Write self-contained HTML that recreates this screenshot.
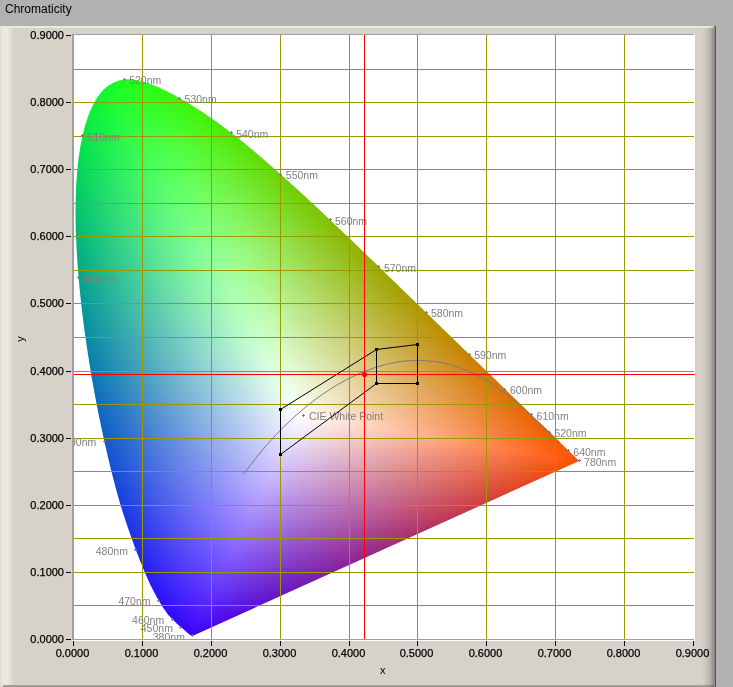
<!DOCTYPE html>
<html><head><meta charset="utf-8">
<style>
html,body{margin:0;padding:0;width:733px;height:687px;overflow:hidden;background:#b1b1b1;font-family:"Liberation Sans",sans-serif;}
#title{position:absolute;left:5px;top:2px;font-size:12px;line-height:14px;color:#000;}
#panel{position:absolute;left:0;top:26px;width:716px;height:661px;background:#d6d2ca;}
#ptop{position:absolute;left:0;top:26px;width:714px;height:2px;background:linear-gradient(90deg,#ebe8dd 0,#ebe8dd 706px,#dedacf 712px,#b9b6ae 714px);}
#pleft{position:absolute;left:0;top:28px;width:14px;height:659px;background:linear-gradient(90deg,#dcd8cc 0px,#ebe7de 2px,#ede9e3 7px,#e4e0d6 10px,#d6d2ca 14px);}
#pright{position:absolute;left:702px;top:26px;width:14px;height:661px;background:linear-gradient(90deg,#d6d2ca 0px,#cdc9bf 3px,#b8b4ac 8px,#9a968f 11px,#8a8780 13px,#55544f 13px,#55544f 14px);}
#pbot{position:absolute;left:3px;top:685px;width:711px;height:2px;background:linear-gradient(90deg,#a19d96 0,#a19d96 700px,#8d8a84 708px,#6a6964 711px);}
#plot{position:absolute;left:72px;top:34px;width:623px;height:607px;background:#fff;}
#plotl{position:absolute;left:72px;top:34px;width:2px;height:606px;background:#a0a0a0;}
#plott{position:absolute;left:72px;top:34px;width:622px;height:1px;background:#a0a0a0;}
#plotb{position:absolute;left:72px;top:639px;width:622px;height:1px;background:#a0a0a0;}
#clip{position:absolute;left:0;top:0;width:733px;height:687px;clip-path:polygon(192.9px 635.7px,192.9px 635.7px,192.9px 635.7px,192.9px 635.7px,192.9px 635.7px,192.9px 635.7px,192.8px 635.7px,192.8px 635.7px,192.8px 635.7px,192.8px 635.7px,192.7px 635.7px,192.7px 635.7px,192.7px 635.7px,192.6px 635.7px,192.6px 635.7px,192.6px 635.7px,192.5px 635.7px,192.5px 635.7px,192.5px 635.8px,192.4px 635.8px,192.4px 635.8px,192.4px 635.8px,192.3px 635.8px,192.3px 635.8px,192.2px 635.8px,192.2px 635.8px,192.1px 635.8px,192.1px 635.8px,192.0px 635.8px,191.9px 635.8px,191.9px 635.8px,191.8px 635.8px,191.8px 635.8px,191.7px 635.8px,191.6px 635.8px,191.5px 635.8px,191.5px 635.7px,191.4px 635.7px,191.3px 635.7px,191.2px 635.6px,191.1px 635.6px,190.9px 635.5px,190.8px 635.4px,190.6px 635.3px,190.5px 635.2px,190.3px 635.1px,190.1px 635.0px,190.0px 634.9px,189.8px 634.7px,189.6px 634.5px,189.3px 634.4px,189.1px 634.2px,188.8px 634.0px,188.6px 633.8px,188.3px 633.5px,188.0px 633.3px,187.7px 633.0px,187.3px 632.7px,187.0px 632.4px,186.6px 632.1px,186.3px 631.7px,185.9px 631.4px,185.4px 631.0px,185.0px 630.6px,184.5px 630.2px,184.0px 629.7px,183.4px 629.3px,182.9px 628.8px,182.2px 628.3px,181.6px 627.7px,180.9px 627.1px,180.2px 626.5px,179.5px 625.9px,178.7px 625.2px,177.9px 624.5px,177.0px 623.7px,176.1px 622.9px,175.2px 622.1px,174.2px 621.1px,173.2px 620.1px,172.2px 619.1px,171.1px 617.9px,170.0px 616.7px,168.8px 615.4px,167.6px 613.9px,166.3px 612.2px,165.0px 610.3px,163.5px 608.2px,161.9px 605.8px,160.3px 603.1px,158.5px 600.2px,156.7px 597.0px,154.8px 593.5px,152.8px 589.6px,150.7px 585.4px,148.5px 580.7px,146.2px 575.6px,143.8px 570.0px,141.3px 563.8px,138.7px 557.2px,135.9px 549.9px,133.0px 542.1px,130.0px 533.7px,126.8px 524.6px,123.6px 514.8px,120.3px 504.3px,117.1px 493.1px,113.9px 481.1px,110.7px 468.5px,107.5px 455.1px,104.3px 441.0px,101.1px 426.3px,97.9px 410.9px,94.9px 395.0px,91.9px 378.7px,89.2px 362.0px,86.6px 345.2px,84.2px 328.3px,82.1px 311.4px,80.2px 294.4px,78.6px 277.7px,77.3px 261.1px,76.4px 245.0px,75.7px 229.3px,75.5px 214.2px,75.7px 199.5px,76.2px 185.4px,77.1px 171.8px,78.5px 158.9px,80.3px 146.8px,82.6px 135.5px,85.2px 125.2px,88.3px 115.8px,91.8px 107.4px,95.6px 100.1px,99.8px 94.0px,104.2px 89.1px,108.9px 85.2px,113.9px 82.4px,119.0px 80.5px,124.2px 79.4px,129.5px 79.2px,135.0px 79.8px,140.5px 80.9px,146.0px 82.5px,151.6px 84.5px,157.3px 86.8px,162.9px 89.4px,168.6px 92.2px,174.1px 95.1px,179.6px 98.2px,185.0px 101.3px,190.3px 104.4px,195.5px 107.7px,200.7px 111.0px,205.9px 114.4px,211.0px 118.0px,216.1px 121.5px,221.1px 125.2px,226.2px 128.9px,231.2px 132.8px,236.2px 136.7px,241.2px 140.6px,246.2px 144.7px,251.1px 148.7px,256.1px 152.9px,261.0px 157.1px,266.0px 161.4px,270.9px 165.7px,275.8px 170.0px,280.8px 174.4px,285.7px 178.8px,290.6px 183.3px,295.6px 187.8px,300.5px 192.3px,305.4px 196.8px,310.3px 201.4px,315.3px 206.0px,320.2px 210.6px,325.1px 215.3px,330.0px 219.9px,334.9px 224.6px,339.9px 229.3px,344.8px 233.9px,349.7px 238.6px,354.6px 243.3px,359.5px 248.0px,364.3px 252.7px,369.2px 257.4px,374.1px 262.1px,378.9px 266.7px,383.7px 271.4px,388.5px 276.0px,393.3px 280.7px,398.1px 285.3px,402.8px 289.9px,407.5px 294.5px,412.2px 299.0px,416.9px 303.5px,421.5px 308.0px,426.0px 312.4px,430.6px 316.8px,435.1px 321.2px,439.5px 325.5px,443.9px 329.8px,448.3px 334.0px,452.6px 338.2px,456.8px 342.3px,461.0px 346.4px,465.2px 350.4px,469.2px 354.3px,473.2px 358.2px,477.1px 362.0px,481.0px 365.7px,484.7px 369.4px,488.4px 372.9px,491.9px 376.3px,495.3px 379.6px,498.6px 382.8px,501.8px 386.0px,505.0px 389.0px,508.0px 392.0px,511.1px 394.9px,514.0px 397.8px,516.8px 400.5px,519.6px 403.2px,522.2px 405.7px,524.7px 408.1px,527.1px 410.5px,529.4px 412.7px,531.6px 414.8px,533.8px 416.9px,535.8px 418.9px,537.8px 420.8px,539.7px 422.7px,541.5px 424.4px,543.2px 426.1px,544.9px 427.7px,546.4px 429.2px,547.9px 430.7px,549.4px 432.1px,550.7px 433.4px,552.0px 434.7px,553.3px 435.9px,554.5px 437.0px,555.6px 438.1px,556.7px 439.2px,557.8px 440.2px,558.8px 441.2px,559.7px 442.1px,560.7px 443.0px,561.6px 443.9px,562.5px 444.7px,563.3px 445.6px,564.1px 446.4px,564.9px 447.1px,565.6px 447.8px,566.4px 448.5px,567.0px 449.2px,567.7px 449.8px,568.3px 450.5px,568.9px 451.1px,569.5px 451.6px,570.1px 452.1px,570.6px 452.7px,571.1px 453.1px,571.6px 453.6px,572.0px 454.0px,572.4px 454.4px,572.8px 454.8px,573.1px 455.1px,573.5px 455.4px,573.8px 455.8px,574.1px 456.1px,574.4px 456.4px,574.7px 456.6px,575.0px 456.9px,575.2px 457.1px,575.4px 457.4px,575.7px 457.6px,575.9px 457.8px,576.1px 458.0px,576.2px 458.1px,576.4px 458.3px,576.5px 458.4px,576.6px 458.5px,576.8px 458.7px,576.9px 458.8px,577.0px 458.9px,577.1px 459.0px,577.3px 459.1px,577.4px 459.2px,577.5px 459.3px,577.6px 459.4px,577.7px 459.5px,577.8px 459.6px,577.9px 459.7px,578.0px 459.8px,578.1px 459.9px,578.1px 460.0px,578.2px 460.1px,578.3px 460.2px,578.4px 460.3px,578.5px 460.4px,578.6px 460.4px,578.7px 460.5px,578.7px 460.6px,578.8px 460.6px,578.8px 460.7px,578.9px 460.7px,578.9px 460.7px,578.9px 460.8px,579.0px 460.8px,579.0px 460.8px,579.0px 460.9px,579.1px 460.9px,579.1px 460.9px,579.1px 460.9px,579.1px 460.9px,579.1px 460.9px,579.1px 460.9px);}
#blur{position:absolute;left:0;top:0;width:733px;height:687px;filter:blur(0.8px);}
#blur i{position:absolute;display:block;height:3px;}
.yl,.xl{-webkit-text-stroke:0.25px #000;}
.yl,.xl,#title{will-change:transform;}
.yl{position:absolute;left:0;width:64px;text-align:right;font-size:11px;line-height:14px;color:#000;}
.xl{position:absolute;top:646px;width:61px;text-align:center;font-size:11px;line-height:14px;color:#000;}
svg{position:absolute;left:0;top:0;}
</style></head><body>
<div id="title">Chromaticity</div>
<div id="panel"></div>
<div id="pleft"></div>
<div id="pright"></div>
<div id="pbot"></div>
<div id="ptop"></div>
<div id="plot"></div>
<div id="clip"><div id="blur">
<i style="left:105px;top:76px;width:48px;background:linear-gradient(90deg,#0dfc20 0px,#12fe1e 8px,#17ff1c 16px,#1bff18 24px,#1fff14 32px,#22fd0f 40px,#24fc0a 48px)"></i>
<i style="left:99px;top:79px;width:63px;background:linear-gradient(90deg,#09fb24 0px,#0ffd22 8px,#15fe20 16px,#19ff1d 24px,#1eff1a 32px,#21ff16 40px,#24fd11 48px,#26fb0c 56px,#28f906 64px)"></i>
<i style="left:96px;top:82px;width:73px;background:linear-gradient(90deg,#08f926 0px,#0efb25 8px,#14fd23 16px,#19ff21 24px,#1dff1e 32px,#21ff1a 40px,#24fe16 48px,#27fd11 56px,#29fb0b 64px,#2bf805 72px,#2df500 80px)"></i>
<i style="left:93px;top:85px;width:82px;background:linear-gradient(90deg,#06f729 0px,#0cfa28 8px,#12fc26 16px,#18fe24 24px,#1dff22 32px,#21ff1f 40px,#25ff1b 48px,#28fd16 56px,#2afc11 64px,#2cf90b 72px,#2ef705 80px,#2ff400 88px)"></i>
<i style="left:90px;top:88px;width:91px;background:linear-gradient(90deg,#04f62b 0px,#0bf92a 8px,#11fb29 16px,#17fd28 24px,#1cfe25 32px,#21ff23 40px,#25ff1f 48px,#28fe1b 56px,#2bfd16 64px,#2dfb10 72px,#2ff80a 80px,#30f604 88px,#32f300 96px)"></i>
<i style="left:88px;top:91px;width:98px;background:linear-gradient(90deg,#03f42d 0px,#0af72d 8px,#10fa2c 16px,#16fc2a 24px,#1cfe29 32px,#21ff26 40px,#25ff23 48px,#29ff1f 56px,#2cfd1a 64px,#2efc15 72px,#30f90f 80px,#32f709 88px,#33f402 96px,#34f100 104px)"></i>
<i style="left:86px;top:94px;width:106px;background:linear-gradient(90deg,#02f32f 0px,#09f62f 8px,#10f92e 16px,#16fb2d 24px,#1cfd2b 32px,#21fe29 40px,#25ff26 48px,#29ff23 56px,#2cfe1e 64px,#2ffc19 72px,#31fa14 80px,#33f80e 88px,#34f507 96px,#36f201 104px,#37ef00 112px)"></i>
<i style="left:84px;top:97px;width:113px;background:linear-gradient(90deg,#01f131 0px,#08f531 8px,#0ff831 16px,#15fa30 24px,#1bfc2e 32px,#21fe2c 40px,#25ff2a 48px,#2aff26 56px,#2dff22 64px,#30fd1d 72px,#32fb18 80px,#34f912 88px,#36f60c 96px,#37f306 104px,#38f000 112px,#39ed00 120px)"></i>
<i style="left:83px;top:100px;width:119px;background:linear-gradient(90deg,#00f033 0px,#08f333 8px,#0ef733 16px,#15f932 24px,#1bfc31 32px,#21fd2f 40px,#26ff2d 48px,#2aff2a 56px,#2eff26 64px,#31fe21 72px,#34fc1c 80px,#36fa16 88px,#37f710 96px,#39f40a 104px,#3af103 112px,#3bee00 120px)"></i>
<i style="left:81px;top:103px;width:126px;background:linear-gradient(90deg,#00ee35 0px,#06f235 8px,#0df535 16px,#14f834 24px,#1bfb33 32px,#20fd32 40px,#26fe30 48px,#2bff2d 56px,#2fff2a 64px,#32fe25 72px,#35fd20 80px,#37fb1b 88px,#39f815 96px,#3af60e 104px,#3bf308 112px,#3cef01 120px,#3dec00 128px)"></i>
<i style="left:80px;top:106px;width:131px;background:linear-gradient(90deg,#00ed37 0px,#06f137 8px,#0df437 16px,#14f737 24px,#1bfa36 32px,#21fc34 40px,#26fe33 48px,#2bff30 56px,#2fff2d 64px,#33ff29 72px,#36fd24 80px,#38fb1f 88px,#3af919 96px,#3cf612 104px,#3df40c 112px,#3ef005 120px,#3fed00 128px,#3fe900 136px)"></i>
<i style="left:79px;top:109px;width:137px;background:linear-gradient(90deg,#00eb39 0px,#06ef39 8px,#0df339 16px,#14f639 24px,#1bf938 32px,#21fb37 40px,#26fd35 48px,#2cff33 56px,#30ff30 64px,#34ff2c 72px,#37fe28 80px,#39fc22 88px,#3bfa1d 96px,#3df716 104px,#3ef410 112px,#40f109 120px,#40ee02 128px,#41ea00 136px,#42e600 144px)"></i>
<i style="left:78px;top:112px;width:142px;background:linear-gradient(90deg,#00ea3b 0px,#05ee3b 8px,#0df23b 16px,#14f53b 24px,#1af83a 32px,#21fb39 40px,#27fd38 48px,#2cfe36 56px,#31ff33 64px,#35ff2f 72px,#38fe2b 80px,#3bfd26 88px,#3dfb20 96px,#3ff81a 104px,#40f514 112px,#41f20e 120px,#42ef07 128px,#43eb00 136px,#43e700 144px)"></i>
<i style="left:77px;top:115px;width:147px;background:linear-gradient(90deg,#00e93c 0px,#05ed3d 8px,#0cf03d 16px,#13f43d 24px,#1af73d 32px,#21fa3c 40px,#27fc3a 48px,#2cfe39 56px,#31ff36 64px,#36ff33 72px,#39ff2f 80px,#3cfd2a 88px,#3efb24 96px,#40f91e 104px,#42f618 112px,#43f312 120px,#44f00b 128px,#45ec04 136px,#45e800 144px,#45e400 152px)"></i>
<i style="left:76px;top:118px;width:152px;background:linear-gradient(90deg,#00e73e 0px,#04eb3f 8px,#0cef3f 16px,#13f33f 24px,#1af63f 32px,#21f93e 40px,#27fb3d 48px,#2dfd3b 56px,#32ff39 64px,#36ff36 72px,#3aff32 80px,#3dfe2d 88px,#40fc28 96px,#41fa22 104px,#43f71c 112px,#44f416 120px,#45f10f 128px,#46ed08 136px,#47ea01 144px,#47e600 152px)"></i>
<i style="left:75px;top:121px;width:158px;background:linear-gradient(90deg,#00e640 0px,#04ea40 8px,#0bee41 16px,#13f241 24px,#1af541 32px,#21f840 40px,#27fb3f 48px,#2dfd3e 56px,#32fe3c 64px,#37ff39 72px,#3bff35 80px,#3efe31 88px,#41fc2c 96px,#43fa26 104px,#45f820 112px,#46f51a 120px,#47f213 128px,#48ee0c 136px,#49eb05 144px,#49e700 152px,#49e300 160px)"></i>
<i style="left:74px;top:124px;width:163px;background:linear-gradient(90deg,#00e441 0px,#03e842 8px,#0bec43 16px,#12f043 24px,#1af443 32px,#20f742 40px,#27fa42 48px,#2dfc40 56px,#33fe3f 64px,#38ff3c 72px,#3cff39 80px,#3ffe34 88px,#42fd30 96px,#44fb2a 104px,#46f924 112px,#48f61e 120px,#49f317 128px,#4aef10 136px,#4aec09 144px,#4be802 152px,#4be400 160px,#4bdf00 168px)"></i>
<i style="left:73px;top:127px;width:167px;background:linear-gradient(90deg,#00e343 0px,#02e744 8px,#0aeb44 16px,#12ef45 24px,#19f345 32px,#20f645 40px,#27f944 48px,#2dfb43 56px,#33fd41 64px,#38ff3f 72px,#3dff3c 80px,#40ff38 88px,#43fe33 96px,#46fc2e 104px,#47f928 112px,#49f722 120px,#4af41b 128px,#4bf014 136px,#4ced0d 144px,#4de906 152px,#4de500 160px,#4de100 168px)"></i>
<i style="left:72px;top:130px;width:172px;background:linear-gradient(90deg,#00e145 0px,#02e545 8px,#0aea46 16px,#11ee46 24px,#19f147 32px,#20f547 40px,#27f846 48px,#2dfb45 56px,#33fd44 64px,#39fe42 72px,#3dff3f 80px,#41ff3b 88px,#44fe37 96px,#47fc32 104px,#49fa2c 112px,#4bf826 120px,#4cf51f 128px,#4df119 136px,#4eee12 144px,#4eea0a 152px,#4fe603 160px,#4fe200 168px,#4fdd00 176px)"></i>
<i style="left:72px;top:133px;width:176px;background:linear-gradient(90deg,#00e046 0px,#02e447 8px,#0ae948 16px,#12ed48 24px,#19f149 32px,#21f449 40px,#28f748 48px,#2efa47 56px,#34fc46 64px,#3afe44 72px,#3fff42 80px,#43ff3e 88px,#46fe3a 96px,#48fd35 104px,#4bfb2f 112px,#4cf829 120px,#4ef523 128px,#4ff21c 136px,#50ee15 144px,#50eb0e 152px,#50e706 160px,#51e200 168px,#51de00 176px)"></i>
<i style="left:71px;top:136px;width:181px;background:linear-gradient(90deg,#00de48 0px,#01e349 8px,#09e74a 16px,#11eb4a 24px,#19ef4b 32px,#20f34b 40px,#27f64a 48px,#2ef94a 56px,#34fc49 64px,#3afe47 72px,#3fff45 80px,#43ff41 88px,#47ff3d 96px,#4afd38 104px,#4cfb33 112px,#4ef92d 120px,#4ff627 128px,#50f320 136px,#51ef19 144px,#52ec12 152px,#52e80a 160px,#52e403 168px,#52df00 176px,#52db00 184px)"></i>
<i style="left:71px;top:139px;width:185px;background:linear-gradient(90deg,#00dd49 0px,#02e24a 8px,#0ae64b 16px,#12ea4c 24px,#19ee4c 32px,#21f24d 40px,#28f64c 48px,#2ff94c 56px,#35fb4b 64px,#3bfd49 72px,#40ff47 80px,#45ff44 88px,#48ff40 96px,#4bfd3b 104px,#4efc36 112px,#4ff930 120px,#51f62a 128px,#52f323 136px,#53f01c 144px,#54ec15 152px,#54e80e 160px,#54e406 168px,#54e000 176px,#54db00 184px,#54d700 192px)"></i>
<i style="left:70px;top:142px;width:189px;background:linear-gradient(90deg,#00dc4b 0px,#01e04c 8px,#09e54d 16px,#11e94e 24px,#19ed4e 32px,#20f14e 40px,#28f54e 48px,#2ff84e 56px,#35fa4d 64px,#3bfd4c 72px,#41fe4a 80px,#45ff47 88px,#49ff44 96px,#4cfe3f 104px,#4ffc3a 112px,#51fa34 120px,#52f72e 128px,#54f427 136px,#55f121 144px,#55ed19 152px,#56ea12 160px,#56e50a 168px,#56e103 176px,#56dd00 184px,#56d800 192px)"></i>
<i style="left:70px;top:145px;width:193px;background:linear-gradient(90deg,#00da4d 0px,#01df4e 8px,#09e44f 16px,#11e84f 24px,#19ec50 32px,#21f050 40px,#28f450 48px,#2ff750 56px,#36fa4f 64px,#3cfc4e 72px,#42fe4c 80px,#47ff4a 88px,#4bff46 96px,#4efe42 104px,#50fd3d 112px,#52fa37 120px,#54f831 128px,#55f52b 136px,#56f224 144px,#57ee1d 152px,#58ea15 160px,#58e60e 168px,#58e206 176px,#58dd00 184px,#58d900 192px,#57d400 200px)"></i>
<i style="left:69px;top:148px;width:197px;background:linear-gradient(90deg,#00d94e 0px,#00dd4f 8px,#09e250 16px,#11e751 24px,#19eb52 32px,#20ef52 40px,#28f352 48px,#2ff652 56px,#36f952 64px,#3cfc51 72px,#42fd4f 80px,#47ff4d 88px,#4bff4a 96px,#4fff45 104px,#52fd41 112px,#54fb3b 120px,#56f935 128px,#57f62f 136px,#58f328 144px,#59ef21 152px,#5aeb1a 160px,#5ae712 168px,#5ae30a 176px,#5adf02 184px,#5ada00 192px,#59d500 200px)"></i>
<i style="left:69px;top:151px;width:201px;background:linear-gradient(90deg,#00d750 0px,#01dc51 8px,#09e152 16px,#11e553 24px,#19ea53 32px,#21ee54 40px,#28f254 48px,#30f554 56px,#36f854 64px,#3dfb53 72px,#43fd51 80px,#48ff4f 88px,#4dff4c 96px,#50ff48 104px,#53fd44 112px,#55fc3e 120px,#57f938 128px,#59f632 136px,#5af32b 144px,#5bf024 152px,#5bec1d 160px,#5ce815 168px,#5ce40e 176px,#5cdf06 184px,#5cdb00 192px,#5bd600 200px,#5bd100 208px)"></i>
<i style="left:68px;top:154px;width:205px;background:linear-gradient(90deg,#00d651 0px,#00db52 8px,#08df53 16px,#10e454 24px,#18e855 32px,#20ec56 40px,#28f056 48px,#2ff456 56px,#36f756 64px,#3dfa55 72px,#43fd54 80px,#49fe52 88px,#4dff4f 96px,#51ff4c 104px,#54fe47 112px,#57fc42 120px,#59fa3c 128px,#5af736 136px,#5cf42f 144px,#5cf128 152px,#5ded21 160px,#5de91a 168px,#5ee512 176px,#5ee00a 184px,#5ddc02 192px,#5dd700 200px,#5dd200 208px)"></i>
<i style="left:68px;top:157px;width:209px;background:linear-gradient(90deg,#00d552 0px,#00d954 8px,#08de55 16px,#11e356 24px,#19e757 32px,#21ec58 40px,#28f058 48px,#30f358 56px,#37f758 64px,#3efa57 72px,#44fc56 80px,#4afe55 88px,#4fff52 96px,#53ff4f 104px,#56fe4a 112px,#58fd45 120px,#5afa3f 128px,#5cf839 136px,#5df533 144px,#5ef12c 152px,#5fee25 160px,#5fea1d 168px,#5fe615 176px,#5fe10d 184px,#5fdd05 192px,#5fd800 200px,#5fd300 208px,#5ece00 216px)"></i>
<i style="left:68px;top:160px;width:212px;background:linear-gradient(90deg,#00d354 0px,#00d855 8px,#09dd57 16px,#11e258 24px,#19e659 32px,#21eb59 40px,#29ef5a 48px,#30f25a 56px,#38f65a 64px,#3ef95a 72px,#45fc59 80px,#4bfe57 88px,#50ff55 96px,#54ff51 104px,#57fe4d 112px,#5afd48 120px,#5cfb42 128px,#5ef83c 136px,#5ff536 144px,#60f22f 152px,#61ee28 160px,#61ea20 168px,#61e619 176px,#61e211 184px,#61dd09 192px,#61d901 200px,#60d400 208px,#60cf00 216px)"></i>
<i style="left:67px;top:163px;width:217px;background:linear-gradient(90deg,#00d255 0px,#00d657 8px,#08db58 16px,#10e059 24px,#18e55a 32px,#20e95b 40px,#28ed5c 48px,#30f15c 56px,#37f55c 64px,#3ef85c 72px,#45fb5b 80px,#4bfd5a 88px,#50fe57 96px,#55ff54 104px,#58ff51 112px,#5bfd4c 120px,#5dfb46 128px,#5ff940 136px,#61f63a 144px,#62f333 152px,#62ef2c 160px,#63ec25 168px,#63e71d 176px,#63e315 184px,#63df0d 192px,#63da05 200px,#62d500 208px,#62d000 216px,#61cb00 224px)"></i>
<i style="left:67px;top:166px;width:220px;background:linear-gradient(90deg,#00d057 0px,#00d558 8px,#08da5a 16px,#10df5b 24px,#19e45c 32px,#21e85d 40px,#29ec5d 48px,#30f05e 56px,#38f45e 64px,#3ff75e 72px,#46fa5d 80px,#4cfd5c 88px,#51fe5a 96px,#56ff57 104px,#5aff53 112px,#5dfe4f 120px,#5ffc49 128px,#61f943 136px,#62f73d 144px,#63f336 152px,#64f02f 160px,#65ec28 168px,#65e820 176px,#65e419 184px,#65df11 192px,#65db08 200px,#64d600 208px,#64d100 216px,#63cc00 224px)"></i>
<i style="left:67px;top:169px;width:223px;background:linear-gradient(90deg,#00cf58 0px,#00d45a 8px,#08d95b 16px,#11de5c 24px,#19e35e 32px,#21e75f 40px,#29eb5f 48px,#31ef60 56px,#38f360 64px,#3ff760 72px,#46fa5f 80px,#4dfc5e 88px,#52fe5c 96px,#57ff5a 104px,#5bff56 112px,#5efe52 120px,#61fc4c 128px,#63fa47 136px,#64f740 144px,#65f43a 152px,#66f133 160px,#67ed2b 168px,#67e924 176px,#67e41c 184px,#67e014 192px,#67db0c 200px,#66d603 208px,#66d200 216px,#65cd00 224px)"></i>
<i style="left:67px;top:172px;width:227px;background:linear-gradient(90deg,#00ce5a 0px,#00d35b 8px,#08d85d 16px,#11dd5e 24px,#19e25f 32px,#21e660 40px,#29ea61 48px,#31ef62 56px,#39f262 64px,#40f662 72px,#47f961 80px,#4dfc60 88px,#53fe5f 96px,#58ff5c 104px,#5cff59 112px,#60fe55 120px,#62fd50 128px,#64fa4a 136px,#66f844 144px,#67f53d 152px,#68f136 160px,#68ed2f 168px,#69e927 176px,#69e51f 184px,#69e117 192px,#68dc0f 200px,#68d707 208px,#68d200 216px,#67cd00 224px,#66c800 232px)"></i>
<i style="left:67px;top:175px;width:230px;background:linear-gradient(90deg,#00cd5b 0px,#00d25d 8px,#09d75e 16px,#11dc60 24px,#19e061 32px,#22e562 40px,#2ae963 48px,#32ee63 56px,#39f264 64px,#41f564 72px,#48f963 80px,#4efb63 88px,#54fd61 96px,#59ff5f 104px,#5eff5c 112px,#61fe58 120px,#64fd53 128px,#66fb4d 136px,#67f847 144px,#69f540 152px,#6af239 160px,#6aee32 168px,#6bea2b 176px,#6be623 184px,#6be11b 192px,#6add13 200px,#6ad80a 208px,#69d302 216px,#69ce00 224px,#68c900 232px)"></i>
<i style="left:66px;top:178px;width:234px;background:linear-gradient(90deg,#00cb5d 0px,#00d05e 8px,#08d560 16px,#10da61 24px,#19df62 32px,#21e363 40px,#29e864 48px,#31ec65 56px,#39f066 64px,#40f466 72px,#47f766 80px,#4efa65 88px,#54fd64 96px,#5afe62 104px,#5eff5f 112px,#62ff5b 120px,#65fd56 128px,#67fb51 136px,#69f94b 144px,#6af644 152px,#6bf33d 160px,#6cef36 168px,#6ceb2f 176px,#6ce727 184px,#6ce21f 192px,#6cde17 200px,#6cd90f 208px,#6bd406 216px,#6bcf00 224px,#6aca00 232px,#6ac500 240px)"></i>
<i style="left:66px;top:181px;width:238px;background:linear-gradient(90deg,#00c95e 0px,#00cf60 8px,#08d461 16px,#10d963 24px,#19de64 32px,#21e265 40px,#29e766 48px,#31eb67 56px,#39ef67 64px,#41f368 72px,#48f768 80px,#4ffa67 88px,#55fc66 96px,#5bfe64 104px,#60ff62 112px,#64ff5e 120px,#67fe59 128px,#69fc54 136px,#6bf94e 144px,#6cf747 152px,#6df341 160px,#6ef03a 168px,#6eec32 176px,#6ee82a 184px,#6ee323 192px,#6edf1a 200px,#6eda12 208px,#6dd50a 216px,#6dd001 224px,#6ccb00 232px,#6cc600 240px)"></i>
<i style="left:66px;top:184px;width:241px;background:linear-gradient(90deg,#00c85f 0px,#00cd61 8px,#08d263 16px,#11d764 24px,#19dc65 32px,#21e167 40px,#2ae668 48px,#32ea69 56px,#3aef69 64px,#41f26a 72px,#49f66a 80px,#50f969 88px,#56fc68 96px,#5cfe67 104px,#61ff64 112px,#65ff61 120px,#68fe5c 128px,#6afc57 136px,#6cfa51 144px,#6ef74b 152px,#6ff444 160px,#70f03d 168px,#70ec36 176px,#70e82e 184px,#70e426 192px,#70df1e 200px,#70da16 208px,#6fd60d 216px,#6fd105 224px,#6ecc00 232px,#6dc700 240px,#6dc100 248px)"></i>
<i style="left:66px;top:187px;width:244px;background:linear-gradient(90deg,#00c761 0px,#00cc63 8px,#08d164 16px,#11d666 24px,#19db67 32px,#22e068 40px,#2ae569 48px,#32e96a 56px,#3aee6b 64px,#42f26b 72px,#49f56c 80px,#50f96b 88px,#57fb6b 96px,#5dfd69 104px,#62ff67 112px,#66ff64 120px,#6afe5f 128px,#6cfd5a 136px,#6efa54 144px,#6ff84e 152px,#71f447 160px,#71f140 168px,#72ed39 176px,#72e931 184px,#72e429 192px,#72e021 200px,#72db19 208px,#71d611 216px,#71d108 224px,#70cc00 232px,#6fc700 240px,#6fc200 248px)"></i>
<i style="left:66px;top:190px;width:247px;background:linear-gradient(90deg,#00c562 0px,#00cb64 8px,#08d066 16px,#11d567 24px,#19da69 32px,#22df6a 40px,#2ae46b 48px,#32e86c 56px,#3aed6d 64px,#42f16d 72px,#4af46e 80px,#51f86d 88px,#58fb6d 96px,#5efd6b 104px,#63ff69 112px,#68ff66 120px,#6bff62 128px,#6efd5d 136px,#70fb57 144px,#71f851 152px,#72f54b 160px,#73f144 168px,#74ee3c 176px,#74ea35 184px,#74e52d 192px,#74e125 200px,#73dc1c 208px,#73d714 216px,#72d20c 224px,#72cd03 232px,#71c800 240px,#71c300 248px)"></i>
<i style="left:66px;top:193px;width:251px;background:linear-gradient(90deg,#00c464 0px,#00c965 8px,#08cf67 16px,#11d469 24px,#1ad96a 32px,#22de6b 40px,#2be36d 48px,#33e76e 56px,#3bec6f 64px,#43f06f 72px,#4af46f 80px,#51f76f 88px,#58fa6f 96px,#5efd6e 104px,#64fe6c 112px,#69ff69 120px,#6cff65 128px,#6ffd60 136px,#71fb5b 144px,#73f954 152px,#74f54e 160px,#75f247 168px,#75ee40 176px,#76ea38 184px,#76e630 192px,#76e128 200px,#75dd20 208px,#75d817 216px,#74d30f 224px,#74ce06 232px,#73c900 240px,#72c300 248px,#72be00 256px)"></i>
<i style="left:66px;top:196px;width:254px;background:linear-gradient(90deg,#00c365 0px,#00c867 8px,#08cd69 16px,#11d36a 24px,#1ad86c 32px,#22dd6d 40px,#2be16e 48px,#33e66f 56px,#3beb70 64px,#43ef71 72px,#4bf371 80px,#52f671 88px,#59fa71 96px,#5ffc70 104px,#65fe6e 112px,#6aff6c 120px,#6eff68 128px,#71fe63 136px,#73fc5e 144px,#75f958 152px,#76f651 160px,#77f34a 168px,#77ef43 176px,#78eb3b 184px,#78e633 192px,#77e22b 200px,#77dd23 208px,#77d81b 216px,#76d312 224px,#76ce0a 232px,#75c901 240px,#74c400 248px,#74bf00 256px)"></i>
<i style="left:66px;top:199px;width:257px;background:linear-gradient(90deg,#00c166 0px,#00c768 8px,#08cc6a 16px,#11d16c 24px,#1ad66d 32px,#22db6f 40px,#2be070 48px,#33e571 56px,#3bea72 64px,#43ee73 72px,#4bf273 80px,#53f673 88px,#5af973 96px,#60fc72 104px,#66fe71 112px,#6bff6e 120px,#6fff6b 128px,#72fe66 136px,#74fc61 144px,#76f95b 152px,#78f754 160px,#78f34d 168px,#79f046 176px,#79eb3f 184px,#79e737 192px,#79e32f 200px,#79de27 208px,#79d91e 216px,#78d416 224px,#78cf0d 232px,#77ca05 240px,#76c500 248px,#76c000 256px,#75bb00 264px)"></i>
<i style="left:66px;top:202px;width:260px;background:linear-gradient(90deg,#00c068 0px,#00c56a 8px,#08cb6b 16px,#11d06d 24px,#1ad56f 32px,#23da70 40px,#2bdf71 48px,#34e473 56px,#3ce974 64px,#44ed75 72px,#4cf175 80px,#53f575 88px,#5af875 96px,#61fb74 104px,#67fd73 112px,#6cff71 120px,#70ff6e 128px,#74fe69 136px,#76fc64 144px,#78fa5e 152px,#79f758 160px,#7af451 168px,#7bf04a 176px,#7bec42 184px,#7be83a 192px,#7be332 200px,#7bdf2a 208px,#7bda22 216px,#7ad519 224px,#79d011 232px,#79cb08 240px,#78c600 248px,#77c000 256px,#77bb00 264px)"></i>
<i style="left:66px;top:205px;width:264px;background:linear-gradient(90deg,#00bf69 0px,#00c46b 8px,#08c96d 16px,#11cf6f 24px,#1ad470 32px,#23d972 40px,#2bde73 48px,#34e374 56px,#3ce875 64px,#44ec76 72px,#4cf077 80px,#54f477 88px,#5bf877 96px,#62fb77 104px,#68fd75 112px,#6dff73 120px,#72ff70 128px,#75fe6c 136px,#78fd67 144px,#7afa61 152px,#7bf85b 160px,#7cf454 168px,#7df14d 176px,#7ded45 184px,#7de83e 192px,#7de436 200px,#7ddf2d 208px,#7cda25 216px,#7cd51d 224px,#7bd014 232px,#7bcb0b 240px,#7ac603 248px,#79c100 256px,#79bc00 264px)"></i>
<i style="left:66px;top:208px;width:267px;background:linear-gradient(90deg,#00bd6b 0px,#00c36c 8px,#08c86e 16px,#11cd70 24px,#1ad372 32px,#23d873 40px,#2cdd75 48px,#34e276 56px,#3ce677 64px,#45eb78 72px,#4cef79 80px,#54f379 88px,#5bf779 96px,#62fa79 104px,#69fd78 112px,#6efe76 120px,#73ff73 128px,#77ff6f 136px,#79fd6a 144px,#7bfb64 152px,#7df85e 160px,#7ef557 168px,#7ff150 176px,#7fed49 184px,#7fe941 192px,#7fe539 200px,#7fe031 208px,#7edb28 216px,#7ed620 224px,#7dd117 232px,#7dcc0f 240px,#7cc706 248px,#7bc200 256px,#7abd00 264px,#7ab700 272px)"></i>
<i style="left:66px;top:211px;width:270px;background:linear-gradient(90deg,#00bc6c 0px,#00c16e 8px,#09c770 16px,#11cc71 24px,#1ad173 32px,#23d775 40px,#2cdc76 48px,#34e177 56px,#3de579 64px,#45ea7a 72px,#4dee7a 80px,#55f27b 88px,#5cf67b 96px,#63f97b 104px,#6afc7a 112px,#6ffe78 120px,#74ff76 128px,#78ff72 136px,#7bfd6d 144px,#7dfb67 152px,#7ef961 160px,#80f55b 168px,#80f254 176px,#81ee4c 184px,#81ea44 192px,#81e53c 200px,#81e134 208px,#80dc2c 216px,#80d723 224px,#7fd21b 232px,#7ecd12 240px,#7ec80a 248px,#7dc301 256px,#7cbd00 264px,#7cb800 272px)"></i>
<i style="left:66px;top:214px;width:273px;background:linear-gradient(90deg,#00ba6d 0px,#00c06f 8px,#09c571 16px,#11cb73 24px,#1ad074 32px,#23d576 40px,#2cda78 48px,#34df79 56px,#3de47a 64px,#45e97b 72px,#4ded7c 80px,#55f27d 88px,#5df57d 96px,#64f97d 104px,#6afc7c 112px,#70fe7b 120px,#75ff78 128px,#79ff75 136px,#7cfe70 144px,#7ffc6b 152px,#80f964 160px,#81f65e 168px,#82f357 176px,#83ef4f 184px,#83ea48 192px,#83e640 200px,#82e138 208px,#82dc2f 216px,#82d827 224px,#81d31e 232px,#80cd16 240px,#80c80d 248px,#7fc304 256px,#7ebe00 264px,#7eb900 272px,#7db400 280px)"></i>
<i style="left:66px;top:217px;width:276px;background:linear-gradient(90deg,#00b96f 0px,#00bf70 8px,#09c472 16px,#11c974 24px,#1acf76 32px,#23d478 40px,#2cd979 48px,#35de7b 56px,#3de37c 64px,#45e87d 72px,#4eec7e 80px,#55f17f 88px,#5df57f 96px,#64f87f 104px,#6bfb7e 112px,#71fd7d 120px,#76ff7b 128px,#7bff78 136px,#7efe73 144px,#80fc6e 152px,#82fa68 160px,#83f761 168px,#84f35a 176px,#84ef53 184px,#85eb4b 192px,#85e743 200px,#84e23b 208px,#84dd33 216px,#83d82a 224px,#83d322 232px,#82ce19 240px,#82c911 248px,#81c408 256px,#80bf00 264px,#7fb900 272px,#7fb400 280px)"></i>
<i style="left:66px;top:220px;width:279px;background:linear-gradient(90deg,#00b870 0px,#00bd72 8px,#09c374 16px,#12c876 24px,#1ace77 32px,#23d379 40px,#2cd87b 48px,#35dd7c 56px,#3de27d 64px,#46e77f 72px,#4eeb80 80px,#56f080 88px,#5ef481 96px,#65f781 104px,#6cfa81 112px,#72fd7f 120px,#78ff7d 128px,#7cff7a 136px,#7ffe76 144px,#82fd71 152px,#83fa6b 160px,#85f764 168px,#86f45d 176px,#86f056 184px,#86ec4e 192px,#86e747 200px,#86e33e 208px,#86de36 216px,#85d92e 224px,#85d425 232px,#84cf1d 240px,#83ca14 248px,#83c50b 256px,#82bf03 264px,#81ba00 272px,#81b500 280px)"></i>
<i style="left:66px;top:223px;width:283px;background:linear-gradient(90deg,#00b671 0px,#00bc73 8px,#09c175 16px,#12c777 24px,#1acc79 32px,#23d17a 40px,#2cd77c 48px,#35dc7e 56px,#3de17f 64px,#46e680 72px,#4eea81 80px,#56ef82 88px,#5ef383 96px,#65f783 104px,#6cfa83 112px,#73fd82 120px,#79fe80 128px,#7dff7d 136px,#81ff79 144px,#83fd74 152px,#85fb6e 160px,#87f868 168px,#88f461 176px,#88f159 184px,#88ec52 192px,#88e84a 200px,#88e342 208px,#88df39 216px,#87da31 224px,#87d529 232px,#86d020 240px,#85ca17 248px,#85c50f 256px,#84c006 264px,#83bb00 272px,#82b600 280px,#82b000 288px)"></i>
<i style="left:66px;top:226px;width:286px;background:linear-gradient(90deg,#00b572 0px,#00ba74 8px,#08c076 16px,#12c578 24px,#1bcb7a 32px,#23d07c 40px,#2cd57e 48px,#35db7f 56px,#3ee081 64px,#46e582 72px,#4ee983 80px,#57ee84 88px,#5ef285 96px,#66f685 104px,#6df985 112px,#74fc84 120px,#7afe82 128px,#7fff80 136px,#82ff7c 144px,#85fd77 152px,#87fb71 160px,#88f86b 168px,#89f564 176px,#8af15d 184px,#8aed55 192px,#8ae94d 200px,#8ae445 208px,#8adf3d 216px,#89da34 224px,#89d52c 232px,#88d023 240px,#87cb1b 248px,#87c612 256px,#86c109 264px,#85bc01 272px,#84b600 280px,#83b100 288px)"></i>
<i style="left:66px;top:229px;width:289px;background:linear-gradient(90deg,#00b374 0px,#00b976 8px,#08be78 16px,#12c47a 24px,#1bc97c 32px,#23cf7d 40px,#2cd47f 48px,#35d981 56px,#3ede82 64px,#46e383 72px,#4fe885 80px,#57ed86 88px,#5ff186 96px,#66f587 104px,#6ef887 112px,#74fb86 120px,#7bfe85 128px,#80ff82 136px,#84ff7f 144px,#86fe7a 152px,#89fb74 160px,#8af96e 168px,#8bf567 176px,#8cf260 184px,#8cee59 192px,#8ce951 200px,#8ce549 208px,#8be040 216px,#8bdb38 224px,#8ad62f 232px,#8ad127 240px,#89cc1e 248px,#88c715 256px,#88c10d 264px,#87bc04 272px,#86b700 280px,#85b200 288px,#85ad00 296px)"></i>
<i style="left:66px;top:232px;width:292px;background:linear-gradient(90deg,#00b275 0px,#00b777 8px,#08bd79 16px,#11c37b 24px,#1bc87d 32px,#23ce7f 40px,#2cd380 48px,#35d882 56px,#3edd84 64px,#46e285 72px,#4fe786 80px,#57ec87 88px,#5ff088 96px,#67f489 104px,#6ef889 112px,#75fb88 120px,#7bfd87 128px,#81ff85 136px,#85ff82 144px,#88fe7d 152px,#8afc78 160px,#8cf971 168px,#8df66b 176px,#8ef263 184px,#8eee5c 192px,#8eea54 200px,#8ee54c 208px,#8de144 216px,#8ddc3b 224px,#8cd733 232px,#8cd22a 240px,#8bcd22 248px,#8ac719 256px,#8ac210 264px,#89bd07 272px,#88b800 280px,#87b200 288px,#86ad00 296px)"></i>
<i style="left:66px;top:235px;width:295px;background:linear-gradient(90deg,#00b076 0px,#00b678 8px,#08bc7a 16px,#11c17c 24px,#1bc77e 32px,#24cc80 40px,#2cd282 48px,#35d784 56px,#3edc85 64px,#47e187 72px,#4fe688 80px,#57eb89 88px,#60ef8a 96px,#67f38a 104px,#6ff78b 112px,#76fa8a 120px,#7cfd89 128px,#82ff88 136px,#86ff84 144px,#8afe80 152px,#8cfc7b 160px,#8dfa75 168px,#8ff76e 176px,#8ff367 184px,#90ef5f 192px,#90eb57 200px,#90e64f 208px,#8fe147 216px,#8fdc3f 224px,#8ed736 232px,#8ed22e 240px,#8dcd25 248px,#8cc81c 256px,#8bc314 264px,#8bbe0b 272px,#8ab802 280px,#89b300 288px,#88ae00 296px)"></i>
<i style="left:66px;top:238px;width:298px;background:linear-gradient(90deg,#00af78 0px,#00b57a 8px,#08ba7c 16px,#11c07e 24px,#1ac580 32px,#24cb81 40px,#2cd083 48px,#35d685 56px,#3edb87 64px,#47e088 72px,#4fe589 80px,#58ea8b 88px,#60ee8c 96px,#68f28c 104px,#6ff68d 112px,#77fa8c 120px,#7dfc8c 128px,#83fe8a 136px,#88ff87 144px,#8bfe83 152px,#8dfd7e 160px,#8ffa78 168px,#90f771 176px,#91f46a 184px,#92f063 192px,#92eb5b 200px,#91e753 208px,#91e24b 216px,#91dd42 224px,#90d83a 232px,#8fd331 240px,#8fce28 248px,#8ec920 256px,#8dc417 264px,#8dbe0e 272px,#8cb906 280px,#8bb400 288px,#8aaf00 296px,#89a900 304px)"></i>
<i style="left:66px;top:241px;width:301px;background:linear-gradient(90deg,#00ad79 0px,#00b37b 8px,#08b97d 16px,#11be7f 24px,#1ac481 32px,#24c983 40px,#2ccf85 48px,#35d486 56px,#3ed988 64px,#47df8a 72px,#50e48b 80px,#58e88c 88px,#60ed8d 96px,#68f18e 104px,#70f58f 112px,#77f98e 120px,#7efc8e 128px,#84fe8c 136px,#89ff8a 144px,#8cff86 152px,#8ffd81 160px,#91fb7b 168px,#92f874 176px,#93f46d 184px,#93f066 192px,#93ec5e 200px,#93e756 208px,#93e34e 216px,#93de46 224px,#92d93d 232px,#91d434 240px,#91cf2c 248px,#90c923 256px,#8fc41a 264px,#8ebf12 272px,#8eba09 280px,#8db500 288px,#8caf00 296px,#8baa00 304px)"></i>
<i style="left:66px;top:244px;width:305px;background:linear-gradient(90deg,#00ac7a 0px,#00b27c 8px,#08b77e 16px,#11bd80 24px,#1ac382 32px,#23c884 40px,#2dce86 48px,#35d388 56px,#3ed88a 64px,#47dd8b 72px,#50e28d 80px,#58e78e 88px,#61ec8f 96px,#69f090 104px,#70f590 112px,#78f890 120px,#7ffb90 128px,#85fe8f 136px,#8aff8d 144px,#8eff89 152px,#91fd84 160px,#92fb7e 168px,#94f878 176px,#95f571 184px,#95f169 192px,#95ed62 200px,#95e85a 208px,#95e351 216px,#94df49 224px,#94da40 232px,#93d438 240px,#93cf2f 248px,#92ca27 256px,#91c51e 264px,#90c015 272px,#90ba0c 280px,#8fb504 288px,#8eb000 296px,#8dab00 304px,#8ca500 312px)"></i>
<i style="left:66px;top:247px;width:308px;background:linear-gradient(90deg,#00aa7b 0px,#00b07d 8px,#08b67f 16px,#11bb82 24px,#1ac184 32px,#23c785 40px,#2dcc87 48px,#35d289 56px,#3ed78b 64px,#47dc8d 72px,#50e18e 80px,#58e68f 88px,#61eb91 96px,#69ef92 104px,#71f492 112px,#78f792 120px,#7ffb92 128px,#86fd91 136px,#8bff8f 144px,#8fff8c 152px,#92fe87 160px,#94fc81 168px,#96f97b 176px,#97f574 184px,#97f26d 192px,#97ed65 200px,#97e95d 208px,#97e455 216px,#96df4c 224px,#96da44 232px,#95d53b 240px,#94d033 248px,#94cb2a 256px,#93c621 264px,#92c019 272px,#91bb10 280px,#91b607 288px,#90b100 296px,#8fab00 304px,#8ea600 312px)"></i>
<i style="left:66px;top:250px;width:311px;background:linear-gradient(90deg,#00a97c 0px,#00af7f 8px,#08b481 16px,#11ba83 24px,#1ac085 32px,#23c587 40px,#2dcb89 48px,#35d08b 56px,#3ed68c 64px,#47db8e 72px,#50e090 80px,#59e591 88px,#61ea92 96px,#69ee93 104px,#71f394 112px,#79f794 120px,#80fa94 128px,#86fd93 136px,#8cff92 144px,#91ff8f 152px,#94fe8a 160px,#96fc84 168px,#97f97e 176px,#98f677 184px,#99f270 192px,#99ee68 200px,#99ea60 208px,#99e558 216px,#98e050 224px,#98db47 232px,#97d63f 240px,#96d136 248px,#96cc2d 256px,#95c625 264px,#94c11c 272px,#93bc13 280px,#93b70a 288px,#92b102 296px,#91ac00 304px,#90a700 312px)"></i>
<i style="left:67px;top:253px;width:313px;background:linear-gradient(90deg,#00a87e 0px,#00ae80 8px,#09b482 16px,#12b984 24px,#1bbf86 32px,#25c588 40px,#2eca8a 48px,#37d08c 56px,#40d58e 64px,#48da90 72px,#51df91 80px,#5ae493 88px,#62e994 96px,#6bee95 104px,#73f296 112px,#7af696 120px,#81fa96 128px,#88fd95 136px,#8efe94 144px,#92ff91 152px,#96fe8c 160px,#98fc87 168px,#99f981 176px,#9af67a 184px,#9bf272 192px,#9bee6b 200px,#9bea63 208px,#9ae55a 216px,#9ae052 224px,#99db4a 232px,#99d641 240px,#98d138 248px,#97cc30 256px,#97c627 264px,#96c11e 272px,#95bc15 280px,#94b70d 288px,#94b104 296px,#93ac00 304px,#92a700 312px,#91a200 320px)"></i>
<i style="left:67px;top:256px;width:316px;background:linear-gradient(90deg,#00a77f 0px,#00ac81 8px,#09b283 16px,#12b886 24px,#1bbd88 32px,#24c38a 40px,#2ec98c 48px,#37ce8e 56px,#40d48f 64px,#48d991 72px,#51de93 80px,#5ae394 88px,#63e896 96px,#6bed97 104px,#73f198 112px,#7bf598 120px,#82f998 128px,#89fc98 136px,#8ffe96 144px,#94ff94 152px,#97fe8f 160px,#99fd8a 168px,#9bfa84 176px,#9cf77d 184px,#9df376 192px,#9def6e 200px,#9dea66 208px,#9ce65e 216px,#9ce155 224px,#9bdc4d 232px,#9bd744 240px,#9ad13c 248px,#99cc33 256px,#99c72a 264px,#98c222 272px,#97bd19 280px,#96b710 288px,#95b207 296px,#95ad00 304px,#94a800 312px,#93a200 320px)"></i>
<i style="left:67px;top:259px;width:319px;background:linear-gradient(90deg,#00a580 0px,#00ab83 8px,#09b185 16px,#12b687 24px,#1bbc89 32px,#24c28b 40px,#2ec78d 48px,#37cd8f 56px,#40d291 64px,#49d893 72px,#51dd94 80px,#5ae296 88px,#63e797 96px,#6bec98 104px,#73f099 112px,#7bf59a 120px,#83f89a 128px,#8afb9a 136px,#90fe99 144px,#95ff96 152px,#98ff92 160px,#9bfd8d 168px,#9dfa87 176px,#9ef780 184px,#9ef479 192px,#9fef72 200px,#9feb6a 208px,#9ee661 216px,#9ee159 224px,#9ddc50 232px,#9dd748 240px,#9cd23f 248px,#9bcd36 256px,#9ac82e 264px,#9ac325 272px,#99bd1c 280px,#98b814 288px,#97b30b 296px,#96ad02 304px,#96a800 312px,#95a300 320px)"></i>
<i style="left:67px;top:262px;width:322px;background:linear-gradient(90deg,#00a482 0px,#00a984 8px,#09af86 16px,#12b588 24px,#1bbb8a 32px,#24c08c 40px,#2dc68e 48px,#37cb90 56px,#40d192 64px,#49d694 72px,#51dc96 80px,#5ae197 88px,#63e699 96px,#6beb9a 104px,#74ef9b 112px,#7cf49c 120px,#83f89c 128px,#8afb9c 136px,#91fd9b 144px,#96ff99 152px,#9aff95 160px,#9dfd90 168px,#9efb8a 176px,#9ff884 184px,#a0f47c 192px,#a0f075 200px,#a0ec6d 208px,#a0e765 216px,#a0e25c 224px,#9fdd54 232px,#9ed84b 240px,#9ed343 248px,#9dce3a 256px,#9cc831 264px,#9cc328 272px,#9bbe20 280px,#9ab917 288px,#99b30e 296px,#98ae05 304px,#98a900 312px,#97a400 320px,#969e00 328px)"></i>
<i style="left:67px;top:265px;width:325px;background:linear-gradient(90deg,#00a283 0px,#00a885 8px,#09ae87 16px,#12b389 24px,#1bb98b 32px,#24bf8e 40px,#2dc490 48px,#37ca92 56px,#40cf94 64px,#49d595 72px,#52da97 80px,#5ae099 88px,#63e59a 96px,#6cea9c 104px,#74ee9d 112px,#7cf39e 120px,#84f79e 128px,#8bfa9e 136px,#91fd9d 144px,#97ff9b 152px,#9bff98 160px,#9efe93 168px,#a0fb8d 176px,#a1f887 184px,#a2f580 192px,#a2f178 200px,#a2ec70 208px,#a2e868 216px,#a2e360 224px,#a1de57 232px,#a0d94f 240px,#a0d446 248px,#9fce3d 256px,#9ec935 264px,#9dc42c 272px,#9dbf23 280px,#9cb91a 288px,#9bb412 296px,#9aaf09 304px,#99aa00 312px,#99a400 320px,#989f00 328px)"></i>
<i style="left:68px;top:268px;width:327px;background:linear-gradient(90deg,#00a184 0px,#00a786 8px,#0aad89 16px,#13b38b 24px,#1cb88d 32px,#25be8f 40px,#2ec491 48px,#38c993 56px,#41cf95 64px,#4ad497 72px,#53da99 80px,#5cdf9a 88px,#64e49c 96px,#6de99d 104px,#75ee9f 112px,#7df29f 120px,#85f6a0 128px,#8cfaa0 136px,#93fd9f 144px,#99ff9e 152px,#9dff9a 160px,#a0fe96 168px,#a2fb90 176px,#a3f889 184px,#a4f582 192px,#a4f17b 200px,#a4ec73 208px,#a4e86a 216px,#a3e362 224px,#a3de5a 232px,#a2d951 240px,#a1d448 248px,#a1ce40 256px,#a0c937 264px,#9fc42e 272px,#9ebf25 280px,#9eb91d 288px,#9db414 296px,#9caf0b 304px,#9baa02 312px,#9aa400 320px,#9a9f00 328px)"></i>
<i style="left:68px;top:271px;width:331px;background:linear-gradient(90deg,#00a085 0px,#00a588 8px,#09ab8a 16px,#13b18c 24px,#1cb78e 32px,#25bc90 40px,#2ec292 48px,#38c894 56px,#41cd96 64px,#4ad398 72px,#53d89a 80px,#5cde9c 88px,#64e39d 96px,#6de89f 104px,#75eda0 112px,#7ef1a1 120px,#85f5a2 128px,#8df9a2 136px,#94fca1 144px,#9afea0 152px,#9eff9d 160px,#a1fe99 168px,#a4fc93 176px,#a5f98d 184px,#a6f686 192px,#a6f27e 200px,#a6ed76 208px,#a6e86e 216px,#a5e465 224px,#a5de5d 232px,#a4d954 240px,#a3d44c 248px,#a3cf43 256px,#a2ca3a 264px,#a1c532 272px,#a0bf29 280px,#a0ba20 288px,#9fb517 296px,#9eb00f 304px,#9daa06 312px,#9ca500 320px,#9ba000 328px,#9b9a00 336px)"></i>
<i style="left:68px;top:274px;width:334px;background:linear-gradient(90deg,#009e87 0px,#00a489 8px,#09aa8b 16px,#13b08d 24px,#1cb58f 32px,#25bb92 40px,#2ec194 48px,#37c696 56px,#41cc98 64px,#4ad19a 72px,#53d79c 80px,#5cdc9d 88px,#64e29f 96px,#6de7a0 104px,#76eca2 112px,#7ef0a3 120px,#86f5a4 128px,#8df8a4 136px,#94fca4 144px,#9bfea2 152px,#a0ffa0 160px,#a3fe9c 168px,#a5fc96 176px,#a7fa90 184px,#a7f689 192px,#a8f281 200px,#a8ee79 208px,#a8e971 216px,#a7e469 224px,#a7df60 232px,#a6da58 240px,#a5d54f 248px,#a5d046 256px,#a4cb3e 264px,#a3c535 272px,#a2c02c 280px,#a1bb23 288px,#a1b61b 296px,#a0b012 304px,#9fab09 312px,#9ea600 320px,#9da000 328px,#9c9b00 336px)"></i>
<i style="left:68px;top:277px;width:337px;background:linear-gradient(90deg,#009c88 0px,#00a28a 8px,#09a88c 16px,#12ae8e 24px,#1cb491 32px,#25ba93 40px,#2ebf95 48px,#37c597 56px,#41cb99 64px,#4ad09b 72px,#53d69d 80px,#5cdb9f 88px,#65e0a0 96px,#6de5a2 104px,#76eaa3 112px,#7eefa5 120px,#86f4a5 128px,#8ef8a6 136px,#95fba6 144px,#9cfea5 152px,#a1ffa3 160px,#a4ff9f 168px,#a7fd99 176px,#a8fa93 184px,#a9f78c 192px,#aaf385 200px,#aaee7d 208px,#a9ea75 216px,#a9e56c 224px,#a8e064 232px,#a8db5b 240px,#a7d653 248px,#a6d04a 256px,#a6cb41 264px,#a5c638 272px,#a4c130 280px,#a3bb27 288px,#a2b61e 296px,#a2b115 304px,#a1ac0d 312px,#a0a604 320px,#9fa100 328px,#9e9c00 336px,#9e9600 344px)"></i>
<i style="left:69px;top:280px;width:339px;background:linear-gradient(90deg,#009c89 0px,#01a18b 8px,#0aa78e 16px,#13ad90 24px,#1db392 32px,#26b994 40px,#2fbe96 48px,#38c499 56px,#42ca9b 64px,#4bcf9d 72px,#54d59f 80px,#5ddaa0 88px,#66e0a2 96px,#6ee5a4 104px,#77eaa5 112px,#7fefa6 120px,#88f3a7 128px,#8ff7a8 136px,#97fba8 144px,#9dfda7 152px,#a2ffa5 160px,#a6ffa1 168px,#a9fd9c 176px,#aafa95 184px,#abf78f 192px,#acf387 200px,#acef7f 208px,#abea77 216px,#abe56f 224px,#aae066 232px,#aadb5e 240px,#a9d655 248px,#a8d04c 256px,#a7cb43 264px,#a7c63b 272px,#a6c132 280px,#a5bc29 288px,#a4b620 296px,#a3b118 304px,#a3ac0f 312px,#a2a606 320px,#a1a100 328px,#a09c00 336px,#9f9600 344px)"></i>
<i style="left:69px;top:283px;width:342px;background:linear-gradient(90deg,#009a8a 0px,#00a08d 8px,#0aa68f 16px,#13ac91 24px,#1db193 32px,#26b796 40px,#2fbd98 48px,#38c39a 56px,#42c89c 64px,#4bce9e 72px,#54d3a0 80px,#5dd9a2 88px,#66dea4 96px,#6fe4a5 104px,#77e9a7 112px,#80eea8 120px,#88f2a9 128px,#90f6aa 136px,#97faaa 144px,#9efda9 152px,#a4ffa7 160px,#a8ffa4 168px,#aafd9f 176px,#acfb99 184px,#adf792 192px,#adf48a 200px,#adef83 208px,#adeb7a 216px,#ade672 224px,#ace16a 232px,#acdc61 240px,#abd658 248px,#aad150 256px,#a9cc47 264px,#a9c73e 272px,#a8c135 280px,#a7bc2d 288px,#a6b724 296px,#a5b21b 304px,#a4ac12 312px,#a4a709 320px,#a3a201 328px,#a29c00 336px,#a19700 344px)"></i>
<i style="left:69px;top:286px;width:345px;background:linear-gradient(90deg,#00988b 0px,#009e8e 8px,#0aa490 16px,#13aa92 24px,#1cb094 32px,#26b697 40px,#2fbb99 48px,#38c19b 56px,#42c79d 64px,#4bcd9f 72px,#54d2a1 80px,#5dd8a3 88px,#66dda5 96px,#6fe2a7 104px,#77e7a8 112px,#80ecaa 120px,#88f1ab 128px,#90f5ab 136px,#98f9ac 144px,#9ffcab 152px,#a5ffaa 160px,#a9ffa7 168px,#acfea2 176px,#aefb9c 184px,#aff895 192px,#aff48e 200px,#aff086 208px,#afeb7e 216px,#afe675 224px,#aee16d 232px,#addc64 240px,#add75c 248px,#acd253 256px,#abcd4a 264px,#aac741 272px,#aac239 280px,#a9bd30 288px,#a8b827 296px,#a7b21e 304px,#a6ad16 312px,#a6a80d 320px,#a5a204 328px,#a49d00 336px,#a39800 344px,#a29300 352px)"></i>
<i style="left:69px;top:289px;width:348px;background:linear-gradient(90deg,#00978d 0px,#009d8f 8px,#09a391 16px,#13a893 24px,#1cae96 32px,#26b498 40px,#2fba9a 48px,#38c09c 56px,#41c59e 64px,#4bcba0 72px,#54d1a2 80px,#5dd6a4 88px,#66dca6 96px,#6fe1a8 104px,#78e6aa 112px,#80ebab 120px,#89f0ac 128px,#91f4ad 136px,#98f8ae 144px,#9ffcad 152px,#a6feac 160px,#aaffaa 168px,#adfea5 176px,#affc9f 184px,#b1f998 192px,#b1f591 200px,#b1f189 208px,#b1ec81 216px,#b1e779 224px,#b0e270 232px,#afdd68 240px,#afd85f 248px,#aed356 256px,#adcd4e 264px,#acc845 272px,#abc33c 280px,#abbe33 288px,#aab82b 296px,#a9b322 304px,#a8ae19 312px,#a7a810 320px,#a7a307 328px,#a69e00 336px,#a59900 344px,#a49300 352px)"></i>
<i style="left:70px;top:292px;width:350px;background:linear-gradient(90deg,#00968e 0px,#019c90 8px,#0aa293 16px,#14a895 24px,#1dae97 32px,#27b399 40px,#30b99c 48px,#39bf9e 56px,#42c5a0 64px,#4ccaa2 72px,#55d0a4 80px,#5ed6a6 88px,#67dba8 96px,#70e0aa 104px,#79e6ab 112px,#81ebad 120px,#8af0ae 128px,#92f4af 136px,#9af8b0 144px,#a1fcaf 152px,#a7feae 160px,#acffac 168px,#affea7 176px,#b1fca1 184px,#b2f99b 192px,#b3f594 200px,#b3f18c 208px,#b3ec84 216px,#b2e77b 224px,#b2e273 232px,#b1dd6a 240px,#b0d861 248px,#b0d359 256px,#afcd50 264px,#aec847 272px,#adc33e 280px,#acbe36 288px,#acb82d 296px,#abb324 304px,#aaae1b 312px,#a9a813 320px,#a8a30a 328px,#a79e01 336px,#a79900 344px,#a69300 352px)"></i>
<i style="left:70px;top:295px;width:353px;background:linear-gradient(90deg,#00948f 0px,#019a91 8px,#0aa094 16px,#14a696 24px,#1dac98 32px,#26b29b 40px,#30b89d 48px,#39bd9f 56px,#42c3a1 64px,#4cc9a3 72px,#55cea5 80px,#5ed4a7 88px,#67daa9 96px,#70dfab 104px,#79e4ad 112px,#82e9ae 120px,#8aeeb0 128px,#92f3b1 136px,#9af7b1 144px,#a2fbb1 152px,#a8feb1 160px,#adffae 168px,#b1feaa 176px,#b3fca5 184px,#b4f99e 192px,#b5f697 200px,#b5f18f 208px,#b5ed87 216px,#b4e87f 224px,#b4e376 232px,#b3de6d 240px,#b2d865 248px,#b2d35c 256px,#b1ce53 264px,#b0c94b 272px,#afc442 280px,#aebe39 288px,#aeb930 296px,#adb427 304px,#acae1f 312px,#aba916 320px,#aaa40d 328px,#a99f04 336px,#a99900 344px,#a89400 352px,#a78f00 360px)"></i>
<i style="left:70px;top:298px;width:356px;background:linear-gradient(90deg,#009390 0px,#019993 8px,#0a9f95 16px,#13a497 24px,#1daa99 32px,#26b09c 40px,#30b69e 48px,#39bca0 56px,#42c2a2 64px,#4bc7a4 72px,#55cda7 80px,#5ed3a9 88px,#67d8ab 96px,#70deac 104px,#79e3ae 112px,#82e8b0 120px,#8aedb1 128px,#93f2b2 136px,#9bf6b3 144px,#a2fab3 152px,#a9fdb3 160px,#aeffb1 168px,#b2ffad 176px,#b5fda8 184px,#b6faa1 192px,#b7f69a 200px,#b7f293 208px,#b7ed8a 216px,#b6e982 224px,#b6e37a 232px,#b5de71 240px,#b4d968 248px,#b3d45f 256px,#b3cf57 264px,#b2c94e 272px,#b1c445 280px,#b0bf3c 288px,#afba34 296px,#afb42b 304px,#aeaf22 312px,#adaa19 320px,#aca410 328px,#ab9f08 336px,#aa9a00 344px,#aa9500 352px,#a98f00 360px)"></i>
<i style="left:71px;top:301px;width:358px;background:linear-gradient(90deg,#009292 0px,#029894 8px,#0b9e96 16px,#14a499 24px,#1eaa9b 32px,#27af9d 40px,#31b59f 48px,#3abba2 56px,#43c1a4 64px,#4cc7a6 72px,#56cca8 80px,#5fd2aa 88px,#68d8ac 96px,#71ddae 104px,#7ae2b0 112px,#83e8b2 120px,#8bedb3 128px,#94f1b4 136px,#9cf6b5 144px,#a4fab5 152px,#aafdb5 160px,#b0ffb3 168px,#b4ffb0 176px,#b6fdaa 184px,#b8faa4 192px,#b8f69d 200px,#b9f295 208px,#b8ed8d 216px,#b8e984 224px,#b7e47c 232px,#b7de73 240px,#b6d96b 248px,#b5d462 256px,#b4cf59 264px,#b4ca50 272px,#b3c448 280px,#b2bf3f 288px,#b1ba36 296px,#b0b42d 304px,#b0af24 312px,#afaa1c 320px,#aea513 328px,#ad9f0a 336px,#ac9a01 344px,#ab9500 352px,#ab8f00 360px)"></i>
<i style="left:71px;top:304px;width:362px;background:linear-gradient(90deg,#009093 0px,#019695 8px,#0b9c97 16px,#14a29a 24px,#1ea89c 32px,#27ae9e 40px,#30b4a1 48px,#3ab9a3 56px,#43bfa5 64px,#4cc5a7 72px,#56cba9 80px,#5fd0ab 88px,#68d6ad 96px,#71dcaf 104px,#7ae1b1 112px,#83e6b3 120px,#8cebb5 128px,#94f0b6 136px,#9cf5b7 144px,#a4f9b7 152px,#abfcb7 160px,#b1ffb6 168px,#b6ffb3 176px,#b8fdad 184px,#bafba7 192px,#baf7a0 200px,#baf398 208px,#baee90 216px,#bae988 224px,#b9e47f 232px,#b9df77 240px,#b8da6e 248px,#b7d565 256px,#b6cf5c 264px,#b5ca54 272px,#b5c54b 280px,#b4c042 288px,#b3ba39 296px,#b2b531 304px,#b1b028 312px,#b1aa1f 320px,#b0a516 328px,#afa00d 336px,#ae9b05 344px,#ad9500 352px,#ac9000 360px,#ac8b00 368px)"></i>
<i style="left:71px;top:307px;width:365px;background:linear-gradient(90deg,#008f94 0px,#019596 8px,#0b9b99 16px,#14a09b 24px,#1da69d 32px,#27ac9f 40px,#30b2a2 48px,#3ab8a4 56px,#43bea6 64px,#4cc4a8 72px,#56c9ab 80px,#5fcfad 88px,#68d5af 96px,#71dab1 104px,#7ae0b3 112px,#83e5b4 120px,#8ceab6 128px,#94efb7 136px,#9df4b9 144px,#a5f8b9 152px,#acfcb9 160px,#b2feb8 168px,#b7ffb5 176px,#bafeb1 184px,#bbfbaa 192px,#bcf8a3 200px,#bcf39c 208px,#bcef94 216px,#bcea8b 224px,#bbe583 232px,#bae07a 240px,#badb71 248px,#b9d569 256px,#b8d060 264px,#b7cb57 272px,#b7c64e 280px,#b6c046 288px,#b5bb3d 296px,#b4b634 304px,#b3b02b 312px,#b2ab22 320px,#b2a61a 328px,#b1a111 336px,#b09b08 344px,#af9600 352px,#ae9100 360px,#ad8b00 368px)"></i>
<i style="left:72px;top:310px;width:367px;background:linear-gradient(90deg,#008e95 0px,#029498 8px,#0c9a9a 16px,#15a09c 24px,#1ea59f 32px,#28aba1 40px,#31b1a3 48px,#3bb7a5 56px,#44bda8 64px,#4dc3aa 72px,#57c9ac 80px,#60ceae 88px,#69d4b0 96px,#72dab2 104px,#7bdfb4 112px,#84e4b6 120px,#8deab8 128px,#96efb9 136px,#9ef3ba 144px,#a6f8bb 152px,#adfbbb 160px,#b4feba 168px,#b9ffb8 176px,#bcfeb3 184px,#bdfbad 192px,#bef8a6 200px,#bef49e 208px,#beef96 216px,#beea8e 224px,#bde585 232px,#bce07c 240px,#bbdb74 248px,#bbd56b 256px,#bad062 264px,#b9cb59 272px,#b8c651 280px,#b8c048 288px,#b7bb3f 296px,#b6b636 304px,#b5b02d 312px,#b4ab25 320px,#b3a61c 328px,#b3a113 336px,#b29b0a 344px,#b19601 352px,#b09100 360px,#af8b00 368px)"></i>
<i style="left:72px;top:313px;width:370px;background:linear-gradient(90deg,#008c96 0px,#029299 8px,#0b989b 16px,#159e9d 24px,#1ea4a0 32px,#28aaa2 40px,#31b0a4 48px,#3ab6a7 56px,#44bba9 64px,#4dc1ab 72px,#56c7ad 80px,#60cdaf 88px,#69d2b2 96px,#72d8b4 104px,#7bdeb6 112px,#84e3b7 120px,#8de8b9 128px,#96eebb 136px,#9ef2bc 144px,#a6f7bd 152px,#aefbbd 160px,#b5febd 168px,#baffba 176px,#bdfeb6 184px,#bffcb0 192px,#c0f8a9 200px,#c0f4a1 208px,#c0f099 216px,#bfeb91 224px,#bfe688 232px,#bee180 240px,#bddb77 248px,#bdd66e 256px,#bcd166 264px,#bbcc5d 272px,#bac654 280px,#b9c14b 288px,#b9bc42 296px,#b8b63a 304px,#b7b131 312px,#b6ac28 320px,#b5a71f 328px,#b4a116 336px,#b49c0e 344px,#b39705 352px,#b29100 360px,#b18c00 368px,#b08700 376px)"></i>
<i style="left:72px;top:316px;width:373px;background:linear-gradient(90deg,#008a97 0px,#02909a 8px,#0b969c 16px,#159c9f 24px,#1ea2a1 32px,#27a8a3 40px,#31aea5 48px,#3ab4a8 56px,#44baaa 64px,#4dc0ac 72px,#56c5af 80px,#60cbb1 88px,#69d1b3 96px,#72d7b5 104px,#7bdcb7 112px,#84e2b9 120px,#8de7bb 128px,#96ecbc 136px,#9ef1be 144px,#a7f6bf 152px,#aefabf 160px,#b5fdbf 168px,#bbffbd 176px,#bffeb9 184px,#c1fcb3 192px,#c2f9ac 200px,#c2f5a5 208px,#c2f09d 216px,#c1eb94 224px,#c1e68c 232px,#c0e183 240px,#bfdc7a 248px,#bed772 256px,#bed269 264px,#bdcc60 272px,#bcc757 280px,#bbc24f 288px,#babc46 296px,#bab73d 304px,#b9b234 312px,#b8ad2b 320px,#b7a723 328px,#b6a21a 336px,#b59d11 344px,#b59708 352px,#b49200 360px,#b38d00 368px,#b28700 376px)"></i>
<i style="left:73px;top:319px;width:375px;background:linear-gradient(90deg,#008a99 0px,#02909b 8px,#0c959e 16px,#159ba0 24px,#1fa1a2 32px,#28a7a5 40px,#32ada7 48px,#3bb3a9 56px,#45b9ab 64px,#4ebfae 72px,#57c5b0 80px,#61cab2 88px,#6ad0b4 96px,#73d6b6 104px,#7cdcb8 112px,#85e1ba 120px,#8ee6bc 128px,#97ecbe 136px,#a0f1bf 144px,#a8f5c0 152px,#b0fac1 160px,#b7fdc1 168px,#bdffbf 176px,#c0ffbb 184px,#c2fcb6 192px,#c3f9af 200px,#c4f5a7 208px,#c4f09f 216px,#c3eb97 224px,#c2e68e 232px,#c2e186 240px,#c1dc7d 248px,#c0d774 256px,#bfd26b 264px,#bfcc63 272px,#bec75a 280px,#bdc251 288px,#bcbc48 296px,#bbb73f 304px,#bbb237 312px,#baad2e 320px,#b9a725 328px,#b8a21c 336px,#b79d13 344px,#b6970b 352px,#b69202 360px,#b58d00 368px,#b48700 376px)"></i>
<i style="left:73px;top:322px;width:378px;background:linear-gradient(90deg,#00889a 0px,#028e9c 8px,#0c949f 16px,#159aa1 24px,#1fa0a3 32px,#28a6a6 40px,#32aca8 48px,#3bb1aa 56px,#44b7ad 64px,#4ebdaf 72px,#57c3b1 80px,#60c9b3 88px,#6acfb6 96px,#73d4b8 104px,#7cdaba 112px,#85e0bc 120px,#8ee5be 128px,#97eabf 136px,#a0f0c1 144px,#a8f4c2 152px,#b0f9c3 160px,#b8fcc3 168px,#beffc2 176px,#c2ffbe 184px,#c4fdb9 192px,#c5fab2 200px,#c6f6ab 208px,#c5f1a3 216px,#c5ec9a 224px,#c4e792 232px,#c4e289 240px,#c3dd80 248px,#c2d877 256px,#c1d26f 264px,#c1cd66 272px,#c0c85d 280px,#bfc254 288px,#bebd4c 296px,#bdb843 304px,#bcb33a 312px,#bcad31 320px,#bba828 328px,#baa320 336px,#b99d17 344px,#b8980e 352px,#b79305 360px,#b78d00 368px,#b68800 376px,#b58300 384px)"></i>
<i style="left:73px;top:325px;width:381px;background:linear-gradient(90deg,#00869b 0px,#028c9d 8px,#0b92a0 16px,#1598a2 24px,#1e9ea4 32px,#28a4a7 40px,#31aaa9 48px,#3bb0ab 56px,#44b6ae 64px,#4ebcb0 72px,#57c2b2 80px,#60c7b5 88px,#6acdb7 96px,#73d3b9 104px,#7cd9bb 112px,#85debd 120px,#8ee4bf 128px,#97e9c1 136px,#a0eec2 144px,#a9f3c4 152px,#b1f8c5 160px,#b8fcc5 168px,#bffec4 176px,#c3ffc1 184px,#c6fdbc 192px,#c7fab5 200px,#c7f6ae 208px,#c7f2a6 216px,#c7ed9e 224px,#c6e895 232px,#c6e38c 240px,#c5dd84 248px,#c4d87b 256px,#c3d372 264px,#c2ce69 272px,#c2c861 280px,#c1c358 288px,#c0be4f 296px,#bfb946 304px,#beb33d 312px,#bdae35 320px,#bda92c 328px,#bca323 336px,#bb9e1a 344px,#ba9911 352px,#b99309 360px,#b88e00 368px,#b88900 376px,#b78400 384px)"></i>
<i style="left:74px;top:328px;width:383px;background:linear-gradient(90deg,#00859c 0px,#038b9f 8px,#0c91a1 16px,#1697a3 24px,#1f9da6 32px,#29a3a8 40px,#32a9ab 48px,#3cafad 56px,#45b5af 64px,#4fbbb2 72px,#58c1b4 80px,#61c7b6 88px,#6bccb8 96px,#74d2ba 104px,#7dd8bd 112px,#86ddbf 120px,#8fe3c1 128px,#98e8c2 136px,#a1eec4 144px,#aaf3c5 152px,#b2f7c7 160px,#bafbc7 168px,#c0fec6 176px,#c5ffc4 184px,#c8fdbe 192px,#c9fab8 200px,#c9f6b0 208px,#c9f2a8 216px,#c9eda0 224px,#c8e897 232px,#c7e38f 240px,#c7dd86 248px,#c6d87d 256px,#c5d374 264px,#c4ce6c 272px,#c3c863 280px,#c3c35a 288px,#c2be51 296px,#c1b948 304px,#c0b340 312px,#bfae37 320px,#bea92e 328px,#bea325 336px,#bd9e1c 344px,#bc9914 352px,#bb930b 360px,#ba8e02 368px,#b98900 376px,#b98400 384px)"></i>
<i style="left:74px;top:331px;width:386px;background:linear-gradient(90deg,#00849d 0px,#038aa0 8px,#0c90a2 16px,#1696a5 24px,#1f9ca7 32px,#29a2a9 40px,#32a7ac 48px,#3badae 56px,#45b3b0 64px,#4eb9b3 72px,#58bfb5 80px,#61c5b7 88px,#6acbb9 96px,#74d1bc 104px,#7dd6be 112px,#86dcc0 120px,#8fe2c2 128px,#98e7c4 136px,#a1ecc6 144px,#aaf2c7 152px,#b2f6c8 160px,#bafac9 168px,#c1fec8 176px,#c6ffc6 184px,#c9fec2 192px,#cbfbbb 200px,#cbf7b4 208px,#cbf3ac 216px,#cbeea3 224px,#cae99b 232px,#c9e392 240px,#c8de89 248px,#c8d981 256px,#c7d478 264px,#c6ce6f 272px,#c5c966 280px,#c4c45d 288px,#c4bf55 296px,#c3b94c 304px,#c2b443 312px,#c1af3a 320px,#c0a931 328px,#bfa429 336px,#bf9f20 344px,#be9917 352px,#bd940e 360px,#bc8f05 368px,#bb8a00 376px,#ba8400 384px,#ba7f00 392px)"></i>
<i style="left:75px;top:334px;width:388px;background:linear-gradient(90deg,#00839f 0px,#0489a1 8px,#0d8fa4 16px,#1795a6 24px,#209ba8 32px,#29a1ab 40px,#33a7ad 48px,#3cadaf 56px,#46b2b2 64px,#4fb8b4 72px,#59beb6 80px,#62c4b9 88px,#6bcabb 96px,#75d0bd 104px,#7ed6bf 112px,#87dbc1 120px,#90e1c3 128px,#9ae6c5 136px,#a2ecc7 144px,#abf1c9 152px,#b4f6ca 160px,#bcfacb 168px,#c3fdca 176px,#c8ffc9 184px,#cbfec4 192px,#cdfbbe 200px,#cdf7b6 208px,#cdf3ae 216px,#cceea6 224px,#cce99d 232px,#cbe394 240px,#cade8c 248px,#c9d983 256px,#c9d47a 264px,#c8ce71 272px,#c7c969 280px,#c6c460 288px,#c5bf57 296px,#c5b94e 304px,#c4b445 312px,#c3af3d 320px,#c2a934 328px,#c1a42b 336px,#c09f22 344px,#c09919 352px,#bf9411 360px,#be8f08 368px,#bd8a00 376px,#bc8400 384px,#bb7f00 392px)"></i>
<i style="left:75px;top:337px;width:392px;background:linear-gradient(90deg,#0081a0 0px,#0387a2 8px,#0d8da5 16px,#1693a7 24px,#2099a9 32px,#299fac 40px,#33a5ae 48px,#3cabb0 56px,#46b1b3 64px,#4fb7b5 72px,#58bdb8 80px,#62c3ba 88px,#6bc8bc 96px,#75cebe 104px,#7ed4c1 112px,#87dac3 120px,#90dfc5 128px,#9ae5c7 136px,#a3eac9 144px,#abf0ca 152px,#b4f5cc 160px,#bcf9cd 168px,#c3fdcd 176px,#c9ffcb 184px,#cdfec7 192px,#cefcc1 200px,#cff8ba 208px,#cff3b1 216px,#ceeea9 224px,#cee9a0 232px,#cde498 240px,#ccdf8f 248px,#cbda86 256px,#cbd47e 264px,#cacf75 272px,#c9ca6c 280px,#c8c563 288px,#c7bf5a 296px,#c6ba52 304px,#c6b549 312px,#c5af40 320px,#c4aa37 328px,#c3a52e 336px,#c29f26 344px,#c19a1d 352px,#c19514 360px,#c0900b 368px,#bf8a02 376px,#be8500 384px,#bd8000 392px)"></i>
<i style="left:75px;top:340px;width:395px;background:linear-gradient(90deg,#007fa1 0px,#0385a3 8px,#0c8ba6 16px,#1691a8 24px,#1f97aa 32px,#299dad 40px,#32a3af 48px,#3ca9b2 56px,#45afb4 64px,#4fb5b6 72px,#58bbb9 80px,#62c1bb 88px,#6bc7bd 96px,#74cdc0 104px,#7ed3c2 112px,#87d8c4 120px,#90dec6 128px,#9ae4c8 136px,#a3e9ca 144px,#abeecc 152px,#b4f4cd 160px,#bcf8ce 168px,#c4fccf 176px,#caffce 184px,#ceffca 192px,#d0fcc4 200px,#d1f8bd 208px,#d1f4b5 216px,#d0efac 224px,#d0eaa4 232px,#cfe59b 240px,#cee092 248px,#cdda8a 256px,#ccd581 264px,#ccd078 272px,#cbca6f 280px,#cac567 288px,#c9c05e 296px,#c8bb55 304px,#c7b54c 312px,#c7b043 320px,#c6ab3b 328px,#c5a532 336px,#c4a029 344px,#c39b20 352px,#c29617 360px,#c2900f 368px,#c18b06 376px,#c08600 384px,#bf8000 392px,#be7b00 400px)"></i>
<i style="left:76px;top:343px;width:397px;background:linear-gradient(90deg,#007ea2 0px,#0484a5 8px,#0d8aa7 16px,#1790a9 24px,#2096ac 32px,#2a9cae 40px,#33a2b1 48px,#3da8b3 56px,#46aeb5 64px,#50b4b8 72px,#59baba 80px,#63c0bc 88px,#6cc6bf 96px,#75ccc1 104px,#7fd2c3 112px,#88d7c5 120px,#91ddc8 128px,#9be3ca 136px,#a4e8cc 144px,#adeecd 152px,#b5f3cf 160px,#bef8d0 168px,#c5fcd1 176px,#ccffd0 184px,#d0ffcc 192px,#d2fcc6 200px,#d3f9bf 208px,#d2f4b7 216px,#d2efaf 224px,#d1eaa6 232px,#d1e59d 240px,#d0e095 248px,#cfda8c 256px,#ced583 264px,#cdd07a 272px,#cdca72 280px,#ccc569 288px,#cbc060 296px,#cabb57 304px,#c9b54e 312px,#c8b046 320px,#c8ab3d 328px,#c7a534 336px,#c6a02b 344px,#c59b22 352px,#c4961a 360px,#c39011 368px,#c38b08 376px,#c28600 384px,#c18000 392px,#c07b00 400px)"></i>
<i style="left:76px;top:346px;width:400px;background:linear-gradient(90deg,#007da3 0px,#0483a6 8px,#0d89a8 16px,#178faa 24px,#2095ad 32px,#2a9baf 40px,#33a1b2 48px,#3da7b4 56px,#46adb6 64px,#4fb3b9 72px,#59b9bb 80px,#62bebd 88px,#6cc4c0 96px,#75cac2 104px,#7fd0c4 112px,#88d6c7 120px,#91dcc9 128px,#9be1cb 136px,#a4e7cd 144px,#adedcf 152px,#b5f2d0 160px,#bef7d2 168px,#c6fbd2 176px,#cdfed2 184px,#d2ffcf 192px,#d4fdca 200px,#d4f9c3 208px,#d4f5bb 216px,#d4f0b2 224px,#d3ebaa 232px,#d2e6a1 240px,#d2e098 248px,#d1db8f 256px,#d0d687 264px,#cfd07e 272px,#cecb75 280px,#cec66c 288px,#cdc163 296px,#ccbb5b 304px,#cbb652 312px,#cab149 320px,#c9ab40 328px,#c9a637 336px,#c8a12f 344px,#c79c26 352px,#c6961d 360px,#c59114 368px,#c48c0b 376px,#c48603 384px,#c38100 392px,#c27c00 400px)"></i>
<i style="left:77px;top:349px;width:402px;background:linear-gradient(90deg,#007ca4 0px,#0482a7 8px,#0e88a9 16px,#178eac 24px,#2194ae 32px,#2a9ab1 40px,#34a0b3 48px,#3da6b5 56px,#47acb8 64px,#50b2ba 72px,#5ab8bd 80px,#63bebf 88px,#6dc4c1 96px,#76c9c4 104px,#80cfc6 112px,#89d5c8 120px,#92dbca 128px,#9ce1cc 136px,#a5e6ce 144px,#aeecd0 152px,#b7f1d2 160px,#bff6d4 168px,#c7fbd4 176px,#cefed4 184px,#d3ffd2 192px,#d6fdcc 200px,#d6f9c5 208px,#d6f5bd 216px,#d6f0b5 224px,#d5ebac 232px,#d4e6a3 240px,#d3e09a 248px,#d3db92 256px,#d2d689 264px,#d1d080 272px,#d0cb77 280px,#cfc66f 288px,#cfc166 296px,#cebb5d 304px,#cdb654 312px,#ccb14b 320px,#cbab43 328px,#caa63a 336px,#caa131 344px,#c99c28 352px,#c8961f 360px,#c79117 368px,#c68c0e 376px,#c58605 384px,#c58100 392px,#c47c00 400px,#c37600 408px)"></i>
<i style="left:77px;top:352px;width:405px;background:linear-gradient(90deg,#007aa6 0px,#0480a8 8px,#0e86aa 16px,#178cad 24px,#2192af 32px,#2a98b2 40px,#349eb4 48px,#3da4b6 56px,#47aab9 64px,#50b0bb 72px,#5ab6be 80px,#63bcc0 88px,#6dc2c2 96px,#76c8c5 104px,#7fcec7 112px,#89d4c9 120px,#92d9cb 128px,#9bdfce 136px,#a5e5d0 144px,#aeead2 152px,#b7f0d4 160px,#bff5d5 168px,#c8fad6 176px,#cffdd6 184px,#d5ffd4 192px,#d7fdcf 200px,#d8fac8 208px,#d8f6c0 216px,#d8f1b8 224px,#d7ebaf 232px,#d6e6a7 240px,#d5e19e 248px,#d5dc95 256px,#d4d68c 264px,#d3d184 272px,#d2cc7b 280px,#d1c772 288px,#d0c169 296px,#d0bc60 304px,#cfb757 312px,#ceb14f 320px,#cdac46 328px,#cca73d 336px,#cba134 344px,#cb9c2c 352px,#ca9723 360px,#c9921a 368px,#c88c11 376px,#c78708 384px,#c68200 392px,#c67c00 400px,#c57700 408px)"></i>
<i style="left:78px;top:355px;width:407px;background:linear-gradient(90deg,#0079a7 0px,#057fa9 8px,#0e85ac 16px,#188bae 24px,#2291b1 32px,#2b97b3 40px,#359db5 48px,#3ea3b8 56px,#48a9ba 64px,#51afbd 72px,#5bb5bf 80px,#64bbc1 88px,#6ec1c4 96px,#77c7c6 104px,#80cdc8 112px,#8ad3cb 120px,#93d9cd 128px,#9cdecf 136px,#a6e4d1 144px,#afead3 152px,#b8efd5 160px,#c1f4d7 168px,#c9f9d8 176px,#d1fdd8 184px,#d6ffd7 192px,#d9fed2 200px,#dafacb 208px,#daf6c3 216px,#d9f1ba 224px,#d9ecb2 232px,#d8e6a9 240px,#d7e1a0 248px,#d6dc97 256px,#d5d68f 264px,#d5d186 272px,#d4cc7d 280px,#d3c774 288px,#d2c16b 296px,#d1bc63 304px,#d0b75a 312px,#d0b151 320px,#cfac48 328px,#cea73f 336px,#cda237 344px,#cc9c2e 352px,#cc9725 360px,#cb921c 368px,#ca8c13 376px,#c9870b 384px,#c88202 392px,#c77c00 400px,#c77700 408px)"></i>
<i style="left:78px;top:358px;width:410px;background:linear-gradient(90deg,#0077a8 0px,#057daa 8px,#0e83ad 16px,#1889af 24px,#218fb2 32px,#2b95b4 40px,#349bb6 48px,#3ea1b9 56px,#47a7bb 64px,#51adbe 72px,#5ab3c0 80px,#64b9c2 88px,#6dbfc5 96px,#77c5c7 104px,#80cbca 112px,#8ad1cc 120px,#93d7ce 128px,#9cddd0 136px,#a6e3d3 144px,#afe8d5 152px,#b8eed7 160px,#c1f3d8 168px,#c9f8da 176px,#d1fcda 184px,#d8ffd9 192px,#dbfed5 200px,#dcfbce 208px,#dcf6c6 216px,#dbf1be 224px,#dbecb5 232px,#dae7ac 240px,#d9e2a4 248px,#d8dc9b 256px,#d7d792 264px,#d7d289 272px,#d6cd80 280px,#d5c778 288px,#d4c26f 296px,#d3bd66 304px,#d2b75d 312px,#d2b254 320px,#d1ad4c 328px,#d0a743 336px,#cfa23a 344px,#ce9d31 352px,#cd9828 360px,#cd9220 368px,#cc8d17 376px,#cb880e 384px,#ca8205 392px,#c97d00 400px,#c87800 408px,#c87300 416px)"></i>
<i style="left:79px;top:361px;width:412px;background:linear-gradient(90deg,#0076a9 0px,#057cac 8px,#0f82ae 16px,#1988b0 24px,#228eb3 32px,#2c94b5 40px,#359ab8 48px,#3fa1ba 56px,#48a7bd 64px,#52adbf 72px,#5bb3c1 80px,#65b8c4 88px,#6ebec6 96px,#78c4c9 104px,#81cacb 112px,#8bd0cd 120px,#94d6d0 128px,#9ddcd2 136px,#a7e2d4 144px,#b0e8d6 152px,#b9edd8 160px,#c2f3da 168px,#cbf8db 176px,#d3fcdc 184px,#d9ffdb 192px,#ddfed7 200px,#defbd1 208px,#def6c9 216px,#ddf1c0 224px,#dcecb7 232px,#dce7af 240px,#dbe2a6 248px,#dadc9d 256px,#d9d794 264px,#d8d28b 272px,#d7cd83 280px,#d7c77a 288px,#d6c271 296px,#d5bd68 304px,#d4b75f 312px,#d3b257 320px,#d2ad4e 328px,#d2a845 336px,#d1a23c 344px,#d09d34 352px,#cf982b 360px,#ce9222 368px,#ce8d19 376px,#cd8810 384px,#cc8208 392px,#cb7d00 400px,#ca7800 408px,#c97300 416px)"></i>
<i style="left:79px;top:364px;width:415px;background:linear-gradient(90deg,#0075aa 0px,#057bad 8px,#0f81af 16px,#1887b1 24px,#228db4 32px,#2b93b6 40px,#3599b9 48px,#3e9fbb 56px,#48a5be 64px,#51abc0 72px,#5bb1c2 80px,#64b7c5 88px,#6ebdc7 96px,#77c3ca 104px,#81c9cc 112px,#8acfce 120px,#94d5d1 128px,#9ddad3 136px,#a6e0d5 144px,#b0e6d7 152px,#b9ecd9 160px,#c2f1db 168px,#cbf6dd 176px,#d3fbde 184px,#dafede 192px,#deffda 200px,#e0fcd4 208px,#e0f7cc 216px,#dff2c3 224px,#deedbb 232px,#dde8b2 240px,#dde2a9 248px,#dcdda0 256px,#dbd898 264px,#dad38f 272px,#d9cd86 280px,#d9c87d 288px,#d8c374 296px,#d7bd6c 304px,#d6b863 312px,#d5b35a 320px,#d4ad51 328px,#d4a848 336px,#d3a340 344px,#d29e37 352px,#d1982e 360px,#d09325 368px,#cf8e1d 376px,#cf8814 384px,#ce830b 392px,#cd7e02 400px,#cc7900 408px,#cb7300 416px)"></i>
<i style="left:79px;top:367px;width:418px;background:linear-gradient(90deg,#0073ab 0px,#0579ae 8px,#0e7fb0 16px,#1885b2 24px,#218bb5 32px,#2b91b7 40px,#3597ba 48px,#3e9dbc 56px,#48a3bf 64px,#51a9c1 72px,#5bafc4 80px,#64b5c6 88px,#6ebbc8 96px,#77c1cb 104px,#81c7cd 112px,#8acdcf 120px,#94d3d2 128px,#9dd9d4 136px,#a6dfd6 144px,#b0e5d9 152px,#b9eadb 160px,#c2f0dd 168px,#cbf5df 176px,#d3fae0 184px,#dbfee0 192px,#e0ffdd 200px,#e1fcd7 208px,#e1f8cf 216px,#e1f3c7 224px,#e0eebe 232px,#dfe8b5 240px,#dfe3ad 248px,#dedea4 256px,#ddd99b 264px,#dcd392 272px,#dbce89 280px,#dac981 288px,#dac378 296px,#d9be6f 304px,#d8b966 312px,#d7b35d 320px,#d6ae55 328px,#d5a94c 336px,#d5a443 344px,#d49e3a 352px,#d39931 360px,#d29429 368px,#d18e20 376px,#d08917 384px,#d0840e 392px,#cf7e05 400px,#ce7900 408px,#cd7400 416px,#cc6f00 424px)"></i>
<i style="left:80px;top:370px;width:421px;background:linear-gradient(90deg,#0072ac 0px,#0678af 8px,#0f7eb1 16px,#1984b4 24px,#228ab6 32px,#2c90b9 40px,#3596bb 48px,#3f9cbe 56px,#48a2c0 64px,#52a8c2 72px,#5baec5 80px,#65b4c7 88px,#6fbaca 96px,#78c0cc 104px,#82c6ce 112px,#8bccd1 120px,#94d2d3 128px,#9ed8d6 136px,#a7ded8 144px,#b1e4da 152px,#baeadc 160px,#c3efde 168px,#ccf5e0 176px,#d5fae2 184px,#dcfee2 192px,#e2ffe0 200px,#e3fcda 208px,#e3f8d2 216px,#e3f3c9 224px,#e2eec1 232px,#e1e8b8 240px,#e0e3af 248px,#dfdea6 256px,#dfd99d 264px,#ded395 272px,#ddce8c 280px,#dcc983 288px,#dbc37a 296px,#dabe71 304px,#dab969 312px,#d9b360 320px,#d8ae57 328px,#d7a94e 336px,#d6a445 344px,#d69e3d 352px,#d59934 360px,#d4942b 368px,#d38e22 376px,#d28919 384px,#d18411 392px,#d17f08 400px,#d07900 408px,#cf7400 416px,#ce6f00 424px)"></i>
<i style="left:80px;top:373px;width:424px;background:linear-gradient(90deg,#0070ad 0px,#0576b0 8px,#0f7cb2 16px,#1882b5 24px,#2288b7 32px,#2b8eba 40px,#3594bc 48px,#3f9abf 56px,#48a0c1 64px,#52a6c3 72px,#5bacc6 80px,#65b2c8 88px,#6eb9cb 96px,#78bfcd 104px,#81c5d0 112px,#8bcad2 120px,#94d0d4 128px,#9ed6d7 136px,#a7dcd9 144px,#b0e2db 152px,#bae8dd 160px,#c3eee0 168px,#ccf3e2 176px,#d5f8e3 184px,#ddfde4 192px,#e3ffe3 200px,#e5fddd 208px,#e5f9d5 216px,#e5f4cd 224px,#e4eec4 232px,#e3e9bb 240px,#e2e4b2 248px,#e1dfaa 256px,#e1d9a1 264px,#e0d498 272px,#dfcf8f 280px,#dec986 288px,#ddc47e 296px,#dcbf75 304px,#dcb96c 312px,#dbb463 320px,#daaf5a 328px,#d9aa52 336px,#d8a449 344px,#d79f40 352px,#d79a37 360px,#d6942e 368px,#d58f26 376px,#d48a1d 384px,#d38414 392px,#d27f0b 400px,#d27a02 408px,#d17500 416px,#d06f00 424px)"></i>
<i style="left:81px;top:376px;width:426px;background:linear-gradient(90deg,#006faf 0px,#0675b1 8px,#107bb4 16px,#1981b6 24px,#2387b9 32px,#2c8dbb 40px,#3693bd 48px,#3f99c0 56px,#499fc2 64px,#53a5c5 72px,#5cacc7 80px,#66b2ca 88px,#6fb8cc 96px,#79becf 104px,#82c4d1 112px,#8ccad3 120px,#95d0d6 128px,#9fd6d8 136px,#a8dbda 144px,#b1e1dd 152px,#bbe7df 160px,#c4ede1 168px,#cdf3e3 176px,#d6f8e5 184px,#defce6 192px,#e5ffe5 200px,#e7fddf 208px,#e7f9d7 216px,#e6f4cf 224px,#e6eec6 232px,#e5e9bd 240px,#e4e4b5 248px,#e3dfac 256px,#e2d9a3 264px,#e1d49a 272px,#e1cf91 280px,#e0c989 288px,#dfc480 296px,#debf77 304px,#ddb96e 312px,#dcb465 320px,#dcaf5d 328px,#dbaa54 336px,#daa44b 344px,#d99f42 352px,#d89a39 360px,#d79431 368px,#d78f28 376px,#d68a1f 384px,#d58416 392px,#d47f0d 400px,#d37a05 408px,#d27500 416px,#d26f00 424px,#d16a00 432px)"></i>
<i style="left:81px;top:379px;width:429px;background:linear-gradient(90deg,#006db0 0px,#0673b2 8px,#0f79b5 16px,#197fb7 24px,#2286ba 32px,#2c8cbc 40px,#3692be 48px,#3f98c1 56px,#499ec3 64px,#52a4c6 72px,#5caac8 80px,#65b0cb 88px,#6fb6cd 96px,#78bcd0 104px,#82c2d2 112px,#8bc8d4 120px,#95ced7 128px,#9ed4d9 136px,#a8dadc 144px,#b1e0de 152px,#bbe6e0 160px,#c4ebe2 168px,#cdf1e4 176px,#d6f7e6 184px,#dffce8 192px,#e6ffe7 200px,#e9fee3 208px,#e9f9db 216px,#e8f4d2 224px,#e7efca 232px,#e7eac1 240px,#e6e5b8 248px,#e5dfaf 256px,#e4daa6 264px,#e3d59e 272px,#e2cf95 280px,#e2ca8c 288px,#e1c583 296px,#e0bf7a 304px,#dfba72 312px,#deb569 320px,#deb060 328px,#ddaa57 336px,#dca54e 344px,#dba046 352px,#da9a3d 360px,#d99534 368px,#d9902b 376px,#d88a22 384px,#d7851a 392px,#d68011 400px,#d57b08 408px,#d47500 416px,#d47000 424px,#d36b00 432px)"></i>
<i style="left:82px;top:382px;width:431px;background:linear-gradient(90deg,#006cb1 0px,#0772b3 8px,#1078b6 16px,#1a7eb8 24px,#2385bb 32px,#2d8bbd 40px,#3691c0 48px,#4097c2 56px,#499dc5 64px,#53a3c7 72px,#5da9ca 80px,#66afcc 88px,#70b5ce 96px,#79bbd1 104px,#83c1d3 112px,#8cc7d6 120px,#96cdd8 128px,#9fd3db 136px,#a9d9dd 144px,#b2dfdf 152px,#bce5e2 160px,#c5ebe4 168px,#cef0e6 176px,#d7f6e8 184px,#e0fbe9 192px,#e7ffea 200px,#eafee5 208px,#ebf9dd 216px,#eaf4d5 224px,#e9efcc 232px,#e8eac3 240px,#e8e5ba 248px,#e7dfb2 256px,#e6daa9 264px,#e5d5a0 272px,#e4cf97 280px,#e3ca8e 288px,#e3c586 296px,#e2bf7d 304px,#e1ba74 312px,#e0b56b 320px,#dfb062 328px,#deaa5a 336px,#dea551 344px,#dda048 352px,#dc9a3f 360px,#db9536 368px,#da902e 376px,#d98a25 384px,#d9851c 392px,#d88013 400px,#d77b0a 408px,#d67502 416px,#d57000 424px,#d46b00 432px)"></i>
<i style="left:83px;top:385px;width:433px;background:linear-gradient(90deg,#006bb2 0px,#0771b5 8px,#1177b7 16px,#1b7dba 24px,#2483bc 32px,#2e8abf 40px,#3790c1 48px,#4196c3 56px,#4a9cc6 64px,#54a2c8 72px,#5da8cb 80px,#67aecd 88px,#71b4d0 96px,#7abad2 104px,#84c0d5 112px,#8dc6d7 120px,#97ccd9 128px,#a0d2dc 136px,#aad8de 144px,#b3dee1 152px,#bde4e3 160px,#c6eae5 168px,#cff0e8 176px,#d9f5ea 184px,#e1fbeb 192px,#e9feec 200px,#ecfee7 208px,#ecfae0 216px,#ecf4d7 224px,#ebefce 232px,#eaeac5 240px,#e9e5bd 248px,#e9dfb4 256px,#e8daab 264px,#e7d5a2 272px,#e6cf99 280px,#e5ca91 288px,#e4c588 296px,#e4bf7f 304px,#e3ba76 312px,#e2b56d 320px,#e1b065 328px,#e0aa5c 336px,#dfa553 344px,#dfa04a 352px,#de9a41 360px,#dd9539 368px,#dc9030 376px,#db8b27 384px,#da851e 392px,#da8015 400px,#d97b0d 408px,#d87504 416px,#d77000 424px,#d66b00 432px,#d56500 440px)"></i>
<i style="left:83px;top:388px;width:436px;background:linear-gradient(90deg,#0069b3 0px,#0770b6 8px,#1176b8 16px,#1a7cbb 24px,#2482bd 32px,#2d88bf 40px,#378ec2 48px,#4094c4 56px,#4a9ac7 64px,#54a0c9 72px,#5da6cc 80px,#67acce 88px,#70b2d1 96px,#7ab8d3 104px,#83bed6 112px,#8dc4d8 120px,#96cada 128px,#a0d0dd 136px,#a9d6df 144px,#b3dce2 152px,#bce2e4 160px,#c6e8e6 168px,#cfeee9 176px,#d8f4eb 184px,#e1f9ed 192px,#eafeee 200px,#eefeeb 208px,#eefae3 216px,#eef5da 224px,#edf0d2 232px,#ecebc9 240px,#ebe5c0 248px,#eae0b7 256px,#eadbae 264px,#e9d5a6 272px,#e8d09d 280px,#e7cb94 288px,#e6c58b 296px,#e5c082 304px,#e5bb7a 312px,#e4b671 320px,#e3b068 328px,#e2ab5f 336px,#e1a656 344px,#e0a04e 352px,#e09b45 360px,#df963c 368px,#de9033 376px,#dd8b2a 384px,#dc8622 392px,#db8119 400px,#db7b10 408px,#da7607 416px,#d97100 424px,#d86b00 432px,#d76600 440px)"></i>
<i style="left:84px;top:391px;width:438px;background:linear-gradient(90deg,#0068b4 0px,#086fb7 8px,#1175b9 16px,#1b7bbc 24px,#2581be 32px,#2e87c1 40px,#388dc3 48px,#4193c6 56px,#4b99c8 64px,#549fcb 72px,#5ea5cd 80px,#67abd0 88px,#71b1d2 96px,#7bb7d4 104px,#84bdd7 112px,#8ec3d9 120px,#97c9dc 128px,#a1cfde 136px,#aad5e1 144px,#b4dbe3 152px,#bde1e5 160px,#c7e7e8 168px,#d0edea 176px,#daf3ec 184px,#e3f9ee 192px,#ebfdf0 200px,#f0feed 208px,#f0fae5 216px,#eff5dd 224px,#eff0d4 232px,#eeebcb 240px,#ede5c2 248px,#ece0ba 256px,#ebdbb1 264px,#ebd5a8 272px,#ead09f 280px,#e9cb96 288px,#e8c58e 296px,#e7c085 304px,#e6bb7c 312px,#e6b673 320px,#e5b06a 328px,#e4ab62 336px,#e3a659 344px,#e2a050 352px,#e19b47 360px,#e1963e 368px,#e09136 376px,#df8b2d 384px,#de8624 392px,#dd811b 400px,#dc7b12 408px,#dc760a 416px,#db7101 424px,#da6b00 432px,#d96600 440px)"></i>
<i style="left:84px;top:394px;width:441px;background:linear-gradient(90deg,#0067b5 0px,#076db8 8px,#1173ba 16px,#1b79bd 24px,#247fbf 32px,#2e85c2 40px,#378bc4 48px,#4191c7 56px,#4a97c9 64px,#549dcc 72px,#5ea3ce 80px,#67a9d1 88px,#71afd3 96px,#7ab5d5 104px,#84bcd8 112px,#8dc2da 120px,#97c8dd 128px,#a0cedf 136px,#aad4e2 144px,#b3dae4 152px,#bde0e7 160px,#c6e6e9 168px,#d0eceb 176px,#d9f2ee 184px,#e3f7f0 192px,#ebfcf1 200px,#f2fff0 208px,#f2fbe9 216px,#f1f6e0 224px,#f1f1d7 232px,#f0ebcf 240px,#efe6c6 248px,#eee1bd 256px,#eddbb4 264px,#ecd6ab 272px,#ecd1a3 280px,#ebcb9a 288px,#eac691 296px,#e9c188 304px,#e8bc7f 312px,#e7b677 320px,#e7b16e 328px,#e6ac65 336px,#e5a65c 344px,#e4a153 352px,#e39c4b 360px,#e29642 368px,#e29139 376px,#e18c30 384px,#e08727 392px,#df811f 400px,#de7c16 408px,#dd770d 416px,#dd7104 424px,#dc6c00 432px,#db6700 440px,#da6200 448px)"></i>
<i style="left:85px;top:397px;width:443px;background:linear-gradient(90deg,#0066b7 0px,#086cb9 8px,#1272bc 16px,#1b78be 24px,#257ec0 32px,#2f84c3 40px,#388ac5 48px,#4290c8 56px,#4b96ca 64px,#559ccd 72px,#5ea2cf 80px,#68a8d2 88px,#71aed4 96px,#7bb4d7 104px,#85bbd9 112px,#8ec1dc 120px,#98c7de 128px,#a1cde1 136px,#abd3e3 144px,#b4d9e5 152px,#bedfe8 160px,#c7e5ea 168px,#d1ebed 176px,#daf1ef 184px,#e4f6f1 192px,#edfcf3 200px,#f3fff3 208px,#f4fbeb 216px,#f3f6e2 224px,#f2f1da 232px,#f1ebd1 240px,#f1e6c8 248px,#f0e1bf 256px,#efdbb6 264px,#eed6ae 272px,#edd1a5 280px,#eccb9c 288px,#ecc693 296px,#ebc18a 304px,#eabc82 312px,#e9b679 320px,#e8b170 328px,#e7ac67 336px,#e7a65e 344px,#e6a156 352px,#e59c4d 360px,#e49644 368px,#e3913b 376px,#e38c32 384px,#e2872a 392px,#e18121 400px,#e07c18 408px,#df770f 416px,#de7106 424px,#de6c00 432px,#dd6700 440px,#dc6200 448px)"></i>
<i style="left:85px;top:400px;width:446px;background:linear-gradient(90deg,#0064b8 0px,#086aba 8px,#1170bc 16px,#1b76bf 24px,#257cc1 32px,#2e82c4 40px,#3888c6 48px,#418ec9 56px,#4b94cb 64px,#549ace 72px,#5ea0d0 80px,#68a7d3 88px,#71add5 96px,#7bb3d8 104px,#84b9da 112px,#8ebfdd 120px,#97c5df 128px,#a1cbe2 136px,#aad1e4 144px,#b4d7e6 152px,#bedde9 160px,#c7e3eb 168px,#d1e9ee 176px,#daeff0 184px,#e4f5f2 192px,#edfbf5 200px,#f5fff5 208px,#f6fcef 216px,#f5f7e6 224px,#f4f1dd 232px,#f3ecd4 240px,#f3e7cb 248px,#f2e1c3 256px,#f1dcba 264px,#f0d7b1 272px,#efd1a8 280px,#eecc9f 288px,#eec797 296px,#edc28e 304px,#ecbc85 312px,#ebb77c 320px,#eab273 328px,#e9ac6b 336px,#e9a762 344px,#e8a259 352px,#e79c50 360px,#e69747 368px,#e5923f 376px,#e48d36 384px,#e4872d 392px,#e38224 400px,#e27d1b 408px,#e17713 416px,#e0720a 424px,#df6d01 432px,#df6800 440px,#de6200 448px)"></i>
<i style="left:86px;top:403px;width:449px;background:linear-gradient(90deg,#0063b9 0px,#0969bb 8px,#126fbe 16px,#1c75c0 24px,#257bc3 32px,#2f81c5 40px,#3987c8 48px,#428dca 56px,#4c93cd 64px,#5599cf 72px,#5f9fd2 80px,#68a6d4 88px,#72acd6 96px,#7cb2d9 104px,#85b8db 112px,#8fbede 120px,#98c4e0 128px,#a2cae3 136px,#abd0e5 144px,#b5d6e8 152px,#bedcea 160px,#c8e2ed 168px,#d2e8ef 176px,#dbeef2 184px,#e4f4f4 192px,#eefaf6 200px,#f6fff7 208px,#f8fcf1 216px,#f7f7e8 224px,#f6f1df 232px,#f5ecd7 240px,#f4e7ce 248px,#f3e1c5 256px,#f3dcbc 264px,#f2d7b3 272px,#f1d1ab 280px,#f0cca2 288px,#efc799 296px,#eec290 304px,#eebc87 312px,#edb77f 320px,#ecb276 328px,#ebac6d 336px,#eaa764 344px,#e9a25b 352px,#e99c53 360px,#e8974a 368px,#e79241 376px,#e68d38 384px,#e5872f 392px,#e48227 400px,#e47d1e 408px,#e37715 416px,#e2720c 424px,#e16d03 432px,#e06800 440px,#e06200 448px,#df5d00 456px)"></i>
<i style="left:86px;top:406px;width:452px;background:linear-gradient(90deg,#0061ba 0px,#0867bc 8px,#126dbf 16px,#1b73c1 24px,#2579c4 32px,#2f7fc6 40px,#3885c9 48px,#428bcb 56px,#4b92ce 64px,#5598d0 72px,#5e9ed2 80px,#68a4d5 88px,#72aad7 96px,#7bb0da 104px,#85b6dc 112px,#8ebcdf 120px,#98c2e1 128px,#a1c8e4 136px,#abcee6 144px,#b5d4e9 152px,#bedaeb 160px,#c8e0ee 168px,#d1e6f0 176px,#dbecf3 184px,#e4f2f5 192px,#eef8f7 200px,#f7fef9 208px,#f9fcf4 216px,#f9f7ec 224px,#f8f2e3 232px,#f7edda 240px,#f6e7d1 248px,#f5e2c8 256px,#f5ddc0 264px,#f4d7b7 272px,#f3d2ae 280px,#f2cda5 288px,#f1c89c 296px,#f0c294 304px,#f0bd8b 312px,#efb882 320px,#eeb279 328px,#edad70 336px,#eca868 344px,#eba25f 352px,#eb9d56 360px,#ea984d 368px,#e99344 376px,#e88d3c 384px,#e78833 392px,#e6832a 400px,#e67d21 408px,#e57818 416px,#e47310 424px,#e36e07 432px,#e26800 440px,#e16300 448px,#e15e00 456px)"></i>
<i style="left:87px;top:409px;width:454px;background:linear-gradient(90deg,#0060bb 0px,#0966bd 8px,#136cc0 16px,#1c72c2 24px,#2678c5 32px,#2f7ec7 40px,#3984ca 48px,#428acc 56px,#4c90cf 64px,#5697d1 72px,#5f9dd4 80px,#69a3d6 88px,#72a9d9 96px,#7cafdb 104px,#85b5de 112px,#8fbbe0 120px,#99c1e3 128px,#a2c7e5 136px,#accde7 144px,#b5d3ea 152px,#bfd9ec 160px,#c8dfef 168px,#d2e5f1 176px,#dcebf4 184px,#e5f2f6 192px,#eff8f9 200px,#f8fdfb 208px,#fbfdf7 216px,#faf7ee 224px,#faf2e5 232px,#f9eddc 240px,#f8e7d3 248px,#f7e2cb 256px,#f6ddc2 264px,#f5d7b9 272px,#f5d2b0 280px,#f4cda7 288px,#f3c89f 296px,#f2c296 304px,#f1bd8d 312px,#f0b884 320px,#f0b27b 328px,#efad73 336px,#eea86a 344px,#eda261 352px,#ec9d58 360px,#eb984f 368px,#eb9347 376px,#ea8d3e 384px,#e98835 392px,#e8832c 400px,#e77d23 408px,#e6781b 416px,#e67312 424px,#e56e09 432px,#e46800 440px,#e36300 448px,#e25e00 456px)"></i>
<i style="left:88px;top:412px;width:456px;background:linear-gradient(90deg,#005fbc 0px,#0a65bf 8px,#136bc1 16px,#1d71c4 24px,#2777c6 32px,#307dc9 40px,#3a83cb 48px,#4389cd 56px,#4d8fd0 64px,#5695d2 72px,#609cd5 80px,#6aa2d7 88px,#73a8da 96px,#7daedc 104px,#86b4df 112px,#90bae1 120px,#99c0e4 128px,#a3c6e6 136px,#adcce9 144px,#b6d2eb 152px,#c0d8ee 160px,#c9def0 168px,#d3e4f3 176px,#dceaf5 184px,#e6f1f8 192px,#f0f7fa 200px,#f9fdfc 208px,#fdfdf9 216px,#fcf7f0 224px,#fbf2e7 232px,#fbeddf 240px,#fae7d6 248px,#f9e2cd 256px,#f8ddc4 264px,#f7d7bb 272px,#f6d2b3 280px,#f6cdaa 288px,#f5c8a1 296px,#f4c298 304px,#f3bd8f 312px,#f2b887 320px,#f1b27e 328px,#f1ad75 336px,#f0a86c 344px,#efa363 352px,#ee9d5b 360px,#ed9852 368px,#ec9349 376px,#ec8d40 384px,#eb8837 392px,#ea832f 400px,#e97d26 408px,#e8781d 416px,#e77314 424px,#e76e0b 432px,#e66803 440px,#e56300 448px,#e45e00 456px)"></i>
<i style="left:88px;top:415px;width:459px;background:linear-gradient(90deg,#005dbd 0px,#0963c0 8px,#1369c2 16px,#1d6fc4 24px,#2675c7 32px,#307bc9 40px,#3981cc 48px,#4388ce 56px,#4c8ed1 64px,#5694d3 72px,#609ad6 80px,#69a0d8 88px,#73a6db 96px,#7cacdd 104px,#86b2e0 112px,#8fb8e2 120px,#99bee5 128px,#a3c4e7 136px,#accaea 144px,#b6d0ec 152px,#bfd6ef 160px,#c9dcf1 168px,#d2e3f4 176px,#dce9f6 184px,#e6eff9 192px,#eff5fb 200px,#f9fbfd 208px,#fffdfc 216px,#fef8f4 224px,#fdf3eb 232px,#fcede2 240px,#fce8d9 248px,#fbe3d0 256px,#faddc8 264px,#f9d8bf 272px,#f8d3b6 280px,#f7cead 288px,#f7c8a4 296px,#f6c39c 304px,#f5be93 312px,#f4b88a 320px,#f3b381 328px,#f2ae78 336px,#f2a970 344px,#f1a367 352px,#f09e5e 360px,#ef9955 368px,#ee934c 376px,#ed8e44 384px,#ed893b 392px,#ec8332 400px,#eb7e29 408px,#ea7920 416px,#e97418 424px,#e86e0f 432px,#e86906 440px,#e76400 448px,#e65e00 456px,#e55900 464px)"></i>
<i style="left:89px;top:418px;width:461px;background:linear-gradient(90deg,#015cbe 0px,#0a62c1 8px,#1468c3 16px,#1d6ec6 24px,#2774c8 32px,#307acb 40px,#3a80cd 48px,#4486d0 56px,#4d8cd2 64px,#5793d5 72px,#6099d7 80px,#6a9fda 88px,#73a5dc 96px,#7dabde 104px,#87b1e1 112px,#90b7e3 120px,#9abde6 128px,#a3c3e8 136px,#adc9eb 144px,#b6cfed 152px,#c0d5f0 160px,#cadbf2 168px,#d3e1f5 176px,#dde8f7 184px,#e6eefa 192px,#f0f4fc 200px,#f9faff 208px,#fdf9fa 216px,#fef6f4 224px,#fff2ed 232px,#feede4 240px,#fde8db 248px,#fde3d3 256px,#fcddca 264px,#fbd8c1 272px,#fad3b8 280px,#f9ceaf 288px,#f8c8a7 296px,#f8c39e 304px,#f7be95 312px,#f6b88c 320px,#f5b383 328px,#f4ae7b 336px,#f3a972 344px,#f3a369 352px,#f29e60 360px,#f19957 368px,#f0934f 376px,#ef8e46 384px,#ee893d 392px,#ee8334 400px,#ed7e2b 408px,#ec7923 416px,#eb741a 424px,#ea6e11 432px,#e96908 440px,#e96400 448px,#e85e00 456px,#e75900 464px)"></i>
<i style="left:89px;top:421px;width:464px;background:linear-gradient(90deg,#005abf 0px,#0a60c2 8px,#1366c4 16px,#1d6cc7 24px,#2672c9 32px,#3078cc 40px,#3a7fce 48px,#4385d1 56px,#4d8bd3 64px,#5691d5 72px,#6097d8 80px,#699dda 88px,#73a3dd 96px,#7da9df 104px,#86afe2 112px,#90b5e4 120px,#99bbe7 128px,#a3c1e9 136px,#acc7ec 144px,#b6cdee 152px,#c0d3f1 160px,#c9daf3 168px,#d3e0f6 176px,#dce6f8 184px,#e6ecfb 192px,#eff2fd 200px,#f8f7ff 208px,#faf5f9 216px,#fbf2f2 224px,#fceeeb 232px,#fdebe5 240px,#fee8de 248px,#fee3d6 256px,#fedecd 264px,#fdd9c4 272px,#fcd4bc 280px,#fbceb3 288px,#fac9aa 296px,#f9c4a1 304px,#f9be98 312px,#f8b990 320px,#f7b487 328px,#f6ae7e 336px,#f5a975 344px,#f4a46c 352px,#f49f64 360px,#f3995b 368px,#f29452 376px,#f18f49 384px,#f08940 392px,#ef8438 400px,#ef7f2f 408px,#ee7a26 416px,#ed741d 424px,#ec6f14 432px,#eb6a0c 440px,#ea6403 448px,#ea5f00 456px,#e95a00 464px)"></i>
<i style="left:90px;top:424px;width:466px;background:linear-gradient(90deg,#0159c0 0px,#0b5fc3 8px,#1465c5 16px,#1e6bc8 24px,#2771ca 32px,#3177cd 40px,#3a7dcf 48px,#4484d2 56px,#4e8ad4 64px,#5790d7 72px,#6196d9 80px,#6a9cdc 88px,#74a2de 96px,#7da8e1 104px,#87aee3 112px,#90b4e6 120px,#9abae8 128px,#a4c0ea 136px,#adc6ed 144px,#b7ccef 152px,#c0d2f2 160px,#cad8f4 168px,#d3def7 176px,#dde4f9 184px,#e6eafc 192px,#f0f0fe 200px,#f7f4fe 208px,#f8f0f7 216px,#f9edf0 224px,#faeae9 232px,#fbe7e3 240px,#fce3dc 248px,#fde0d5 256px,#feddce 264px,#ffd9c7 272px,#fed4be 280px,#fdceb5 288px,#fcc9ac 296px,#fbc4a4 304px,#fabe9b 312px,#fab992 320px,#f9b489 328px,#f8af80 336px,#f7a978 344px,#f6a46f 352px,#f59f66 360px,#f5995d 368px,#f49454 376px,#f38f4c 384px,#f28943 392px,#f1843a 400px,#f07f31 408px,#f07a28 416px,#ef7420 424px,#ee6f17 432px,#ed6a0e 440px,#ec6405 448px,#eb5f00 456px,#eb5a00 464px,#ea5400 472px)"></i>
<i style="left:91px;top:427px;width:468px;background:linear-gradient(90deg,#0258c2 0px,#0b5ec4 8px,#1564c7 16px,#1e6ac9 24px,#2870cb 32px,#3276ce 40px,#3b7cd0 48px,#4582d3 56px,#4e88d5 64px,#588fd8 72px,#6195da 80px,#6b9bdd 88px,#75a1df 96px,#7ea7e2 104px,#88ade4 112px,#91b3e7 120px,#9bb9e9 128px,#a4bfec 136px,#aec5ee 144px,#b7cbf1 152px,#c1d1f3 160px,#cbd7f5 168px,#d4ddf8 176px,#dee3fa 184px,#e7e9fd 192px,#f0efff 200px,#f5effb 208px,#f6ecf5 216px,#f7e9ee 224px,#f8e5e7 232px,#f9e2e0 240px,#fadfda 248px,#fbdcd3 256px,#fcd8cc 264px,#fdd5c5 272px,#fed2bf 280px,#ffceb7 288px,#fec9af 296px,#fdc4a6 304px,#fcbe9d 312px,#fbb994 320px,#fab48b 328px,#faaf83 336px,#f9a97a 344px,#f8a471 352px,#f79f68 360px,#f6995f 368px,#f59457 376px,#f58f4e 384px,#f48945 392px,#f3843c 400px,#f27f33 408px,#f17a2b 416px,#f07422 424px,#f06f19 432px,#ef6a10 440px,#ee6407 448px,#ed5f00 456px,#ec5a00 464px,#ec5400 472px)"></i>
<i style="left:91px;top:430px;width:471px;background:linear-gradient(90deg,#0156c2 0px,#0b5cc5 8px,#1462c7 16px,#1e68ca 24px,#286ecc 32px,#3174cf 40px,#3b7ad1 48px,#4481d4 56px,#4e87d6 64px,#578dd9 72px,#6193db 80px,#6b99de 88px,#749fe0 96px,#7ea5e3 104px,#87abe5 112px,#91b1e8 120px,#9ab7ea 128px,#a4bdec 136px,#adc3ef 144px,#b7c9f1 152px,#c1cff4 160px,#cad5f6 168px,#d4dbf9 176px,#dde1fb 184px,#e6e7fd 192px,#efecff 200px,#f2ebfa 208px,#f3e8f3 216px,#f4e5ed 224px,#f5e1e6 232px,#f6dedf 240px,#f7dbd8 248px,#f8d8d2 256px,#f9d4cb 264px,#fad1c4 272px,#fbcebd 280px,#fccbb6 288px,#fdc7b0 296px,#ffc4a9 304px,#febfa0 312px,#fdba98 320px,#fcb58f 328px,#fcaf86 336px,#fbaa7d 344px,#faa574 352px,#f99f6c 360px,#f89a63 368px,#f7955a 376px,#f78f51 384px,#f68a48 392px,#f58540 400px,#f48037 408px,#f37a2e 416px,#f27525 424px,#f2701c 432px,#f16a14 440px,#f0650b 448px,#ef6002 456px,#ee5a00 464px,#ed5500 472px)"></i>
<i style="left:92px;top:433px;width:474px;background:linear-gradient(90deg,#0255c4 0px,#0c5bc6 8px,#1561c9 16px,#1f67cb 24px,#286dce 32px,#3273d0 40px,#3b79d2 48px,#457fd5 56px,#4f86d7 64px,#588cda 72px,#6292dc 80px,#6b98df 88px,#759ee1 96px,#7ea4e4 104px,#88aae6 112px,#91b0e9 120px,#9bb6eb 128px,#a5bcee 136px,#aec2f0 144px,#b8c8f2 152px,#c1cef5 160px,#cbd4f7 168px,#d4dafa 176px,#dde0fc 184px,#e7e5fe 192px,#efeaff 200px,#f0e7f8 208px,#f1e3f1 216px,#f2e0ea 224px,#f3dde4 232px,#f4dadd 240px,#f5d6d6 248px,#f6d3cf 256px,#f7d0c9 264px,#f8cdc2 272px,#f9c9bb 280px,#fac6b4 288px,#fbc3ad 296px,#fcc0a7 304px,#fdbca0 312px,#feb999 320px,#feb591 328px,#fdaf88 336px,#fcaa7f 344px,#fca577 352px,#fb9f6e 360px,#fa9a65 368px,#f9955c 376px,#f88f54 384px,#f78a4b 392px,#f78542 400px,#f68039 408px,#f57a30 416px,#f47528 424px,#f3701f 432px,#f26a16 440px,#f2650d 448px,#f16004 456px,#f05a00 464px,#ef5500 472px,#ee5000 480px)"></i>
<i style="left:93px;top:436px;width:476px;background:linear-gradient(90deg,#0354c5 0px,#0c5ac7 8px,#1660ca 16px,#1f66cc 24px,#296ccf 32px,#3372d1 40px,#3c78d4 48px,#467ed6 56px,#4f84d9 64px,#598adb 72px,#6291de 80px,#6c97e0 88px,#769de2 96px,#7fa3e5 104px,#89a9e7 112px,#92afea 120px,#9cb5ec 128px,#a5bbef 136px,#afc1f1 144px,#b8c7f4 152px,#c2cdf6 160px,#cbd3f8 168px,#d5d9fb 176px,#dedefd 184px,#e7e4fe 192px,#ece5fd 200px,#ede2f6 208px,#eedfef 216px,#efdce8 224px,#f1d8e2 232px,#f2d5db 240px,#f3d2d4 248px,#f4cfcd 256px,#f5cbc6 264px,#f6c8c0 272px,#f7c5b9 280px,#f8c2b2 288px,#f9beab 296px,#fabba5 304px,#fbb89e 312px,#fcb597 320px,#fdb190 328px,#feae89 336px,#feaa82 344px,#fda579 352px,#fd9f70 360px,#fc9a67 368px,#fb955f 376px,#fa8f56 384px,#f98a4d 392px,#f88544 400px,#f8803b 408px,#f77a33 416px,#f6752a 424px,#f57021 432px,#f46a18 440px,#f3650f 448px,#f36007 456px,#f25b00 464px,#f15500 472px,#f05000 480px)"></i>
<i style="left:93px;top:439px;width:479px;background:linear-gradient(90deg,#0252c6 0px,#0c58c8 8px,#155ecb 16px,#1f64cd 24px,#296ad0 32px,#3270d2 40px,#3c76d5 48px,#457cd7 56px,#4f83d9 64px,#5889dc 72px,#628fde 80px,#6b95e1 88px,#759be3 96px,#7fa1e6 104px,#88a7e8 112px,#92adeb 120px,#9bb3ed 128px,#a5b9f0 136px,#aebff2 144px,#b8c5f4 152px,#c1cbf7 160px,#cbd1f9 168px,#d4d6fb 176px,#dddcfd 184px,#e6e1ff 192px,#eae1fb 200px,#ebdef5 208px,#ecdbee 216px,#edd8e7 224px,#eed4e0 232px,#efd1d9 240px,#f0ced3 248px,#f1cbcc 256px,#f2c7c5 264px,#f3c4be 272px,#f4c1b8 280px,#f5beb1 288px,#f6baaa 296px,#f7b7a3 304px,#f8b49c 312px,#f9b196 320px,#faad8f 328px,#fcaa88 336px,#fda781 344px,#fea37b 352px,#fea074 360px,#fe9b6b 368px,#fd9562 376px,#fc9059 384px,#fb8b50 392px,#fa8648 400px,#f9803f 408px,#f97b36 416px,#f8762d 424px,#f77024 432px,#f66b1c 440px,#f56613 448px,#f4600a 456px,#f45b01 464px,#f35600 472px,#f25100 480px)"></i>
<i style="left:94px;top:442px;width:481px;background:linear-gradient(90deg,#0351c7 0px,#0d57c9 8px,#165dcc 16px,#2063ce 24px,#2969d1 32px,#336fd3 40px,#3c75d6 48px,#467bd8 56px,#5081db 64px,#5987dd 72px,#638de0 80px,#6c94e2 88px,#769ae4 96px,#7fa0e7 104px,#89a6e9 112px,#92acec 120px,#9cb2ee 128px,#a5b8f1 136px,#afbef3 144px,#b8c4f5 152px,#c2c9f8 160px,#cbcffa 168px,#d4d5fc 176px,#dddafe 184px,#e5dfff 192px,#e8ddf9 200px,#e9daf2 208px,#ead6ec 216px,#ebd3e5 224px,#ecd0de 232px,#edcdd7 240px,#eec9d1 248px,#efc6ca 256px,#f0c3c3 264px,#f1c0bc 272px,#f2bcb5 280px,#f3b9af 288px,#f4b6a8 296px,#f5b3a1 304px,#f6af9a 312px,#f7ac94 320px,#f8a98d 328px,#f9a686 336px,#faa27f 344px,#fb9f78 352px,#fc9c72 360px,#fd996b 368px,#fe9564 376px,#fe905b 384px,#fd8b53 392px,#fc864a 400px,#fb8041 408px,#fa7b38 416px,#fa762f 424px,#f97027 432px,#f86b1e 440px,#f76615 448px,#f6610c 456px,#f55b04 464px,#f55600 472px,#f45100 480px,#f34b00 488px)"></i>
<i style="left:94px;top:445px;width:484px;background:linear-gradient(90deg,#034fc8 0px,#0c55ca 8px,#165bcd 16px,#1f61cf 24px,#2967d2 32px,#326dd4 40px,#3c73d7 48px,#4579d9 56px,#4f7fdb 64px,#5986de 72px,#628ce0 80px,#6c92e3 88px,#7598e5 96px,#7f9ee8 104px,#88a4ea 112px,#92aaed 120px,#9bb0ef 128px,#a5b6f1 136px,#aebcf4 144px,#b8c2f6 152px,#c1c7f8 160px,#cacdfa 168px,#d4d3fc 176px,#dcd8fe 184px,#e4dcfe 192px,#e5d9f8 200px,#e6d6f1 208px,#e7d2ea 216px,#e8cfe4 224px,#e9ccdd 232px,#eac9d6 240px,#ebc5cf 248px,#ecc2c8 256px,#edbfc2 264px,#eebcbb 272px,#efb8b4 280px,#f0b5ad 288px,#f2b2a7 296px,#f3afa0 304px,#f4ab99 312px,#f5a892 320px,#f6a58b 328px,#f7a185 336px,#f89e7e 344px,#f99b77 352px,#fa9870 360px,#fb946a 368px,#fc9163 376px,#fd8e5c 384px,#fe8b55 392px,#fe864d 400px,#fd8144 408px,#fc7c3c 416px,#fb7633 424px,#fb712a 432px,#fa6c21 440px,#f96618 448px,#f86110 456px,#f75c07 464px,#f65700 472px,#f65100 480px,#f54c00 488px)"></i>
<i style="left:95px;top:448px;width:486px;background:linear-gradient(90deg,#034ec9 0px,#0d54cb 8px,#165ace 16px,#2060d0 24px,#2a66d3 32px,#336cd5 40px,#3d72d8 48px,#4678da 56px,#507edd 64px,#5984df 72px,#638ae1 80px,#6c90e4 88px,#7696e6 96px,#7f9de9 104px,#89a3eb 112px,#92a9ee 120px,#9caef0 128px,#a5b4f2 136px,#afbaf5 144px,#b8c0f7 152px,#c2c6f9 160px,#cbccfb 168px,#d4d1fd 176px,#dcd6fe 184px,#e2d8fc 192px,#e3d4f6 200px,#e4d1ef 208px,#e5cee8 216px,#e6cbe1 224px,#e7c7db 232px,#e8c4d4 240px,#e9c1cd 248px,#eabec6 256px,#ebbabf 264px,#ecb7b9 272px,#edb4b2 280px,#eeb1ab 288px,#efada4 296px,#f0aa9e 304px,#f1a797 312px,#f2a490 320px,#f3a089 328px,#f49d82 336px,#f59a7c 344px,#f69675 352px,#f7936e 360px,#f89067 368px,#fa8d61 376px,#fb895a 384px,#fc8653 392px,#fd834c 400px,#fe8045 408px,#fe7c3e 416px,#fd7635 424px,#fc712c 432px,#fc6c24 440px,#fb661b 448px,#fa6112 456px,#f95c09 464px,#f85700 472px,#f75100 480px,#f74c00 488px)"></i>
<i style="left:96px;top:451px;width:488px;background:linear-gradient(90deg,#044dca 0px,#0e53cd 8px,#1759cf 16px,#215fd1 24px,#2a65d4 32px,#346bd6 40px,#3d71d9 48px,#4777db 56px,#507dde 64px,#5a83e0 72px,#6489e3 80px,#6d8fe5 88px,#7795e7 96px,#809bea 104px,#8aa1ec 112px,#93a7ef 120px,#9dadf1 128px,#a6b3f3 136px,#afb9f6 144px,#b9bff8 152px,#c2c5fa 160px,#cbcafc 168px,#d4d0fe 176px,#dcd4ff 184px,#dfd3fa 192px,#e0d0f4 200px,#e1cded 208px,#e2c9e6 216px,#e4c6df 224px,#e5c3d8 232px,#e6c0d2 240px,#e7bccb 248px,#e8b9c4 256px,#e9b6bd 264px,#eab3b7 272px,#ebafb0 280px,#ecaca9 288px,#eda9a2 296px,#eea69b 304px,#efa295 312px,#f09f8e 320px,#f19c87 328px,#f29980 336px,#f3957a 344px,#f49273 352px,#f58f6c 360px,#f68b65 368px,#f7885e 376px,#f88558 384px,#f98251 392px,#fa7e4a 400px,#fb7b43 408px,#fc783d 416px,#fd7536 424px,#fe712f 432px,#fd6c26 440px,#fc671d 448px,#fc6114 456px,#fb5c0b 464px,#fa5703 472px,#f95100 480px,#f84c00 488px)"></i>
<i style="left:97px;top:454px;width:490px;background:linear-gradient(90deg,#054ccb 0px,#0e52ce 8px,#1858d0 16px,#215ed3 24px,#2b64d5 32px,#346ad7 40px,#3e70da 48px,#4876dc 56px,#517cdf 64px,#5b82e1 72px,#6488e4 80px,#6e8ee6 88px,#7794e9 96px,#819aeb 104px,#8aa0ed 112px,#94a6f0 120px,#9dacf2 128px,#a6b2f4 136px,#b0b8f7 144px,#b9bdf9 152px,#c2c3fb 160px,#cbc9fd 168px,#d4cefe 176px,#dcd1fe 184px,#ddcff8 192px,#decbf1 200px,#dfc8eb 208px,#e0c5e4 216px,#e1c2dd 224px,#e2bed6 232px,#e3bbcf 240px,#e4b8c9 248px,#e5b5c2 256px,#e6b1bb 264px,#e7aeb4 272px,#e8abae 280px,#e9a8a7 288px,#eaa4a0 296px,#eca199 304px,#ed9e92 312px,#ee9b8c 320px,#ef9785 328px,#f0947e 336px,#f19177 344px,#f28e71 352px,#f38a6a 360px,#f48763 368px,#f5845c 376px,#f68056 384px,#f77d4f 392px,#f87a48 400px,#f97741 408px,#fa733a 416px,#fb7034 424px,#fc6d2d 432px,#fd6a26 440px,#fe661f 448px,#fd6117 456px,#fd5c0e 464px,#fc5705 472px,#fb5100 480px,#fa4c00 488px,#f94700 496px)"></i>
<i style="left:97px;top:457px;width:489px;background:linear-gradient(90deg,#044acc 0px,#0e50cf 8px,#1756d1 16px,#215cd3 24px,#2a62d6 32px,#3468d8 40px,#3e6edb 48px,#4774dd 56px,#517ae0 64px,#5a80e2 72px,#6486e4 80px,#6d8ce7 88px,#7792e9 96px,#8098ec 104px,#8a9eee 112px,#93a4f0 120px,#9caaf3 128px,#a6b0f5 136px,#afb6f7 144px,#b8bbf9 152px,#c2c1fb 160px,#cbc6fd 168px,#d3cbfe 176px,#dacefe 184px,#dbcbf7 192px,#dcc7f0 200px,#ddc4e9 208px,#dec1e2 216px,#dfbedc 224px,#e0bad5 232px,#e1b7ce 240px,#e2b4c7 248px,#e3b1c1 256px,#e4adba 264px,#e5aab3 272px,#e6a7ac 280px,#e7a4a6 288px,#e8a09f 296px,#e99d98 304px,#ea9a91 312px,#eb968a 320px,#ec9384 328px,#ed907d 336px,#ee8d76 344px,#ef896f 352px,#f08669 360px,#f18362 368px,#f2805b 376px,#f37c54 384px,#f4794d 392px,#f57647 400px,#f77340 408px,#f86f39 416px,#f96c32 424px,#fa692c 432px,#fb6625 440px,#fc621e 448px,#fd5f17 456px,#fe5c10 464px,#fe5708 472px,#fd5200 480px,#fc4d00 488px,#fb4700 496px)"></i>
<i style="left:98px;top:460px;width:489px;background:linear-gradient(90deg,#0549cd 0px,#0e4fd0 8px,#1855d2 16px,#225bd5 24px,#2b61d7 32px,#3567d9 40px,#3e6ddc 48px,#4873de 56px,#5179e1 64px,#5b7fe3 72px,#6485e6 80px,#6e8be8 88px,#7791ea 96px,#8197ed 104px,#8a9def 112px,#94a3f1 120px,#9da9f4 128px,#a6aef6 136px,#b0b4f8 144px,#b9bafa 152px,#c2bffc 160px,#cbc5fe 168px,#d3c9fe 176px,#d7c9fb 184px,#d8c6f5 192px,#d9c3ee 200px,#dac0e7 208px,#dbbce0 216px,#dcb9da 224px,#ddb6d3 232px,#deb3cc 240px,#dfafc5 248px,#e1acbe 256px,#e2a9b8 264px,#e3a6b1 272px,#e4a2aa 280px,#e59fa3 288px,#e69c9d 296px,#e79996 304px,#e8958f 312px,#e99288 320px,#ea8f81 328px,#eb8c7b 336px,#ec8874 344px,#ed856d 352px,#ee8266 360px,#ef7e60 368px,#f07b59 376px,#f17852 384px,#f2754b 392px,#f37144 400px,#f46e3e 408px,#f56b37 416px,#f66830 424px,#f76429 432px,#f86123 440px,#f95e1c 448px,#fa5b15 456px,#fb570e 464px,#fc5407 472px,#fd5101 480px,#fe4d00 488px,#fd4700 496px)"></i>
<i style="left:99px;top:463px;width:488px;background:linear-gradient(90deg,#0647ce 0px,#0f4dd1 8px,#1954d3 16px,#225ad6 24px,#2c60d8 32px,#3566db 40px,#3f6cdd 48px,#4872df 56px,#5278e2 64px,#5b7ee4 72px,#6584e7 80px,#6e8ae9 88px,#7890eb 96px,#8196ee 104px,#8b9bf0 112px,#94a1f2 120px,#9da7f5 128px,#a7adf7 136px,#b0b3f9 144px,#b9b8fb 152px,#c2befd 160px,#cbc3fe 168px,#d2c6fe 176px,#d5c5f9 184px,#d6c2f3 192px,#d7beec 200px,#d8bbe5 208px,#d9b8de 216px,#dab5d7 224px,#dbb1d1 232px,#dcaeca 240px,#ddabc3 248px,#dea8bc 256px,#dfa4b6 264px,#e0a1af 272px,#e19ea8 280px,#e29ba1 288px,#e3979a 296px,#e49494 304px,#e5918d 312px,#e68e86 320px,#e78a7f 328px,#e98779 336px,#ea8472 344px,#eb816b 352px,#ec7d64 360px,#ed7a5d 368px,#ee7757 376px,#ef7350 384px,#f07049 392px,#f16d42 400px,#f26a3c 408px,#f36635 416px,#f4632e 424px,#f56027 432px,#f65d20 440px,#f7591a 448px,#f85613 456px,#f9530c 464px,#fa5005 472px,#fb4c00 480px,#fc4900 488px)"></i>
<i style="left:99px;top:466px;width:485px;background:linear-gradient(90deg,#0546cf 0px,#0f4cd2 8px,#1852d4 16px,#2258d6 24px,#2b5ed9 32px,#3564db 40px,#3e6ade 48px,#4870e0 56px,#5176e3 64px,#5b7ce5 72px,#6482e7 80px,#6e88ea 88px,#778eec 96px,#8194ee 104px,#8a99f1 112px,#939ff3 120px,#9da5f5 128px,#a6abf7 136px,#afb0f9 144px,#b8b6fb 152px,#c1bbfd 160px,#cac0fe 168px,#d1c4fe 176px,#d2c1f8 184px,#d3bef1 192px,#d4baea 200px,#d5b7e4 208px,#d7b4dd 216px,#d8b1d6 224px,#d9adcf 232px,#daaac9 240px,#dba7c2 248px,#dca4bb 256px,#dda0b4 264px,#de9dad 272px,#df9aa7 280px,#e097a0 288px,#e19399 296px,#e29092 304px,#e38d8c 312px,#e48985 320px,#e5867e 328px,#e68377 336px,#e78070 344px,#e87c6a 352px,#e97963 360px,#ea765c 368px,#eb7355 376px,#ec6f4f 384px,#ed6c48 392px,#ee6941 400px,#ef663a 408px,#f06233 416px,#f15f2d 424px,#f25c26 432px,#f3591f 440px,#f55518 448px,#f65212 456px,#f74f0b 464px,#f84c04 472px,#f94800 480px,#fa4500 488px)"></i>
<i style="left:100px;top:469px;width:477px;background:linear-gradient(90deg,#0644d0 0px,#0f4ad3 8px,#1950d5 16px,#2256d8 24px,#2c5cda 32px,#3563dc 40px,#3f69df 48px,#496fe1 56px,#5274e4 64px,#5c7ae6 72px,#6580e8 80px,#6e86eb 88px,#788ced 96px,#8192ef 104px,#8b98f2 112px,#949ef4 120px,#9da4f6 128px,#a6a9f8 136px,#b0affa 144px,#b9b4fc 152px,#c1bafe 160px,#c9befe 168px,#cfc0fd 176px,#d0bcf6 184px,#d1b9ef 192px,#d2b6e8 200px,#d3b3e1 208px,#d4afdb 216px,#d5acd4 224px,#d6a9cd 232px,#d7a6c6 240px,#d8a2c0 248px,#d99fb9 256px,#da9cb2 264px,#db99ab 272px,#dc95a4 280px,#dd929e 288px,#df8f97 296px,#e08c90 304px,#e18889 312px,#e28583 320px,#e3827c 328px,#e47e75 336px,#e57b6e 344px,#e67867 352px,#e77561 360px,#e8715a 368px,#e96e53 376px,#ea6b4c 384px,#eb6846 392px,#ec643f 400px,#ed6138 408px,#ee5e31 416px,#ef5b2b 424px,#f05724 432px,#f1541d 440px,#f25116 448px,#f34e0f 456px,#f44a09 464px,#f54702 472px,#f64400 480px)"></i>
<i style="left:101px;top:472px;width:469px;background:linear-gradient(90deg,#0743d1 0px,#1049d4 8px,#1a4fd6 16px,#2355d9 24px,#2d5bdb 32px,#3661de 40px,#4067e0 48px,#496de2 56px,#5373e5 64px,#5c79e7 72px,#667fe9 80px,#6f85ec 88px,#788bee 96px,#8291f0 104px,#8b97f3 112px,#949cf5 120px,#9ea2f7 128px,#a7a8f9 136px,#b0adfb 144px,#b9b3fd 152px,#c1b8fe 160px,#c9bbfe 168px,#cdbbfa 176px,#ceb8f4 184px,#cfb5ed 192px,#d0b1e6 200px,#d1aedf 208px,#d2abd9 216px,#d3a8d2 224px,#d4a4cb 232px,#d5a1c4 240px,#d69ebd 248px,#d79bb7 256px,#d897b0 264px,#d994a9 272px,#da91a2 280px,#db8e9c 288px,#dc8a95 296px,#dd878e 304px,#de8487 312px,#df8180 320px,#e07d7a 328px,#e17a73 336px,#e2776c 344px,#e37365 352px,#e4705f 360px,#e56d58 368px,#e76a51 376px,#e8664a 384px,#e96343 392px,#ea603d 400px,#eb5d36 408px,#ec592f 416px,#ed5628 424px,#ee5322 432px,#ef501b 440px,#f04c14 448px,#f1490d 456px,#f24606 464px,#f34300 472px)"></i>
<i style="left:102px;top:475px;width:462px;background:linear-gradient(90deg,#0742d2 0px,#1148d5 8px,#1a4ed7 16px,#2454da 24px,#2d5adc 32px,#3760df 40px,#4066e1 48px,#4a6ce3 56px,#5372e6 64px,#5d78e8 72px,#667eea 80px,#7084ed 88px,#798aef 96px,#828ff1 104px,#8c95f3 112px,#959bf6 120px,#9ea1f8 128px,#a7a6fa 136px,#b0acfc 144px,#b9b1fd 152px,#c1b5fe 160px,#c8b9fe 168px,#cab7f8 176px,#cbb3f1 184px,#ccb0eb 192px,#cdade4 200px,#ceaadd 208px,#cfa6d6 216px,#d1a3d0 224px,#d2a0c9 232px,#d39dc2 240px,#d499bb 248px,#d596b4 256px,#d693ae 264px,#d790a7 272px,#d88ca0 280px,#d98999 288px,#da8693 296px,#db838c 304px,#dc7f85 312px,#dd7c7e 320px,#de7978 328px,#df7671 336px,#e0726a 344px,#e16f63 352px,#e26c5c 360px,#e36956 368px,#e4654f 376px,#e56248 384px,#e65f41 392px,#e75b3b 400px,#e85834 408px,#e9552d 416px,#ea5226 424px,#eb4e1f 432px,#ec4b19 440px,#ee4812 448px,#ef450b 456px,#f04104 464px)"></i>
<i style="left:102px;top:478px;width:455px;background:linear-gradient(90deg,#0740d3 0px,#1046d6 8px,#1a4cd8 16px,#2352db 24px,#2d58dd 32px,#365edf 40px,#4064e2 48px,#496ae4 56px,#5370e6 64px,#5c76e9 72px,#657ceb 80px,#6f82ed 88px,#7888f0 96px,#828df2 104px,#8b93f4 112px,#9499f6 120px,#9d9ef8 128px,#a6a4fa 136px,#afa9fc 144px,#b8aefd 152px,#c0b3fe 160px,#c7b6fe 168px,#c8b3f7 176px,#c9aff0 184px,#caace9 192px,#cba9e3 200px,#cca6dc 208px,#cda2d5 216px,#ce9fce 224px,#cf9cc8 232px,#d099c1 240px,#d195ba 248px,#d292b3 256px,#d38fac 264px,#d48ca6 272px,#d5889f 280px,#d68598 288px,#d78291 296px,#d87e8b 304px,#d97b84 312px,#da787d 320px,#dc7576 328px,#dd716f 336px,#de6e69 344px,#df6b62 352px,#e0685b 360px,#e16454 368px,#e2614e 376px,#e35e47 384px,#e45b40 392px,#e55739 400px,#e65432 408px,#e7512c 416px,#e84e25 424px,#e94a1e 432px,#ea4717 440px,#eb4411 448px,#ec410a 456px)"></i>
<i style="left:103px;top:481px;width:447px;background:linear-gradient(90deg,#073fd4 0px,#1145d7 8px,#1a4bd9 16px,#2451dc 24px,#2d57de 32px,#375de0 40px,#4063e3 48px,#4a69e5 56px,#536fe7 64px,#5d75ea 72px,#667aec 80px,#6f80ee 88px,#7986f1 96px,#828cf3 104px,#8b92f5 112px,#9597f7 120px,#9e9df9 128px,#a7a2fb 136px,#b0a8fd 144px,#b8adfe 152px,#c0b0fe 160px,#c4b1fc 168px,#c6aef5 176px,#c7abee 184px,#c8a8e7 192px,#c9a4e0 200px,#caa1da 208px,#cb9ed3 216px,#cc9bcc 224px,#cd97c5 232px,#ce94bf 240px,#cf91b8 248px,#d08eb1 256px,#d18aaa 264px,#d287a3 272px,#d3849d 280px,#d48196 288px,#d57d8f 296px,#d67a88 304px,#d77782 312px,#d8747b 320px,#d97074 328px,#da6d6d 336px,#db6a66 344px,#dc6660 352px,#dd6359 360px,#de6052 368px,#df5d4b 376px,#e05945 384px,#e1563e 392px,#e25337 400px,#e45030 408px,#e54c29 416px,#e64923 424px,#e7461c 432px,#e84315 440px,#e93f0e 448px)"></i>
<i style="left:104px;top:484px;width:440px;background:linear-gradient(90deg,#083ed5 0px,#1144d8 8px,#1b4ada 16px,#2450dd 24px,#2e56df 32px,#375ce1 40px,#4162e4 48px,#4a67e6 56px,#546de8 64px,#5d73eb 72px,#6779ed 80px,#707fef 88px,#7985f1 96px,#828bf4 104px,#8c90f6 112px,#9596f8 120px,#9e9bfa 128px,#a7a1fc 136px,#b0a6fd 144px,#b8aafe 152px,#bfaefe 160px,#c2adf9 168px,#c3aaf3 176px,#c4a6ec 184px,#c5a3e5 192px,#c6a0de 200px,#c79dd8 208px,#c899d1 216px,#c996ca 224px,#ca93c3 232px,#cb90bc 240px,#cc8cb6 248px,#ce89af 256px,#cf86a8 264px,#d083a1 272px,#d17f9b 280px,#d27c94 288px,#d3798d 296px,#d47686 304px,#d5727f 312px,#d66f79 320px,#d76c72 328px,#d8696b 336px,#d96564 344px,#da625e 352px,#db5f57 360px,#dc5b50 368px,#dd5849 376px,#de5542 384px,#df523c 392px,#e04e35 400px,#e14b2e 408px,#e24827 416px,#e34521 424px,#e4411a 432px,#e53e13 440px)"></i>
<i style="left:105px;top:487px;width:432px;background:linear-gradient(90deg,#093cd7 0px,#1242d9 8px,#1c48db 16px,#254ede 24px,#2f54e0 32px,#385ae2 40px,#4160e5 48px,#4b66e7 56px,#546ce9 64px,#5e72ec 72px,#6778ee 80px,#707ef0 88px,#7a83f2 96px,#8389f4 104px,#8c8ff7 112px,#9594f9 120px,#9e9afa 128px,#a79ffc 136px,#b0a4fd 144px,#b7a8fe 152px,#bfabfe 160px,#c0a8f7 168px,#c1a5f0 176px,#c2a2ea 184px,#c39fe3 192px,#c49bdc 200px,#c598d5 208px,#c695cf 216px,#c792c8 224px,#c88ec1 232px,#c98bba 240px,#ca88b3 248px,#cb85ad 256px,#cc81a6 264px,#cd7e9f 272px,#ce7b98 280px,#cf7892 288px,#d0748b 296px,#d17184 304px,#d26e7d 312px,#d36b76 320px,#d46770 328px,#d66469 336px,#d76162 344px,#d85e5b 352px,#d95a55 360px,#da574e 368px,#db5447 376px,#dc5040 384px,#dd4d39 392px,#de4a33 400px,#df472c 408px,#e04325 416px,#e1401e 424px,#e23d18 432px)"></i>
<i style="left:105px;top:490px;width:426px;background:linear-gradient(90deg,#083ad7 0px,#1240da 8px,#1b46dc 16px,#254cde 24px,#2e52e1 32px,#3758e3 40px,#415ee5 48px,#4a64e8 56px,#546aea 64px,#5d70ec 72px,#6676ef 80px,#707bf1 88px,#7981f3 96px,#8287f5 104px,#8b8df7 112px,#9592f9 120px,#9d98fb 128px,#a69dfd 136px,#afa2fe 144px,#b6a5fe 152px,#bca8fd 160px,#bda4f6 168px,#bea1ef 176px,#bf9ee8 184px,#c09be2 192px,#c197db 200px,#c294d4 208px,#c491cd 216px,#c58ec6 224px,#c68ac0 232px,#c787b9 240px,#c884b2 248px,#c981ab 256px,#ca7da5 264px,#cb7a9e 272px,#cc7797 280px,#cd7490 288px,#ce7089 296px,#cf6d83 304px,#d06a7c 312px,#d16675 320px,#d2636e 328px,#d36068 336px,#d45d61 344px,#d5595a 352px,#d65653 360px,#d7534d 368px,#d85046 376px,#d94c3f 384px,#da4938 392px,#db4631 400px,#dc432b 408px,#dd3f24 416px,#de3c1d 424px,#df3916 432px)"></i>
<i style="left:106px;top:493px;width:418px;background:linear-gradient(90deg,#0939d8 0px,#123fdb 8px,#1c45dd 16px,#254bdf 24px,#2f51e2 32px,#3857e4 40px,#415de6 48px,#4b63e9 56px,#5469eb 64px,#5e6eed 72px,#6774ef 80px,#707af2 88px,#7980f4 96px,#8385f6 104px,#8c8bf8 112px,#9591fa 120px,#9e96fc 128px,#a69bfd 136px,#ae9ffe 144px,#b6a3fe 152px,#baa3fb 160px,#bba0f4 168px,#bc9ded 176px,#bd99e6 184px,#be96df 192px,#bf93d9 200px,#c090d2 208px,#c18ccb 216px,#c289c4 224px,#c386be 232px,#c483b7 240px,#c57fb0 248px,#c67ca9 256px,#c779a2 264px,#c8769c 272px,#c97295 280px,#ca6f8e 288px,#cc6c87 296px,#cd6981 304px,#ce657a 312px,#cf6273 320px,#d05f6c 328px,#d15c65 336px,#d2585f 344px,#d35558 352px,#d45251 360px,#d54e4a 368px,#d64b44 376px,#d7483d 384px,#d84536 392px,#d9412f 400px,#da3e28 408px,#db3b22 416px,#dc381b 424px)"></i>
<i style="left:107px;top:496px;width:410px;background:linear-gradient(90deg,#0938d9 0px,#133edc 8px,#1c44de 16px,#264ae0 24px,#2f50e3 32px,#3956e5 40px,#425ce7 48px,#4b61ea 56px,#5567ec 64px,#5e6dee 72px,#6773f0 80px,#7179f2 88px,#7a7ef5 96px,#8384f7 104px,#8c8af9 112px,#958ffa 120px,#9e94fc 128px,#a699fd 136px,#ae9dfe 144px,#b5a1fe 152px,#b89ff8 160px,#b99bf2 168px,#ba98eb 176px,#bb95e4 184px,#bc92dd 192px,#bd8ed6 200px,#be8bd0 208px,#bf88c9 216px,#c085c2 224px,#c181bb 232px,#c27eb5 240px,#c37bae 248px,#c478a7 256px,#c574a0 264px,#c6719a 272px,#c76e93 280px,#c86b8c 288px,#c96785 296px,#ca647e 304px,#cb6178 312px,#cc5e71 320px,#cd5a6a 328px,#ce5763 336px,#cf545d 344px,#d05156 352px,#d14d4f 360px,#d34a48 368px,#d44741 376px,#d5433b 384px,#d64034 392px,#d73d2d 400px,#d83a26 408px,#d93620 416px)"></i>
<i style="left:108px;top:499px;width:403px;background:linear-gradient(90deg,#0a37da 0px,#133ddd 8px,#1d43df 16px,#2649e1 24px,#304ee4 32px,#3954e6 40px,#425ae8 48px,#4c60eb 56px,#5566ed 64px,#5e6cef 72px,#6871f1 80px,#7177f3 88px,#7a7df5 96px,#8382f7 104px,#8c88f9 112px,#958dfb 120px,#9e92fd 128px,#a697fe 136px,#ae9bfe 144px,#b49dfd 152px,#b59af6 160px,#b697ef 168px,#b794e9 176px,#b890e2 184px,#b98ddb 192px,#ba8ad4 200px,#bb87ce 208px,#bd83c7 216px,#be80c0 224px,#bf7db9 232px,#c07ab2 240px,#c176ac 248px,#c273a5 256px,#c3709e 264px,#c46d97 272px,#c56991 280px,#c6668a 288px,#c76383 296px,#c8607c 304px,#c95c75 312px,#ca596f 320px,#cb5668 328px,#cc5361 336px,#cd4f5a 344px,#ce4c54 352px,#cf494d 360px,#d04646 368px,#d1423f 376px,#d23f38 384px,#d33c32 392px,#d4382b 400px,#d53524 408px)"></i>
<i style="left:109px;top:502px;width:395px;background:linear-gradient(90deg,#0b36db 0px,#143bde 8px,#1d41e0 16px,#2747e2 24px,#304de5 32px,#3a53e7 40px,#4359e9 48px,#4c5fec 56px,#5664ee 64px,#5f6af0 72px,#6870f2 80px,#7176f4 88px,#7b7bf6 96px,#8481f8 104px,#8d86fa 112px,#968cfc 120px,#9e91fd 128px,#a695fe 136px,#ad98fe 144px,#b299fb 152px,#b396f4 160px,#b492ed 168px,#b58fe6 176px,#b68ce0 184px,#b789d9 192px,#b885d2 200px,#b982cb 208px,#ba7fc5 216px,#bb7cbe 224px,#bc78b7 232px,#bd75b0 240px,#be72aa 248px,#bf6fa3 256px,#c06b9c 264px,#c16895 272px,#c2658e 280px,#c36288 288px,#c55e81 296px,#c65b7a 304px,#c75873 312px,#c8556d 320px,#c95166 328px,#ca4e5f 336px,#cb4b58 344px,#cc4851 352px,#cd444b 360px,#ce4144 368px,#cf3e3d 376px,#d03b36 384px,#d13730 392px,#d23429 400px)"></i>
<i style="left:110px;top:505px;width:387px;background:linear-gradient(90deg,#0b34dc 0px,#153adf 8px,#1e40e1 16px,#2746e3 24px,#314ce6 32px,#3a52e8 40px,#4358ea 48px,#4d5dec 56px,#5663ef 64px,#5f69f1 72px,#696ff3 80px,#7274f5 88px,#7b7af7 96px,#847ff9 104px,#8d85fb 112px,#968afc 120px,#9e8ffd 128px,#a693fe 136px,#ad96fe 144px,#b095f9 152px,#b191f2 160px,#b28eeb 168px,#b38be4 176px,#b487de 184px,#b584d7 192px,#b681d0 200px,#b77ec9 208px,#b87ac2 216px,#b977bc 224px,#ba74b5 232px,#bb71ae 240px,#bc6da7 248px,#bd6aa1 256px,#be679a 264px,#bf6493 272px,#c0608c 280px,#c15d85 288px,#c25a7f 296px,#c35778 304px,#c45371 312px,#c5506a 320px,#c64d64 328px,#c74a5d 336px,#c84656 344px,#c9434f 352px,#ca4048 360px,#cb3d42 368px,#cd393b 376px,#ce3634 384px,#cf332d 392px)"></i>
<i style="left:111px;top:508px;width:380px;background:linear-gradient(90deg,#0c33dd 0px,#1539e0 8px,#1f3fe2 16px,#2845e4 24px,#314ae7 32px,#3b50e9 40px,#4456eb 48px,#4d5ced 56px,#5762ef 64px,#6067f2 72px,#696df4 80px,#7273f6 88px,#7b78f8 96px,#847efa 104px,#8d83fb 112px,#9688fd 120px,#9e8cfe 128px,#a590fe 136px,#ac93fd 144px,#ad90f7 152px,#ae8df0 160px,#af8ae9 168px,#b086e2 176px,#b183db 184px,#b280d5 192px,#b37dce 200px,#b479c7 208px,#b576c0 216px,#b773ba 224px,#b86fb3 232px,#b96cac 240px,#ba69a5 248px,#bb669e 256px,#bc6298 264px,#bd5f91 272px,#be5c8a 280px,#bf5983 288px,#c0557d 296px,#c15276 304px,#c24f6f 312px,#c34c68 320px,#c44861 328px,#c5455b 336px,#c64254 344px,#c73f4d 352px,#c83b46 360px,#c93840 368px,#ca3539 376px,#cb3232 384px)"></i>
<i style="left:111px;top:511px;width:373px;background:linear-gradient(90deg,#0b31de 0px,#1437e0 8px,#1e3de3 16px,#2743e5 24px,#3148e7 32px,#3a4eea 40px,#4354ec 48px,#4d5aee 56px,#565ff0 64px,#5f65f2 72px,#686bf4 80px,#7170f6 88px,#7a76f8 96px,#837bfa 104px,#8c81fc 112px,#9585fd 120px,#9d8afe 128px,#a48dfe 136px,#aa8ffc 144px,#ab8cf5 152px,#ac89ee 160px,#ad85e8 168px,#ae82e1 176px,#af7fda 184px,#b07cd3 192px,#b178cd 200px,#b275c6 208px,#b372bf 216px,#b46fb8 224px,#b56bb1 232px,#b668ab 240px,#b765a4 248px,#b8629d 256px,#b95e96 264px,#ba5b90 272px,#bb5889 280px,#bc5582 288px,#bd517b 296px,#be4e74 304px,#bf4b6e 312px,#c04867 320px,#c14460 328px,#c34159 336px,#c43e53 344px,#c53b4c 352px,#c63745 360px,#c7343e 368px,#c83137 376px)"></i>
<i style="left:112px;top:514px;width:365px;background:linear-gradient(90deg,#0c30df 0px,#1535e1 8px,#1e3be4 16px,#2841e6 24px,#3147e8 32px,#3a4dea 40px,#4453ed 48px,#4d58ef 56px,#565ef1 64px,#5f64f3 72px,#6969f5 80px,#726ff7 88px,#7b74f9 96px,#847afb 104px,#8c7ffc 112px,#9584fd 120px,#9c88fe 128px,#a38bfe 136px,#a78bfa 144px,#a888f3 152px,#a984ec 160px,#aa81e5 168px,#ab7edf 176px,#ad7ad8 184px,#ae77d1 192px,#af74ca 200px,#b071c4 208px,#b16dbd 216px,#b26ab6 224px,#b367af 232px,#b464a8 240px,#b560a2 248px,#b65d9b 256px,#b75a94 264px,#b8578d 272px,#b95387 280px,#ba5080 288px,#bb4d79 296px,#bc4a72 304px,#bd466b 312px,#be4365 320px,#bf405e 328px,#c03d57 336px,#c13950 344px,#c2364a 352px,#c33343 360px,#c4303c 368px)"></i>
<i style="left:113px;top:517px;width:358px;background:linear-gradient(90deg,#0c2ee0 0px,#1634e2 8px,#1f3ae5 16px,#2840e7 24px,#3246e9 32px,#3b4beb 40px,#4451ed 48px,#4d57f0 56px,#575df2 64px,#6062f4 72px,#6968f6 80px,#726df8 88px,#7b73fa 96px,#8478fb 104px,#8c7dfd 112px,#9581fd 120px,#9c85fe 128px,#a389fd 136px,#a586f8 144px,#a683f1 152px,#a780ea 160px,#a87de3 168px,#a979dd 176px,#aa76d6 184px,#ab73cf 192px,#ac6fc8 200px,#ad6cc1 208px,#ae69bb 216px,#af66b4 224px,#b062ad 232px,#b15fa6 240px,#b25ca0 248px,#b35999 256px,#b55592 264px,#b6528b 272px,#b74f84 280px,#b84c7e 288px,#b94877 296px,#ba4570 304px,#bb4269 312px,#bc3f63 320px,#bd3b5c 328px,#be3855 336px,#bf354e 344px,#c03247 352px,#c12e41 360px)"></i>
<i style="left:114px;top:520px;width:350px;background:linear-gradient(90deg,#0d2de1 0px,#1633e3 8px,#1f39e6 16px,#293ee8 24px,#3244ea 32px,#3b4aec 40px,#4550ee 48px,#4e55f0 56px,#575bf3 64px,#6061f5 72px,#6966f7 80px,#726cf8 88px,#7b71fa 96px,#8476fc 104px,#8c7bfd 112px,#947ffe 120px,#9b83fd 128px,#a285fc 136px,#a382f5 144px,#a47fef 152px,#a57be8 160px,#a678e1 168px,#a775da 176px,#a872d4 184px,#a96ecd 192px,#aa6bc6 200px,#ab68bf 208px,#ac65b8 216px,#ad61b2 224px,#ae5eab 232px,#af5ba4 240px,#b0579d 248px,#b15497 256px,#b25190 264px,#b34e89 272px,#b44a82 280px,#b5477c 288px,#b64475 296px,#b7416e 304px,#b83d67 312px,#b93a60 320px,#ba375a 328px,#bc3453 336px,#bd304c 344px,#be2d45 352px)"></i>
<i style="left:115px;top:523px;width:343px;background:linear-gradient(90deg,#0d2ce2 0px,#1731e4 8px,#2037e6 16px,#293de9 24px,#3343eb 32px,#3c49ed 40px,#454eef 48px,#4e54f1 56px,#575af3 64px,#615ff5 72px,#6a65f7 80px,#736af9 88px,#7b6ffb 96px,#8474fc 104px,#8c79fd 112px,#947dfe 120px,#9b80fd 128px,#9f81fa 136px,#a07df3 144px,#a17aed 152px,#a277e6 160px,#a374df 168px,#a470d8 176px,#a56dd1 184px,#a76acb 192px,#a867c4 200px,#a963bd 208px,#aa60b6 216px,#ab5db0 224px,#ac5aa9 232px,#ad56a2 240px,#ae539b 248px,#af5094 256px,#b04c8e 264px,#b14987 272px,#b24680 280px,#b34379 288px,#b43f73 296px,#b53c6c 304px,#b63965 312px,#b7365e 320px,#b83257 328px,#b92f51 336px,#ba2c4a 344px)"></i>
<i style="left:116px;top:526px;width:335px;background:linear-gradient(90deg,#0e2ae3 0px,#1730e5 8px,#2036e7 16px,#2a3cea 24px,#3341ec 32px,#3c47ee 40px,#454df0 48px,#4f52f2 56px,#5858f4 64px,#615ef6 72px,#6a63f8 80px,#7369fa 88px,#7c6efb 96px,#8473fd 104px,#8c77fd 112px,#937bfd 120px,#9b7efd 128px,#9d7cf8 136px,#9e79f1 144px,#9f76ea 152px,#a072e4 160px,#a16fdd 168px,#a26cd6 176px,#a369cf 184px,#a465c9 192px,#a562c2 200px,#a65fbb 208px,#a75cb4 216px,#a858ad 224px,#a955a7 232px,#aa52a0 240px,#ab4f99 248px,#ac4b92 256px,#ae488c 264px,#af4585 272px,#b0417e 280px,#b13e77 288px,#b23b70 296px,#b3386a 304px,#b43463 312px,#b5315c 320px,#b62e55 328px,#b72b4f 336px)"></i>
<i style="left:117px;top:529px;width:327px;background:linear-gradient(90deg,#0e29e4 0px,#182fe6 8px,#2134e8 16px,#2a3aea 24px,#3340ed 32px,#3d46ef 40px,#464bf1 48px,#4f51f3 56px,#5857f5 64px,#615cf7 72px,#6a62f9 80px,#7367fa 88px,#7c6cfc 96px,#8471fd 104px,#8c75fd 112px,#9378fd 120px,#9a7bfd 128px,#9b78f6 136px,#9c74ef 144px,#9d71e8 152px,#9e6ee1 160px,#9f6bdb 168px,#a067d4 176px,#a164cd 184px,#a261c6 192px,#a35ec0 200px,#a45ab9 208px,#a557b2 216px,#a654ab 224px,#a751a4 232px,#a84d9e 240px,#a94a97 248px,#aa4790 256px,#ab4489 264px,#ac4083 272px,#ad3d7c 280px,#ae3a75 288px,#af376e 296px,#b03367 304px,#b13061 312px,#b22d5a 320px,#b32953 328px)"></i>
<i style="left:118px;top:532px;width:320px;background:linear-gradient(90deg,#0f27e5 0px,#182de7 8px,#2133e9 16px,#2b39eb 24px,#343fed 32px,#3d44f0 40px,#464af2 48px,#4f50f4 56px,#5955f6 64px,#625bf8 72px,#6b60f9 80px,#7365fb 88px,#7c6afc 96px,#846ffd 104px,#8b72fd 112px,#9376fd 120px,#9776fa 128px,#9873f4 136px,#9970ed 144px,#9a6de6 152px,#9b69df 160px,#9c66d9 168px,#9d63d2 176px,#9e60cb 184px,#a05cc4 192px,#a159bd 200px,#a256b7 208px,#a353b0 216px,#a44fa9 224px,#a54ca2 232px,#a6499c 240px,#a74695 248px,#a8428e 256px,#a93f87 264px,#aa3c80 272px,#ab397a 280px,#ac3573 288px,#ad326c 296px,#ae2f65 304px,#af2c5f 312px,#b02858 320px)"></i>
<i style="left:119px;top:535px;width:312px;background:linear-gradient(90deg,#0f26e6 0px,#192ce8 8px,#2232ea 16px,#2b37ec 24px,#343dee 32px,#3d43f0 40px,#4748f2 48px,#504ef4 56px,#5954f6 64px,#6259f8 72px,#6b5efa 80px,#7363fb 88px,#7c68fd 96px,#846cfd 104px,#8b70fd 112px,#9273fd 120px,#9572f8 128px,#966ff1 136px,#976beb 144px,#9868e4 152px,#9965dd 160px,#9a62d6 168px,#9b5ed0 176px,#9c5bc9 184px,#9d58c2 192px,#9e55bb 200px,#9f51b4 208px,#a04eae 216px,#a14ba7 224px,#a248a0 232px,#a34499 240px,#a44193 248px,#a53e8c 256px,#a63b85 264px,#a8377e 272px,#a93477 280px,#aa3171 288px,#ab2e6a 296px,#ac2a63 304px,#ad275c 312px)"></i>
<i style="left:120px;top:538px;width:304px;background:linear-gradient(90deg,#1025e7 0px,#192ae9 8px,#2230eb 16px,#2b36ed 24px,#353cef 32px,#3e41f1 40px,#4747f3 48px,#504cf5 56px,#5952f7 64px,#6257f9 72px,#6b5cfa 80px,#7361fc 88px,#7c66fd 96px,#836afd 104px,#8b6efd 112px,#9171fd 120px,#936df6 128px,#946aef 136px,#9567e9 144px,#9664e2 152px,#9760db 160px,#985dd4 168px,#995acd 176px,#9a57c7 184px,#9b53c0 192px,#9c50b9 200px,#9d4db2 208px,#9e4aac 216px,#9f46a5 224px,#a0439e 232px,#a14097 240px,#a23d90 248px,#a3398a 256px,#a43683 264px,#a5337c 272px,#a63075 280px,#a72c6f 288px,#a82968 296px,#a92661 304px)"></i>
<i style="left:121px;top:541px;width:297px;background:linear-gradient(90deg,#1023e7 0px,#1929ea 8px,#232fec 16px,#2c34ee 24px,#353af0 32px,#3e40f2 40px,#4745f4 48px,#504bf6 56px,#5950f8 64px,#6256f9 72px,#6b5bfb 80px,#7360fc 88px,#7c64fd 96px,#8368fd 104px,#8a6bfd 112px,#8f6cfb 120px,#9069f4 128px,#9166ed 136px,#9262e6 144px,#935fe0 152px,#945cd9 160px,#9559d2 168px,#9655cb 176px,#9752c4 184px,#984fbe 192px,#9a4cb7 200px,#9b48b0 208px,#9c45a9 216px,#9d42a3 224px,#9e3f9c 232px,#9f3b95 240px,#a0388e 248px,#a13587 256px,#a23281 264px,#a32e7a 272px,#a42b73 280px,#a5286c 288px,#a62566 296px,#a7215f 304px)"></i>
<i style="left:123px;top:544px;width:288px;background:linear-gradient(90deg,#1223e9 0px,#1b28eb 8px,#242eed 16px,#2d34ef 24px,#3739f1 32px,#403ff3 40px,#4945f5 48px,#524af7 56px,#5b4ff9 64px,#6455fa 72px,#6c59fc 80px,#745efd 88px,#7c62fd 96px,#8366fd 104px,#8b69fd 112px,#8d67f8 120px,#8e64f1 128px,#8f61ea 136px,#905ee3 144px,#915add 152px,#9257d6 160px,#9354cf 168px,#9451c8 176px,#954dc1 184px,#964abb 192px,#9747b4 200px,#9844ad 208px,#9940a6 216px,#9a3da0 224px,#9b3a99 232px,#9c3792 240px,#9e338b 248px,#9f3084 256px,#a02d7e 264px,#a12977 272px,#a22670 280px,#a32369 288px)"></i>
<i style="left:124px;top:547px;width:281px;background:linear-gradient(90deg,#1221e9 0px,#1b27ec 8px,#252dee 16px,#2e32f0 24px,#3738f2 32px,#403df4 40px,#4943f6 48px,#5248f8 56px,#5b4ef9 64px,#6453fb 72px,#6c58fc 80px,#745cfd 88px,#7c60fd 96px,#8363fd 104px,#8a66fc 112px,#8b63f6 120px,#8c60ef 128px,#8d5ce8 136px,#8e59e1 144px,#8f56da 152px,#9053d4 160px,#914fcd 168px,#924cc6 176px,#9349bf 184px,#9446b9 192px,#9542b2 200px,#963fab 208px,#973ca4 216px,#98399d 224px,#993597 232px,#9a3290 240px,#9b2f89 248px,#9c2c82 256px,#9d287c 264px,#9e2575 272px,#9f226e 280px,#a01f67 288px)"></i>
<i style="left:125px;top:550px;width:273px;background:linear-gradient(90deg,#1320ea 0px,#1c25ec 8px,#252bee 16px,#2e31f1 24px,#3736f3 32px,#403cf5 40px,#4a41f6 48px,#5247f8 56px,#5b4cfa 64px,#6451fb 72px,#6c56fc 80px,#745afd 88px,#7b5efd 96px,#8361fd 104px,#8762fa 112px,#885ef3 120px,#895bed 128px,#8a58e6 136px,#8b55df 144px,#8c51d8 152px,#8d4ed1 160px,#8e4bcb 168px,#9048c4 176px,#9144bd 184px,#9241b6 192px,#933eb0 200px,#943ba9 208px,#9537a2 216px,#96349b 224px,#973194 232px,#982e8e 240px,#992a87 248px,#9a2780 256px,#9b2479 264px,#9c2173 272px,#9d1d6c 280px)"></i>
<i style="left:126px;top:553px;width:265px;background:linear-gradient(90deg,#131eeb 0px,#1c24ed 8px,#252aef 16px,#2f2ff1 24px,#3835f3 32px,#413af5 40px,#4a40f7 48px,#5345f9 56px,#5b4afa 64px,#644ffc 72px,#6c54fd 80px,#7458fd 88px,#7b5bfd 96px,#825ffd 104px,#855df8 112px,#865af1 120px,#8757ea 128px,#8853e4 136px,#8950dd 144px,#8a4dd6 152px,#8b4acf 160px,#8c46c9 168px,#8d43c2 176px,#8e40bb 184px,#8f3db4 192px,#9039ad 200px,#9136a7 208px,#9233a0 216px,#933099 224px,#942c92 232px,#95298c 240px,#962685 248px,#98237e 256px,#991f77 264px,#9a1c70 272px)"></i>
<i style="left:127px;top:556px;width:258px;background:linear-gradient(90deg,#131dec 0px,#1d22ee 8px,#2628f0 16px,#2f2ef2 24px,#3833f4 32px,#4139f6 40px,#4a3ef8 48px,#5343f9 56px,#5b48fb 64px,#644dfc 72px,#6c52fd 80px,#7355fd 88px,#7b59fd 96px,#815cfc 104px,#8359f6 112px,#8455ef 120px,#8552e8 128px,#864fe1 136px,#874cdb 144px,#8848d4 152px,#8945cd 160px,#8a42c6 168px,#8b3fc0 176px,#8c3bb9 184px,#8d38b2 192px,#8e35ab 200px,#8f32a4 208px,#902e9e 216px,#912b97 224px,#922890 232px,#932589 240px,#942183 248px,#951e7c 256px,#961b75 264px)"></i>
<i style="left:128px;top:559px;width:250px;background:linear-gradient(90deg,#141bed 0px,#1d21ef 8px,#2627f1 16px,#2f2cf3 24px,#3832f5 32px,#4137f7 40px,#4a3cf8 48px,#5342fa 56px,#5c47fb 64px,#644bfc 72px,#6c4ffd 80px,#7353fd 88px,#7a56fd 96px,#7f58fa 104px,#8054f4 112px,#8151ed 120px,#824ee6 128px,#834bdf 136px,#8447d9 144px,#8544d2 152px,#8641cb 160px,#873dc4 168px,#883abd 176px,#8a37b7 184px,#8b34b0 192px,#8c30a9 200px,#8d2da2 208px,#8e2a9c 216px,#8f2795 224px,#90238e 232px,#912087 240px,#921d80 248px,#931a7a 256px)"></i>
<i style="left:129px;top:562px;width:242px;background:linear-gradient(90deg,#141aee 0px,#1d1ff0 8px,#2725f2 16px,#302bf4 24px,#3930f5 32px,#4235f7 40px,#4a3bf9 48px,#5340fa 56px,#5c45fc 64px,#6449fd 72px,#6b4dfd 80px,#7351fd 88px,#7a54fd 96px,#7d53f8 104px,#7e50f1 112px,#7f4deb 120px,#8049e4 128px,#8146dd 136px,#8243d6 144px,#8340d0 152px,#843cc9 160px,#8539c2 168px,#8636bb 176px,#8732b4 184px,#882fae 192px,#892ca7 200px,#8a29a0 208px,#8b2599 216px,#8c2293 224px,#8d1f8c 232px,#8e1c85 240px,#8f187e 248px)"></i>
<i style="left:131px;top:565px;width:234px;background:linear-gradient(90deg,#1619ef 0px,#1f1ff1 8px,#2824f3 16px,#312af5 24px,#3a2ff6 32px,#4334f8 40px,#4c3afa 48px,#543ffb 56px,#5d43fc 64px,#6448fd 72px,#6c4bfd 80px,#734ffd 88px,#7a51fc 96px,#7b4ef5 104px,#7c4bee 112px,#7d48e8 120px,#7e44e1 128px,#7f41da 136px,#803ed3 144px,#813bcd 152px,#8237c6 160px,#8334bf 168px,#8431b8 176px,#852eb1 184px,#862aab 192px,#8727a4 200px,#88249d 208px,#892196 216px,#8a1d90 224px,#8b1a89 232px,#8c1782 240px)"></i>
<i style="left:132px;top:568px;width:226px;background:linear-gradient(90deg,#1618ef 0px,#1f1df1 8px,#2823f3 16px,#3128f5 24px,#3a2ef7 32px,#4333f9 40px,#4c38fa 48px,#543dfb 56px,#5c41fc 64px,#6445fd 72px,#6b49fd 80px,#734cfd 88px,#774dfa 96px,#784af3 104px,#7946ec 112px,#7a43e6 120px,#7b40df 128px,#7c3dd8 136px,#7d39d1 144px,#7e36ca 152px,#8033c4 160px,#8130bd 168px,#822cb6 176px,#8329af 184px,#8426a9 192px,#8523a2 200px,#861f9b 208px,#871c94 216px,#88198d 224px,#891687 232px)"></i>
<i style="left:133px;top:571px;width:219px;background:linear-gradient(90deg,#1716f0 0px,#201cf2 8px,#2921f4 16px,#3227f6 24px,#3b2cf8 32px,#4331f9 40px,#4c36fb 48px,#543bfc 56px,#5c3ffd 64px,#6443fd 72px,#6b46fd 80px,#724afd 88px,#7548f8 96px,#7645f1 104px,#7742ea 112px,#783fe3 120px,#793bdd 128px,#7a38d6 136px,#7b35cf 144px,#7c32c8 152px,#7d2ec1 160px,#7e2bbb 168px,#7f28b4 176px,#8025ad 184px,#8121a6 192px,#821ea0 200px,#831b99 208px,#841892 216px,#85148b 224px)"></i>
<i style="left:134px;top:574px;width:211px;background:linear-gradient(90deg,#1715f1 0px,#201af3 8px,#2920f5 16px,#3225f7 24px,#3b2af8 32px,#432ffa 40px,#4c34fb 48px,#5439fc 56px,#5c3dfd 64px,#6341fd 72px,#6b44fd 80px,#7147fc 88px,#7344f6 96px,#7441ef 104px,#753de8 112px,#763ae1 120px,#7737da 128px,#7834d4 136px,#7930cd 144px,#7a2dc6 152px,#7b2abf 160px,#7c27b9 168px,#7d23b2 176px,#7e20ab 184px,#7f1da4 192px,#801a9d 200px,#811697 208px,#821390 216px)"></i>
<i style="left:136px;top:577px;width:202px;background:linear-gradient(90deg,#1814f2 0px,#2119f4 8px,#2a1ff6 16px,#3324f7 24px,#3c29f9 32px,#452efa 40px,#4d33fc 48px,#5537fc 56px,#5d3bfd 64px,#643ffd 72px,#6b42fd 80px,#6f42f9 88px,#703ff3 96px,#713cec 104px,#7239e5 112px,#7335de 120px,#7432d7 128px,#762fd1 136px,#772cca 144px,#7828c3 152px,#7925bc 160px,#7a22b6 168px,#7b1faf 176px,#7c1ba8 184px,#7d18a1 192px,#7e159a 200px,#7f1294 208px)"></i>
<i style="left:137px;top:580px;width:195px;background:linear-gradient(90deg,#1912f3 0px,#2218f5 8px,#2b1df6 16px,#3422f8 24px,#3c27fa 32px,#452cfb 40px,#4d31fc 48px,#5535fd 56px,#5c39fd 64px,#633cfd 72px,#6b40fc 80px,#6d3ef7 88px,#6e3bf0 96px,#6f37ea 104px,#7034e3 112px,#7131dc 120px,#722ed5 128px,#732ace 136px,#7427c8 144px,#7524c1 152px,#7621ba 160px,#771db3 168px,#781aad 176px,#7917a6 184px,#7a149f 192px,#7b1098 200px)"></i>
<i style="left:138px;top:583px;width:187px;background:linear-gradient(90deg,#1911f3 0px,#2216f5 8px,#2b1bf7 16px,#3420f9 24px,#3c26fa 32px,#452afb 40px,#4d2ffc 48px,#5533fd 56px,#5c36fd 64px,#633afc 72px,#6a3dfc 80px,#6b39f5 88px,#6c36ee 96px,#6d33e7 104px,#6e30e1 112px,#6f2cda 120px,#7029d3 128px,#7126cc 136px,#7223c6 144px,#731fbf 152px,#741cb8 160px,#7519b1 168px,#7616aa 176px,#7712a4 184px,#780f9d 192px)"></i>
<i style="left:140px;top:586px;width:178px;background:linear-gradient(90deg,#1a10f4 0px,#2315f6 8px,#2c1af8 16px,#351ff9 24px,#3d24fb 32px,#4629fc 40px,#4e2dfc 48px,#5531fd 56px,#5c35fd 64px,#6338fc 72px,#6738f9 80px,#6835f2 88px,#6931eb 96px,#6a2ee4 104px,#6c2bde 112px,#6d28d7 120px,#6e24d0 128px,#6f21c9 136px,#701ec3 144px,#711abc 152px,#7217b5 160px,#7314ae 168px,#7411a7 176px,#750da1 184px)"></i>
<i style="left:141px;top:589px;width:171px;background:linear-gradient(90deg,#1b0ef5 0px,#2413f7 8px,#2c19f8 16px,#351efa 24px,#3d22fb 32px,#4627fc 40px,#4d2bfd 48px,#552ffd 56px,#5c32fc 64px,#6335fc 72px,#6533f7 80px,#6630f0 88px,#672de9 96px,#682ae2 104px,#6926db 112px,#6a23d5 120px,#6b20ce 128px,#6c1dc7 136px,#6d19c0 144px,#6e16ba 152px,#6f13b3 160px,#7010ac 168px,#710ca5 176px)"></i>
<i style="left:142px;top:592px;width:163px;background:linear-gradient(90deg,#1b0cf6 0px,#2412f7 8px,#2d17f9 16px,#351cfa 24px,#3d20fb 32px,#4525fc 40px,#4d29fd 48px,#542cfd 56px,#5b30fc 64px,#6232fb 72px,#632ff4 80px,#642cee 88px,#6528e7 96px,#6625e0 104px,#6722d9 112px,#681fd3 120px,#691bcc 128px,#6a18c5 136px,#6b15be 144px,#6c12b7 152px,#6d0eb1 160px,#6e0baa 168px)"></i>
<i style="left:144px;top:595px;width:154px;background:linear-gradient(90deg,#1c0bf7 0px,#2511f8 8px,#2e16fa 16px,#361afb 24px,#3e1ffc 32px,#4623fc 40px,#4e27fd 48px,#552afc 56px,#5c2efc 64px,#5f2df8 72px,#602af1 80px,#6227eb 88px,#6323e4 96px,#6420dd 104px,#651dd6 112px,#661ad0 120px,#6716c9 128px,#6813c2 136px,#6910bb 144px,#6a0db4 152px,#6b09ae 160px)"></i>
<i style="left:146px;top:598px;width:146px;background:linear-gradient(90deg,#1e0af7 0px,#260ff9 8px,#2f14fa 16px,#3719fb 24px,#3f1efc 32px,#4721fd 40px,#4e25fc 48px,#5528fc 56px,#5c2bfc 64px,#5d28f5 72px,#5e25ee 80px,#5f22e8 88px,#601fe1 96px,#611bda 104px,#6218d3 112px,#6315cd 120px,#6412c6 128px,#660ebf 136px,#670bb8 144px,#6808b1 152px)"></i>
<i style="left:147px;top:601px;width:138px;background:linear-gradient(90deg,#1e09f8 0px,#260ef9 8px,#2f13fb 16px,#3717fc 24px,#3f1bfc 32px,#471ffd 40px,#4e23fc 48px,#5526fc 56px,#5a27fa 64px,#5b24f3 72px,#5c21ec 80px,#5d1de5 88px,#5e1adf 96px,#5f17d8 104px,#6014d1 112px,#6110ca 120px,#620dc4 128px,#630abd 136px,#6407b6 144px)"></i>
<i style="left:149px;top:604px;width:130px;background:linear-gradient(90deg,#1f07f9 0px,#280cfa 8px,#3011fb 16px,#3816fc 24px,#401afc 32px,#471dfc 40px,#4e21fc 48px,#5524fc 56px,#5822f7 64px,#591ff0 72px,#5a1ce9 80px,#5b18e2 88px,#5c15dc 96px,#5d12d5 104px,#5e0fce 112px,#5f0bc7 120px,#6008c1 128px,#6105ba 136px)"></i>
<i style="left:151px;top:607px;width:121px;background:linear-gradient(90deg,#2006f9 0px,#290bfb 8px,#3110fc 16px,#3914fc 24px,#4018fc 32px,#471bfc 40px,#4f1ffc 48px,#5421fb 56px,#551df4 64px,#561aed 72px,#5817e6 80px,#5914df 88px,#5a10d9 96px,#5b0dd2 104px,#5c0acb 112px,#5d07c4 120px,#5e03be 128px)"></i>
<i style="left:153px;top:610px;width:112px;background:linear-gradient(90deg,#2105fa 0px,#2a0afb 8px,#320efc 16px,#3912fc 24px,#4116fc 32px,#4819fc 40px,#4f1dfc 48px,#521cf8 56px,#5318f1 64px,#5415ea 72px,#5512e3 80px,#560fdc 88px,#570bd6 96px,#5808cf 104px,#5905c8 112px)"></i>
<i style="left:155px;top:613px;width:104px;background:linear-gradient(90deg,#2204fa 0px,#2b08fb 8px,#330dfc 16px,#3a10fc 24px,#4114fc 32px,#4817fc 40px,#4f1afb 48px,#5017f5 56px,#5114ee 64px,#5210e7 72px,#530de0 80px,#540ad9 88px,#5507d3 96px,#5603cc 104px)"></i>
<i style="left:157px;top:616px;width:95px;background:linear-gradient(90deg,#2302fb 0px,#2c07fc 8px,#330bfc 16px,#3b0ffc 24px,#4212fc 32px,#4915fc 40px,#4d15f8 48px,#4e12f2 56px,#4f0feb 64px,#500be4 72px,#5108dd 80px,#5205d6 88px,#5302d0 96px)"></i>
<i style="left:159px;top:619px;width:86px;background:linear-gradient(90deg,#2401fb 0px,#2c05fc 8px,#3409fc 16px,#3b0dfc 24px,#4210fc 32px,#4913fc 40px,#4b10f5 48px,#4c0def 56px,#4d0ae8 64px,#4e07e1 72px,#4f03da 80px,#5000d3 88px)"></i>
<i style="left:162px;top:622px;width:77px;background:linear-gradient(90deg,#2600fc 0px,#2e04fc 8px,#3508fc 16px,#3c0bfc 24px,#430efc 32px,#470ef8 40px,#480bf1 48px,#4908eb 56px,#4b05e4 64px,#4c01dd 72px,#4d00d6 80px)"></i>
<i style="left:165px;top:625px;width:67px;background:linear-gradient(90deg,#2800fc 0px,#2f03fc 8px,#3706fc 16px,#3e09fc 24px,#440cfb 32px,#4509f4 40px,#4606ee 48px,#4703e7 56px,#4800e0 64px,#4900d9 72px)"></i>
<i style="left:168px;top:628px;width:58px;background:linear-gradient(90deg,#2a00fc 0px,#3101fc 8px,#3804fc 16px,#3f08fc 24px,#4207f7 32px,#4304f1 40px,#4400ea 48px,#4500e3 56px,#4600dc 64px)"></i>
<i style="left:172px;top:631px;width:47px;background:linear-gradient(90deg,#2c00fc 0px,#3300fc 8px,#3a03fc 16px,#3f05f9 24px,#4001f3 32px,#4100ec 40px,#4200e5 48px)"></i>
<i style="left:175px;top:634px;width:37px;background:linear-gradient(90deg,#2d00fc 0px,#3400fc 8px,#3b02fb 16px,#3d00f6 24px,#3e00ef 32px,#3f00e8 40px)"></i>
<i style="left:179px;top:637px;width:27px;background:linear-gradient(90deg,#2f00fc 0px,#3600fc 8px,#3a00f8 16px,#3b00f1 24px,#3c00ea 32px)"></i>
</div></div>
<div id="plotl"></div><div id="plott"></div><div id="plotb"></div>
<svg width="733" height="687" viewBox="0 0 733 687">
<defs><clipPath id="pc"><rect x="74" y="35" width="621" height="604"/></clipPath></defs>
<g fill="#999900" shape-rendering="crispEdges">
<rect x="142" y="35" width="1" height="604"/>
<rect x="211" y="35" width="1" height="604"/>
<rect x="280" y="35" width="1" height="604"/>
<rect x="349" y="35" width="1" height="604"/>
<rect x="417" y="35" width="1" height="604"/>
<rect x="486" y="35" width="1" height="604"/>
<rect x="555" y="35" width="1" height="604"/>
<rect x="624" y="35" width="1" height="604"/>
<rect x="74" y="605" width="620" height="1"/>
<rect x="74" y="572" width="620" height="1"/>
<rect x="74" y="538" width="620" height="1"/>
<rect x="74" y="505" width="620" height="1"/>
<rect x="74" y="471" width="620" height="1"/>
<rect x="74" y="438" width="620" height="1"/>
<rect x="74" y="404" width="620" height="1"/>
<rect x="74" y="371" width="620" height="1"/>
<rect x="74" y="337" width="620" height="1"/>
<rect x="74" y="303" width="620" height="1"/>
<rect x="74" y="270" width="620" height="1"/>
<rect x="74" y="236" width="620" height="1"/>
<rect x="74" y="203" width="620" height="1"/>
<rect x="74" y="169" width="620" height="1"/>
<rect x="74" y="136" width="620" height="1"/>
<rect x="74" y="102" width="620" height="1"/>
<rect x="74" y="69" width="620" height="1"/>
</g>
<g fill="#000" shape-rendering="crispEdges">
<rect x="66" y="639" width="5" height="1"/>
<rect x="73" y="641" width="1" height="5"/>
<rect x="66" y="572" width="5" height="1"/>
<rect x="142" y="641" width="1" height="5"/>
<rect x="66" y="505" width="5" height="1"/>
<rect x="211" y="641" width="1" height="5"/>
<rect x="66" y="438" width="5" height="1"/>
<rect x="280" y="641" width="1" height="5"/>
<rect x="66" y="371" width="5" height="1"/>
<rect x="349" y="641" width="1" height="5"/>
<rect x="66" y="303" width="5" height="1"/>
<rect x="417" y="641" width="1" height="5"/>
<rect x="66" y="236" width="5" height="1"/>
<rect x="486" y="641" width="1" height="5"/>
<rect x="66" y="169" width="5" height="1"/>
<rect x="555" y="641" width="1" height="5"/>
<rect x="66" y="102" width="5" height="1"/>
<rect x="624" y="641" width="1" height="5"/>
<rect x="66" y="35" width="5" height="1"/>
<rect x="693" y="641" width="1" height="5"/>
</g>
<g clip-path="url(#pc)">
<g font-family="Liberation Sans" font-size="10.5" fill="#808080">
<path d="M77 277h3v1h-3zM78 276h1v3h-1z" fill="#7c7c7c"/>
<text x="83.6" y="282.7">500nm</text>
<path d="M81 135h3v1h-3zM82 134h1v3h-1z" fill="#7c7c7c"/>
<text x="87.6" y="140.5">510nm</text>
<path d="M123 79h3v1h-3zM124 78h1v3h-1z" fill="#7c7c7c"/>
<text x="129.2" y="84.4">520nm</text>
<path d="M178 98h3v1h-3zM179 97h1v3h-1z" fill="#7c7c7c"/>
<text x="184.6" y="103.2">530nm</text>
<path d="M230 132h3v1h-3zM231 131h1v3h-1z" fill="#7c7c7c"/>
<text x="236.2" y="137.8">540nm</text>
<path d="M279 174h3v1h-3zM280 173h1v3h-1z" fill="#7c7c7c"/>
<text x="285.8" y="179.4">550nm</text>
<path d="M329 219h3v1h-3zM330 218h1v3h-1z" fill="#7c7c7c"/>
<text x="335.0" y="224.9">560nm</text>
<path d="M377 266h3v1h-3zM378 265h1v3h-1z" fill="#7c7c7c"/>
<text x="383.9" y="271.7">570nm</text>
<path d="M425 312h3v1h-3zM426 311h1v3h-1z" fill="#7c7c7c"/>
<text x="431.0" y="317.4">580nm</text>
<path d="M468 354h3v1h-3zM469 353h1v3h-1z" fill="#7c7c7c"/>
<text x="474.2" y="359.3">590nm</text>
<path d="M503 389h3v1h-3zM504 388h1v3h-1z" fill="#7c7c7c"/>
<text x="510.0" y="394.0">600nm</text>
<path d="M530 414h3v1h-3zM531 413h1v3h-1z" fill="#7c7c7c"/>
<text x="536.6" y="419.8">610nm</text>
<path d="M548 432h3v1h-3zM549 431h1v3h-1z" fill="#7c7c7c"/>
<text x="554.4" y="437.1">620nm</text>
<path d="M567 450h3v1h-3zM568 449h1v3h-1z" fill="#7c7c7c"/>
<text x="573.3" y="455.5">640nm</text>
<path d="M578 460h3v1h-3zM579 459h1v3h-1z" fill="#7c7c7c"/>
<text x="584.1" y="466.0">780nm</text>
<path d="M191 635h3v1h-3zM192 634h1v3h-1z" fill="#7c7c7c"/>
<text x="184.9" y="640.7" text-anchor="end">380nm</text>
<path d="M179 627h3v1h-3zM180 626h1v3h-1z" fill="#7c7c7c"/>
<text x="172.9" y="632.1" text-anchor="end">450nm</text>
<path d="M171 619h3v1h-3zM172 618h1v3h-1z" fill="#7c7c7c"/>
<text x="164.2" y="624.1" text-anchor="end">460nm</text>
<path d="M157 600h3v1h-3zM158 599h1v3h-1z" fill="#7c7c7c"/>
<text x="150.5" y="605.2" text-anchor="end">470nm</text>
<path d="M134 549h3v1h-3zM135 548h1v3h-1z" fill="#7c7c7c"/>
<text x="127.9" y="554.9" text-anchor="end">480nm</text>
<path d="M103 441h3v1h-3zM104 440h1v3h-1z" fill="#7c7c7c"/>
<text x="96.3" y="446.0" text-anchor="end">490nm</text>
<text x="309" y="420">CIE White Point</text>
<path d="M302 415h3v1h-3zM303 414h1v3h-1z"/>
</g>
<polyline points="243.3,474.8 244.0,473.8 244.9,472.5 246.1,470.8 248.0,468.4 250.8,464.7 255.7,458.3 266.3,445.5 270.7,440.6 271.9,439.3 273.2,437.8 274.6,436.3 276.1,434.7 277.8,433.0 279.5,431.2 281.4,429.2 283.4,427.2 285.7,425.0 288.1,422.7 290.7,420.2 293.6,417.5 296.7,414.7 300.2,411.7 304.0,408.5 308.1,405.1 312.8,401.4 317.9,397.6 323.7,393.5 330.1,389.3 337.2,384.9 345.2,380.4 354.2,375.8 364.3,371.4 375.7,367.3 388.4,363.7 402.7,361.2 418.5,360.3 435.8,361.6 443.5,363.0 446.9,363.8 450.4,364.8 454.0,365.8 457.6,367.0 461.2,368.3 464.9,369.8 468.7,371.4 472.4,373.1 476.3,375.0 480.1,377.1 484.0,379.3 488.0,381.7 492.0,384.2 496.0,386.9 500.0,389.8 504.2,392.8 508.3,396.0 512.5,399.3 516.7,402.8 521.0,406.4 525.3,410.1 529.6,413.9 533.9,417.9 538.3,421.9 542.7,425.9 547.0,430.0 551.3,434.1 555.5,438.1 559.6,442.1" fill="none" stroke="#7a7a7a" stroke-width="1"/>
<g fill="none" stroke="#000" stroke-width="1">
<polygon points="280.5,409.5 376.5,349.5 417.5,344.5 417.5,383.5 376.5,383.5 280.5,454.5"/>
<line x1="376.5" y1="349.5" x2="376.5" y2="383.5"/>
</g>
<g fill="#000">
<rect x="279" y="408" width="3" height="3"/><rect x="375" y="348" width="3" height="3"/><rect x="416" y="343" width="3" height="3"/>
<rect x="416" y="382" width="3" height="3"/><rect x="375" y="382" width="3" height="3"/><rect x="279" y="453" width="3" height="3"/>
</g>
<g fill="#ff0000" shape-rendering="crispEdges">
<rect x="74" y="374" width="621" height="1"/>
<rect x="364" y="35" width="1" height="604"/>
</g>
<circle cx="364.5" cy="374.5" r="2.6" fill="#ff0000"/>
</g>

</svg>
<div class="yl" style="top:632px">0.0000</div>
<div class="xl" style="left:42px">0.0000</div>
<div class="yl" style="top:565px">0.1000</div>
<div class="xl" style="left:111px">0.1000</div>
<div class="yl" style="top:498px">0.2000</div>
<div class="xl" style="left:180px">0.2000</div>
<div class="yl" style="top:431px">0.3000</div>
<div class="xl" style="left:249px">0.3000</div>
<div class="yl" style="top:364px">0.4000</div>
<div class="xl" style="left:318px">0.4000</div>
<div class="yl" style="top:296px">0.5000</div>
<div class="xl" style="left:386px">0.5000</div>
<div class="yl" style="top:229px">0.6000</div>
<div class="xl" style="left:455px">0.6000</div>
<div class="yl" style="top:162px">0.7000</div>
<div class="xl" style="left:524px">0.7000</div>
<div class="yl" style="top:95px">0.8000</div>
<div class="xl" style="left:593px">0.8000</div>
<div class="yl" style="top:28px">0.9000</div>
<div class="xl" style="left:662px">0.9000</div>
<div style="position:absolute;left:17px;top:333px;font-size:11px;line-height:12px;transform:rotate(-90deg);transform-origin:50% 50%;">y</div>
<div style="position:absolute;left:380px;top:663px;font-size:11px;line-height:14px;">x</div>
</body></html>
